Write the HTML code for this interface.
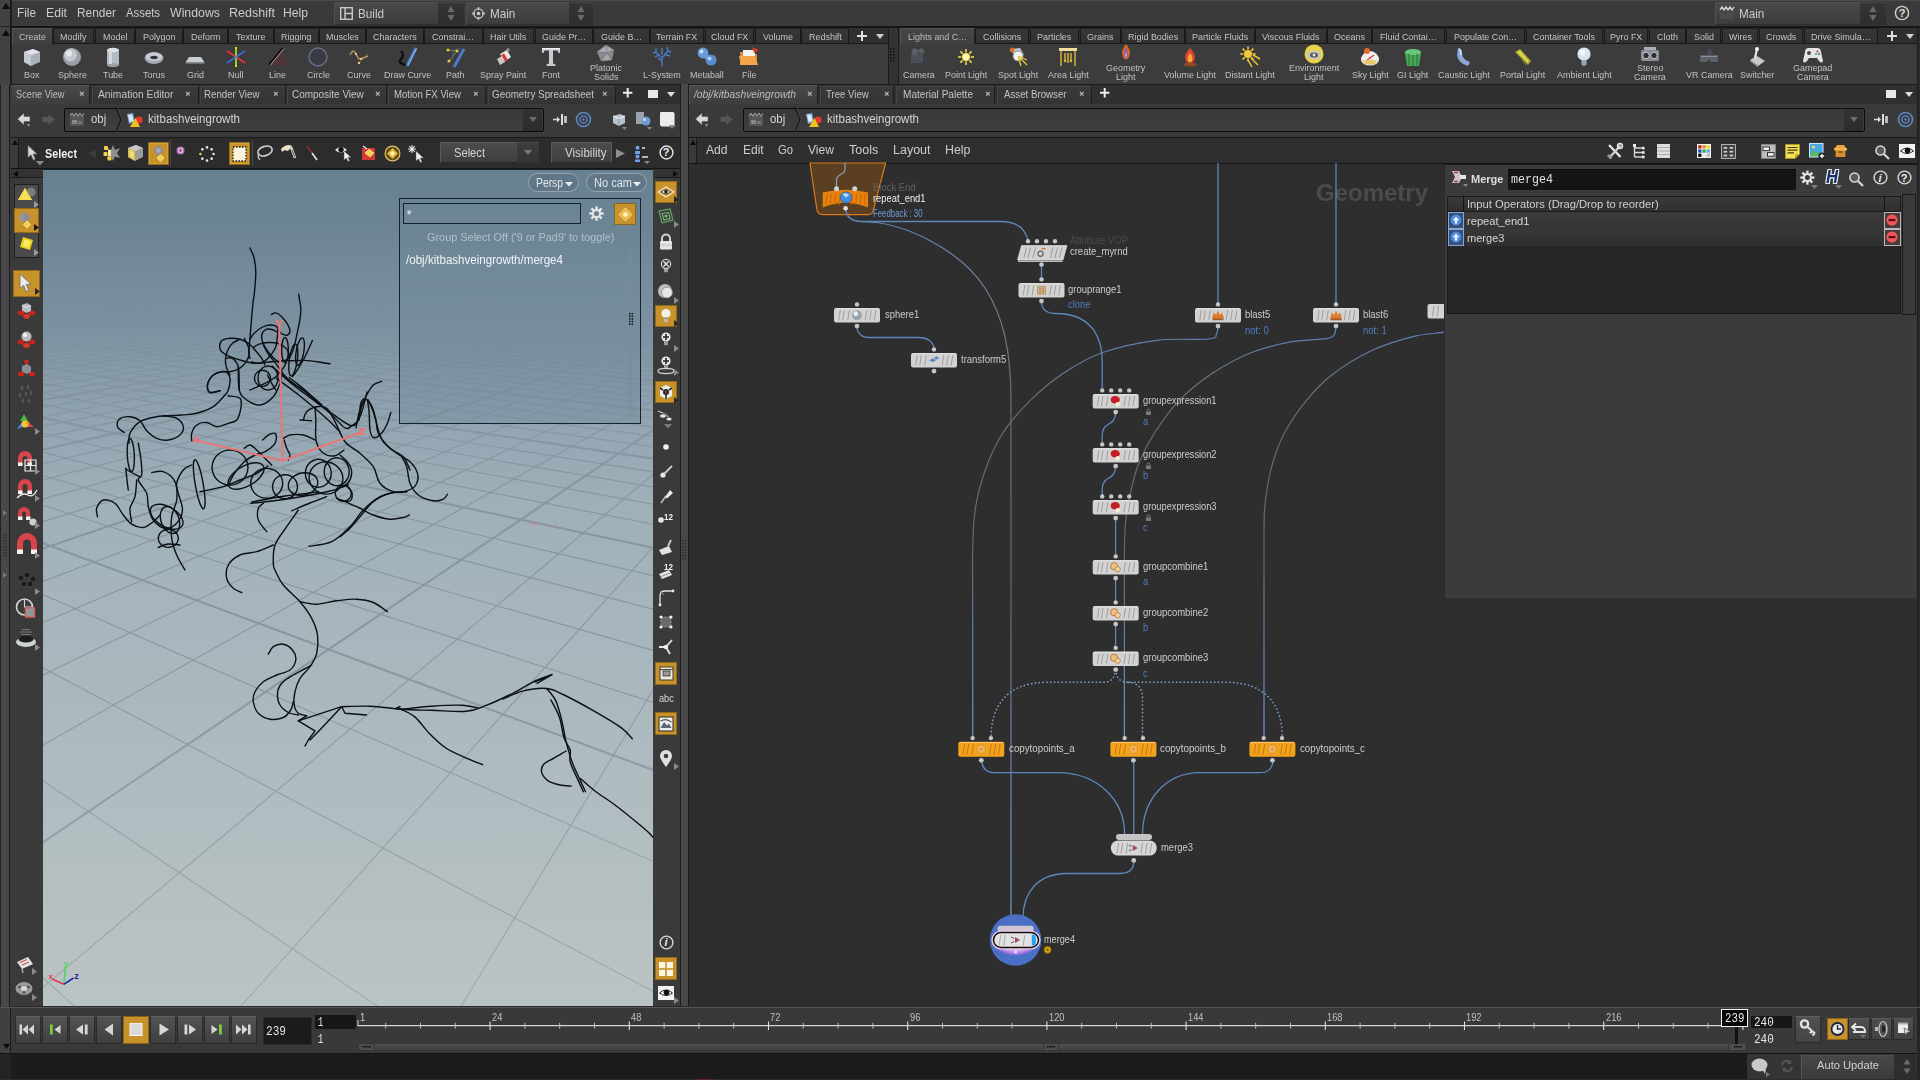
<!DOCTYPE html>
<html><head><meta charset="utf-8"><title>Houdini</title><style>
*{box-sizing:border-box;margin:0;padding:0}
html,body{width:1920px;height:1080px;overflow:hidden;background:#3a3a3a;font-family:"Liberation Sans",sans-serif;color:#ccc;font-size:12px}
.a{position:absolute}
.t{position:absolute;white-space:nowrap;line-height:1}
svg{position:absolute;overflow:visible}
</style></head><body>
<div class="a" style="left:0px;top:0px;width:1920px;height:27px;background:#3a3a3a;border-top:1px solid #4a4a4a"></div>
<div class="a" style="left:0px;top:26px;width:1920px;height:2px;background:#161616;"></div>
<div class="a" style="left:0px;top:0px;width:10px;height:1080px;background:#424242;"></div>
<div class="a" style="left:10px;top:0px;width:1.5px;height:1053px;background:#1c1c1c;"></div>
<svg class="a" style="left:2px;top:3px;" width="8" height="7" viewBox="0 0 8 7"><path d="M4 0 L8 6 L0 6Z" fill="#0c0c0c"/></svg>
<svg class="a" style="left:2px;top:30px;" width="8" height="7" viewBox="0 0 8 7"><path d="M4 0 L8 6 L0 6Z" fill="#0c0c0c"/></svg>
<div class="a" style="left:0px;top:26px;width:10px;height:1px;background:#222;"></div>
<div class="t" style="left:17.00px;top:7.36px;font-size:12.8px;color:#cbcbcb;transform:scaleX(0.9212);transform-origin:0 0;">File</div>
<div class="t" style="left:46.00px;top:7.36px;font-size:12.8px;color:#cbcbcb;transform:scaleX(0.9521);transform-origin:0 0;">Edit</div>
<div class="t" style="left:77.00px;top:7.36px;font-size:12.8px;color:#cbcbcb;transform:scaleX(0.9289);transform-origin:0 0;">Render</div>
<div class="t" style="left:126.00px;top:7.36px;font-size:12.8px;color:#cbcbcb;transform:scaleX(0.8851);transform-origin:0 0;">Assets</div>
<div class="t" style="left:170.00px;top:7.36px;font-size:12.8px;color:#cbcbcb;transform:scaleX(0.9629);transform-origin:0 0;">Windows</div>
<div class="t" style="left:229.00px;top:7.36px;font-size:12.8px;color:#cbcbcb;transform:scaleX(0.9796);transform-origin:0 0;">Redshift</div>
<div class="t" style="left:283.00px;top:7.36px;font-size:12.8px;color:#cbcbcb;transform:scaleX(0.9496);transform-origin:0 0;">Help</div>
<div class="a" style="left:334px;top:2px;width:104px;height:23px;background:linear-gradient(#4a4a4a,#3c3c3c);border:1px solid #505050;border-right:none;border-bottom-color:#2c2c2c"></div>
<div class="a" style="left:438px;top:2px;width:26px;height:23px;background:linear-gradient(#353535,#2e2e2e);border-top:1px solid #444;"></div>
<svg class="a" style="left:447px;top:6px;" width="8" height="15" viewBox="0 0 8 15"><path d="M4 0 L7.5 6 L0.5 6Z" fill="#6a6a6a"/><path d="M4 15 L7.5 9 L0.5 9 Z" fill="#6a6a6a"/></svg>
<div class="t" style="left:358.00px;top:7.30px;font-size:13px;color:#cbcbcb;transform:scaleX(0.9000);transform-origin:0 0;">Build</div>
<svg class="a" style="left:340px;top:7px;" width="13" height="13" viewBox="0 0 13 13"><rect x="0.7" y="0.7" width="11.6" height="11.6" fill="none" stroke="#c8c8c8" stroke-width="1.4"/><path d="M5 1V12M5 6.5H12" stroke="#c8c8c8" stroke-width="1.4"/></svg>
<div class="a" style="left:466px;top:2px;width:103px;height:23px;background:linear-gradient(#4a4a4a,#3c3c3c);border:1px solid #505050;border-right:none;border-bottom-color:#2c2c2c"></div>
<div class="a" style="left:569px;top:2px;width:24px;height:23px;background:linear-gradient(#353535,#2e2e2e);border-top:1px solid #444;"></div>
<svg class="a" style="left:577px;top:6px;" width="8" height="15" viewBox="0 0 8 15"><path d="M4 0 L7.5 6 L0.5 6Z" fill="#6a6a6a"/><path d="M4 15 L7.5 9 L0.5 9 Z" fill="#6a6a6a"/></svg>
<div class="t" style="left:490.00px;top:7.30px;font-size:13px;color:#cbcbcb;transform:scaleX(0.9000);transform-origin:0 0;">Main</div>
<svg class="a" style="left:472px;top:7px;" width="13" height="13" viewBox="0 0 13 13"><circle cx="6.5" cy="6.5" r="4.6" fill="none" stroke="#c8c8c8" stroke-width="1.3"/><circle cx="6.5" cy="6.5" r="1.8" fill="#c8c8c8"/><path d="M6.5 0V3M6.5 10V13M0 6.5H3M10 6.5H13" stroke="#c8c8c8" stroke-width="1.3"/></svg>
<div class="a" style="left:1715px;top:2px;width:145px;height:23px;background:linear-gradient(#4a4a4a,#3c3c3c);border:1px solid #505050;border-right:none;border-bottom-color:#2c2c2c"></div>
<div class="a" style="left:1860px;top:2px;width:26px;height:23px;background:linear-gradient(#353535,#2e2e2e);border-top:1px solid #444;"></div>
<svg class="a" style="left:1869px;top:6px;" width="8" height="15" viewBox="0 0 8 15"><path d="M4 0 L7.5 6 L0.5 6Z" fill="#6a6a6a"/><path d="M4 15 L7.5 9 L0.5 9 Z" fill="#6a6a6a"/></svg>
<div class="t" style="left:1739.00px;top:7.30px;font-size:13px;color:#cbcbcb;transform:scaleX(0.9000);transform-origin:0 0;">Main</div>
<svg class="a" style="left:1719px;top:6px;" width="16" height="14" viewBox="0 0 16 14"><path d="M1 6H15V13H1Z" fill="#4a4a4a"/><path d="M1 4L3 1L5 4L7 1L9 4L11 1L13 4L15 1" stroke="#ddd" stroke-width="1.3" fill="none"/></svg>
<svg class="a" style="left:1894px;top:5px;" width="16" height="16" viewBox="0 0 16 16"><circle cx="8" cy="8" r="6.6" fill="none" stroke="#d0d0d0" stroke-width="1.4"/></svg>
<div class="t" style="left:1898.64px;top:8.19px;font-size:11px;color:#e0e0e0;transform:scaleX(1.0000);transform-origin:0 0;font-weight:bold;">?</div>
<div class="a" style="left:12px;top:28px;width:876px;height:56px;background:#3c3c3c;"></div>
<div class="a" style="left:12px;top:28px;width:876px;height:16px;background:#2f2f2f;border-bottom:1px solid #1a1a1a"></div>
<div class="a" style="left:12px;top:28px;width:41px;height:17px;background:linear-gradient(#474747,#3e3e3e);border-left:1px solid #555;border-top:1px solid #555;border-right:1px solid #222"></div>
<div class="t" style="left:19.03px;top:31.64px;font-size:9.4px;color:#bdbdbd;transform:scaleX(0.9550);transform-origin:0 0;">Create</div>
<div class="a" style="left:53px;top:28px;width:41px;height:16px;background:linear-gradient(#373737,#303030);border:1px solid #191919;border-top:1px solid #222"></div>
<div class="t" style="left:60.28px;top:31.64px;font-size:9.4px;color:#c4c4c4;transform:scaleX(0.9550);transform-origin:0 0;">Modify</div>
<div class="a" style="left:95px;top:28px;width:40px;height:16px;background:linear-gradient(#373737,#303030);border:1px solid #191919;border-top:1px solid #222"></div>
<div class="t" style="left:102.77px;top:31.64px;font-size:9.4px;color:#c4c4c4;transform:scaleX(0.9550);transform-origin:0 0;">Model</div>
<div class="a" style="left:135px;top:28px;width:48px;height:16px;background:linear-gradient(#373737,#303030);border:1px solid #191919;border-top:1px solid #222"></div>
<div class="t" style="left:142.78px;top:31.64px;font-size:9.4px;color:#c4c4c4;transform:scaleX(0.9550);transform-origin:0 0;">Polygon</div>
<div class="a" style="left:183px;top:28px;width:45px;height:16px;background:linear-gradient(#373737,#303030);border:1px solid #191919;border-top:1px solid #222"></div>
<div class="t" style="left:190.79px;top:31.64px;font-size:9.4px;color:#c4c4c4;transform:scaleX(0.9550);transform-origin:0 0;">Deform</div>
<div class="a" style="left:228px;top:28px;width:46px;height:16px;background:linear-gradient(#373737,#303030);border:1px solid #191919;border-top:1px solid #222"></div>
<div class="t" style="left:236.28px;top:31.64px;font-size:9.4px;color:#c4c4c4;transform:scaleX(0.9550);transform-origin:0 0;">Texture</div>
<div class="a" style="left:274px;top:28px;width:45px;height:16px;background:linear-gradient(#373737,#303030);border:1px solid #191919;border-top:1px solid #222"></div>
<div class="t" style="left:281.28px;top:31.64px;font-size:9.4px;color:#c4c4c4;transform:scaleX(0.9550);transform-origin:0 0;">Rigging</div>
<div class="a" style="left:319px;top:28px;width:47px;height:16px;background:linear-gradient(#373737,#303030);border:1px solid #191919;border-top:1px solid #222"></div>
<div class="t" style="left:326.04px;top:31.64px;font-size:9.4px;color:#c4c4c4;transform:scaleX(0.9550);transform-origin:0 0;">Muscles</div>
<div class="a" style="left:366px;top:28px;width:58px;height:16px;background:linear-gradient(#373737,#303030);border:1px solid #191919;border-top:1px solid #222"></div>
<div class="t" style="left:373.05px;top:31.64px;font-size:9.4px;color:#c4c4c4;transform:scaleX(0.9550);transform-origin:0 0;">Characters</div>
<div class="a" style="left:424px;top:28px;width:59px;height:16px;background:linear-gradient(#373737,#303030);border:1px solid #191919;border-top:1px solid #222"></div>
<div class="t" style="left:432.30px;top:31.64px;font-size:9.4px;color:#c4c4c4;transform:scaleX(0.9550);transform-origin:0 0;">Constrai…</div>
<div class="a" style="left:483px;top:28px;width:51px;height:16px;background:linear-gradient(#373737,#303030);border:1px solid #191919;border-top:1px solid #222"></div>
<div class="t" style="left:490.30px;top:31.64px;font-size:9.4px;color:#c4c4c4;transform:scaleX(0.9550);transform-origin:0 0;">Hair Utils</div>
<div class="a" style="left:535px;top:28px;width:58px;height:16px;background:linear-gradient(#373737,#303030);border:1px solid #191919;border-top:1px solid #222"></div>
<div class="t" style="left:541.80px;top:31.64px;font-size:9.4px;color:#c4c4c4;transform:scaleX(0.9550);transform-origin:0 0;">Guide Pr…</div>
<div class="a" style="left:593px;top:28px;width:57px;height:16px;background:linear-gradient(#373737,#303030);border:1px solid #191919;border-top:1px solid #222"></div>
<div class="t" style="left:600.79px;top:31.64px;font-size:9.4px;color:#c4c4c4;transform:scaleX(0.9550);transform-origin:0 0;">Guide B…</div>
<div class="a" style="left:650px;top:28px;width:54px;height:16px;background:linear-gradient(#373737,#303030);border:1px solid #191919;border-top:1px solid #222"></div>
<div class="t" style="left:656.30px;top:31.64px;font-size:9.4px;color:#c4c4c4;transform:scaleX(0.9550);transform-origin:0 0;">Terrain FX</div>
<div class="a" style="left:705px;top:28px;width:49px;height:16px;background:linear-gradient(#373737,#303030);border:1px solid #191919;border-top:1px solid #222"></div>
<div class="t" style="left:710.79px;top:31.64px;font-size:9.4px;color:#c4c4c4;transform:scaleX(0.9550);transform-origin:0 0;">Cloud FX</div>
<div class="a" style="left:755px;top:28px;width:46px;height:16px;background:linear-gradient(#373737,#303030);border:1px solid #191919;border-top:1px solid #222"></div>
<div class="t" style="left:763.03px;top:31.64px;font-size:9.4px;color:#c4c4c4;transform:scaleX(0.9550);transform-origin:0 0;">Volume</div>
<div class="a" style="left:801px;top:28px;width:48px;height:16px;background:linear-gradient(#373737,#303030);border:1px solid #191919;border-top:1px solid #222"></div>
<div class="t" style="left:808.53px;top:31.64px;font-size:9.4px;color:#c4c4c4;transform:scaleX(0.9550);transform-origin:0 0;">Redshift</div>
<svg class="a" style="left:856.5px;top:31px;" width="10" height="10" viewBox="0 0 10 10"><path d="M5 0V10M0 5H10" stroke="#e0e0e0" stroke-width="2"/></svg>
<svg class="a" style="left:876px;top:34px;" width="8" height="5" viewBox="0 0 8 5"><path d="M0 0H8L4 5Z" fill="#d0d0d0"/></svg>
<div class="a" style="left:899px;top:28px;width:1018px;height:56px;background:#3c3c3c;"></div>
<div class="a" style="left:899px;top:28px;width:1018px;height:16px;background:#2f2f2f;border-bottom:1px solid #1a1a1a"></div>
<div class="a" style="left:900px;top:28px;width:75px;height:17px;background:linear-gradient(#474747,#3e3e3e);border-left:1px solid #555;border-top:1px solid #555;border-right:1px solid #222"></div>
<div class="t" style="left:907.81px;top:31.64px;font-size:9.4px;color:#bdbdbd;transform:scaleX(0.9550);transform-origin:0 0;">Lights and C…</div>
<div class="a" style="left:975px;top:28px;width:54px;height:16px;background:linear-gradient(#373737,#303030);border:1px solid #191919;border-top:1px solid #222"></div>
<div class="t" style="left:982.79px;top:31.64px;font-size:9.4px;color:#c4c4c4;transform:scaleX(0.9550);transform-origin:0 0;">Collisions</div>
<div class="a" style="left:1030px;top:28px;width:49px;height:16px;background:linear-gradient(#373737,#303030);border:1px solid #191919;border-top:1px solid #222"></div>
<div class="t" style="left:1037.29px;top:31.64px;font-size:9.4px;color:#c4c4c4;transform:scaleX(0.9550);transform-origin:0 0;">Particles</div>
<div class="a" style="left:1080px;top:28px;width:41px;height:16px;background:linear-gradient(#373737,#303030);border:1px solid #191919;border-top:1px solid #222"></div>
<div class="t" style="left:1087.28px;top:31.64px;font-size:9.4px;color:#c4c4c4;transform:scaleX(0.9550);transform-origin:0 0;">Grains</div>
<div class="a" style="left:1121px;top:28px;width:64px;height:16px;background:linear-gradient(#373737,#303030);border:1px solid #191919;border-top:1px solid #222"></div>
<div class="t" style="left:1127.80px;top:31.64px;font-size:9.4px;color:#c4c4c4;transform:scaleX(0.9550);transform-origin:0 0;">Rigid Bodies</div>
<div class="a" style="left:1185px;top:28px;width:70px;height:16px;background:linear-gradient(#373737,#303030);border:1px solid #191919;border-top:1px solid #222"></div>
<div class="t" style="left:1191.81px;top:31.64px;font-size:9.4px;color:#c4c4c4;transform:scaleX(0.9550);transform-origin:0 0;">Particle Fluids</div>
<div class="a" style="left:1255px;top:28px;width:72px;height:16px;background:linear-gradient(#373737,#303030);border:1px solid #191919;border-top:1px solid #222"></div>
<div class="t" style="left:1262.14px;top:31.64px;font-size:9.4px;color:#c4c4c4;transform:scaleX(0.9550);transform-origin:0 0;">Viscous Fluids</div>
<div class="a" style="left:1327px;top:28px;width:45px;height:16px;background:linear-gradient(#373737,#303030);border:1px solid #191919;border-top:1px solid #222"></div>
<div class="t" style="left:1334.03px;top:31.64px;font-size:9.4px;color:#c4c4c4;transform:scaleX(0.9550);transform-origin:0 0;">Oceans</div>
<div class="a" style="left:1372px;top:28px;width:73px;height:16px;background:linear-gradient(#373737,#303030);border:1px solid #191919;border-top:1px solid #222"></div>
<div class="t" style="left:1380.06px;top:31.64px;font-size:9.4px;color:#c4c4c4;transform:scaleX(0.9550);transform-origin:0 0;">Fluid Contai…</div>
<div class="a" style="left:1446px;top:28px;width:79px;height:16px;background:linear-gradient(#373737,#303030);border:1px solid #191919;border-top:1px solid #222"></div>
<div class="t" style="left:1453.81px;top:31.64px;font-size:9.4px;color:#c4c4c4;transform:scaleX(0.9550);transform-origin:0 0;">Populate Con…</div>
<div class="a" style="left:1526px;top:28px;width:77px;height:16px;background:linear-gradient(#373737,#303030);border:1px solid #191919;border-top:1px solid #222"></div>
<div class="t" style="left:1533.39px;top:31.64px;font-size:9.4px;color:#c4c4c4;transform:scaleX(0.9550);transform-origin:0 0;">Container Tools</div>
<div class="a" style="left:1604px;top:28px;width:44px;height:16px;background:linear-gradient(#373737,#303030);border:1px solid #191919;border-top:1px solid #222"></div>
<div class="t" style="left:1609.79px;top:31.64px;font-size:9.4px;color:#c4c4c4;transform:scaleX(0.9550);transform-origin:0 0;">Pyro FX</div>
<div class="a" style="left:1649px;top:28px;width:37px;height:16px;background:linear-gradient(#373737,#303030);border:1px solid #191919;border-top:1px solid #222"></div>
<div class="t" style="left:1657.02px;top:31.64px;font-size:9.4px;color:#c4c4c4;transform:scaleX(0.9550);transform-origin:0 0;">Cloth</div>
<div class="a" style="left:1686px;top:28px;width:35px;height:16px;background:linear-gradient(#373737,#303030);border:1px solid #191919;border-top:1px solid #222"></div>
<div class="t" style="left:1693.52px;top:31.64px;font-size:9.4px;color:#c4c4c4;transform:scaleX(0.9550);transform-origin:0 0;">Solid</div>
<div class="a" style="left:1722px;top:28px;width:36px;height:16px;background:linear-gradient(#373737,#303030);border:1px solid #191919;border-top:1px solid #222"></div>
<div class="t" style="left:1728.53px;top:31.64px;font-size:9.4px;color:#c4c4c4;transform:scaleX(0.9550);transform-origin:0 0;">Wires</div>
<div class="a" style="left:1759px;top:28px;width:44px;height:16px;background:linear-gradient(#373737,#303030);border:1px solid #191919;border-top:1px solid #222"></div>
<div class="t" style="left:1765.79px;top:31.64px;font-size:9.4px;color:#c4c4c4;transform:scaleX(0.9550);transform-origin:0 0;">Crowds</div>
<div class="a" style="left:1804px;top:28px;width:74px;height:16px;background:linear-gradient(#373737,#303030);border:1px solid #191919;border-top:1px solid #222"></div>
<div class="t" style="left:1811.07px;top:31.64px;font-size:9.4px;color:#c4c4c4;transform:scaleX(0.9550);transform-origin:0 0;">Drive Simula…</div>
<svg class="a" style="left:1887px;top:31px;" width="10" height="10" viewBox="0 0 10 10"><path d="M5 0V10M0 5H10" stroke="#e0e0e0" stroke-width="2"/></svg>
<svg class="a" style="left:1906px;top:34px;" width="8" height="5" viewBox="0 0 8 5"><path d="M0 0H8L4 5Z" fill="#d0d0d0"/></svg>
<div class="a" style="left:888px;top:28px;width:11px;height:56px;background:#333;border-left:1px solid #1c1c1c;border-right:1px solid #1c1c1c"></div>
<svg class="a" style="left:890px;top:48px;" width="6" height="14" viewBox="0 0 6 14"><rect x="0" y="0" width="1.6" height="1.6" fill="#111"/><rect x="0" y="3" width="1.6" height="1.6" fill="#111"/><rect x="0" y="6" width="1.6" height="1.6" fill="#111"/><rect x="0" y="9" width="1.6" height="1.6" fill="#111"/><rect x="0" y="12" width="1.6" height="1.6" fill="#111"/><rect x="3" y="0" width="1.6" height="1.6" fill="#111"/><rect x="3" y="3" width="1.6" height="1.6" fill="#111"/><rect x="3" y="6" width="1.6" height="1.6" fill="#111"/><rect x="3" y="9" width="1.6" height="1.6" fill="#111"/><rect x="3" y="12" width="1.6" height="1.6" fill="#111"/></svg>
<div class="a" style="left:1917px;top:28px;width:3px;height:56px;background:#2a2a2a;border-left:1px solid #1c1c1c"></div>
<div class="a" style="left:12px;top:83.5px;width:1908px;height:1.5px;background:#1b1b1b;"></div>
<svg class="a" style="left:21px;top:46px;" width="22" height="22" viewBox="0 0 22 22"><path d="M3 6L12 3L19 6L19 16L10 20L3 16Z" fill="#a9b0b8"/><path d="M3 6L10 9L19 6L12 3Z" fill="#dfe3e8"/><path d="M3 6L10 9L10 20L3 16Z" fill="#c4cad2"/></svg>
<div class="t" style="left:24.26px;top:69.84px;font-size:9.4px;color:#c2c2c2;transform:scaleX(0.9550);transform-origin:0 0;">Box</div>
<svg class="a" style="left:61px;top:46px;" width="22" height="22" viewBox="0 0 22 22"><circle cx="11" cy="11" r="9" fill="#9aa0a8"/><circle cx="9.5" cy="9" r="6.5" fill="#c2c7ce"/><circle cx="8" cy="7.5" r="3" fill="#e4e7eb"/></svg>
<div class="t" style="left:57.52px;top:69.84px;font-size:9.4px;color:#c2c2c2;transform:scaleX(0.9550);transform-origin:0 0;">Sphere</div>
<svg class="a" style="left:102px;top:46px;" width="22" height="22" viewBox="0 0 22 22"><rect x="5" y="4" width="12" height="15" fill="#b4bac2"/><ellipse cx="11" cy="19" rx="6" ry="2" fill="#9aa0a8"/><ellipse cx="11" cy="4" rx="6" ry="2.2" fill="#e0e4e8"/><rect x="7" y="5" width="3" height="13" fill="#d4d9de"/></svg>
<div class="t" style="left:102.93px;top:69.84px;font-size:9.4px;color:#c2c2c2;transform:scaleX(0.9550);transform-origin:0 0;">Tube</div>
<svg class="a" style="left:143px;top:46px;" width="22" height="22" viewBox="0 0 22 22"><ellipse cx="11" cy="12" rx="9.5" ry="6" fill="#a4aab4"/><ellipse cx="11" cy="10.8" rx="8" ry="4.2" fill="#c8cdd4"/><ellipse cx="11" cy="11.5" rx="3.8" ry="1.7" fill="#2e3238"/></svg>
<div class="t" style="left:143.02px;top:69.84px;font-size:9.4px;color:#c2c2c2;transform:scaleX(0.9550);transform-origin:0 0;">Torus</div>
<svg class="a" style="left:184px;top:46px;" width="22" height="22" viewBox="0 0 22 22"><path d="M5 11H17L20.5 16.5H1.5Z" fill="#c8ccd2"/><path d="M1.5 16.5H20.5V17.6H1.5Z" fill="#8a9098"/></svg>
<div class="t" style="left:186.52px;top:69.84px;font-size:9.4px;color:#c2c2c2;transform:scaleX(0.9550);transform-origin:0 0;">Grid</div>
<svg class="a" style="left:225px;top:46px;" width="22" height="22" viewBox="0 0 22 22"><path d="M11 1V21" stroke="#e8d21c" stroke-width="2"/><path d="M2 5L20 17" stroke="#e0303a" stroke-width="2"/><path d="M20 5L2 17" stroke="#3a6ad8" stroke-width="2"/><path d="M11 3V19" stroke="#3ac83a" stroke-width="1" /></svg>
<div class="t" style="left:228.27px;top:69.84px;font-size:9.4px;color:#c2c2c2;transform:scaleX(0.9550);transform-origin:0 0;">Null</div>
<svg class="a" style="left:266px;top:46px;" width="22" height="22" viewBox="0 0 22 22"><path d="M3 19L17 2L20 19Z" fill="#5a3038" opacity=".7"/><path d="M3 19L17 2" stroke="#101010" stroke-width="2.2"/><path d="M4 19.5L18 2.5" stroke="#c8c8c8" stroke-width=".8"/></svg>
<div class="t" style="left:268.51px;top:69.84px;font-size:9.4px;color:#c2c2c2;transform:scaleX(0.9550);transform-origin:0 0;">Line</div>
<svg class="a" style="left:307px;top:46px;" width="22" height="22" viewBox="0 0 22 22"><circle cx="11" cy="11" r="9" fill="#3a3c44" stroke="#6a7088" stroke-width="1.4"/></svg>
<div class="t" style="left:306.53px;top:69.84px;font-size:9.4px;color:#c2c2c2;transform:scaleX(0.9550);transform-origin:0 0;">Circle</div>
<svg class="a" style="left:348px;top:46px;" width="22" height="22" viewBox="0 0 22 22"><path d="M2 9Q5 2 8 8T13 13T20 10" fill="none" stroke="#b89a6a" stroke-width="1.4"/><path d="M4 4L8 8L11 17L16 12L20 7" fill="none" stroke="#8a7a4a" stroke-width=".7" stroke-dasharray="1.5 1.2"/><circle cx="8" cy="8" r="1.2" fill="#e8c86a"/><circle cx="13" cy="13" r="1.2" fill="#e8c86a"/><circle cx="11" cy="17" r="1.2" fill="#e8c86a"/></svg>
<div class="t" style="left:347.03px;top:69.84px;font-size:9.4px;color:#c2c2c2;transform:scaleX(0.9550);transform-origin:0 0;">Curve</div>
<svg class="a" style="left:397px;top:46px;" width="22" height="22" viewBox="0 0 22 22"><path d="M4 5Q8 9 4 13T9 19" fill="none" stroke="#101014" stroke-width="2.4"/><path d="M10 20L19 2" stroke="#4a7ac8" stroke-width="3.2"/><path d="M11 19L19.5 2.5" stroke="#9ac0f0" stroke-width="1"/></svg>
<div class="t" style="left:384.31px;top:69.84px;font-size:9.4px;color:#c2c2c2;transform:scaleX(0.9550);transform-origin:0 0;">Draw Curve</div>
<svg class="a" style="left:444px;top:46px;" width="22" height="22" viewBox="0 0 22 22"><path d="M3 17Q10 14 9 8T17 3" fill="none" stroke="#3a5a9a" stroke-width="1"/><path d="M10 21L20 3" stroke="#4a7ac8" stroke-width="3"/><circle cx="4" cy="4" r="1.5" fill="#e8c83a"/><circle cx="13" cy="5" r="1.5" fill="#e8c83a"/><circle cx="5" cy="15" r="1.5" fill="#e8c83a"/><path d="M4 4L13 5L5 15" fill="none" stroke="#e8c83a" stroke-width=".8" stroke-dasharray="1.5 1.2"/></svg>
<div class="t" style="left:445.76px;top:69.84px;font-size:9.4px;color:#c2c2c2;transform:scaleX(0.9550);transform-origin:0 0;">Path</div>
<svg class="a" style="left:492px;top:46px;" width="22" height="22" viewBox="0 0 22 22"><path d="M8 8L15 4L19 11L12 16Z" fill="#e8e8e8"/><path d="M9 9L12 7.5L16 14L13 15.5Z" fill="#d83a3a"/><path d="M5 13L10 10L13 16L8 19Z" fill="#c8c8c8"/><circle cx="16" cy="4" r="1.8" fill="#9a9a9a"/></svg>
<div class="t" style="left:479.79px;top:69.84px;font-size:9.4px;color:#c2c2c2;transform:scaleX(0.9550);transform-origin:0 0;">Spray Paint</div>
<svg class="a" style="left:540px;top:46px;" width="22" height="22" viewBox="0 0 22 22"><path d="M2 2H20V7H18.5L17.5 4.5H13V17.5L15.5 18.5V20H6.5V18.5L9 17.5V4.5H4.5L3.5 7H2Z" fill="#c8ccd0"/><path d="M2 2H20V3.4H2Z" fill="#eef0f2"/></svg>
<div class="t" style="left:542.02px;top:69.84px;font-size:9.4px;color:#c2c2c2;transform:scaleX(0.9550);transform-origin:0 0;">Font</div>
<svg class="a" style="left:595px;top:43px;" width="22" height="22" viewBox="0 0 22 22"><path d="M11 2L19 7L17 17L6 18L2 9Z" fill="#8a8a90"/><path d="M11 2L12 10L19 7ZM12 10L17 17L6 18ZM12 10L2 9L11 2" fill="#a8a8ae" stroke="#6a6a70" stroke-width=".6"/></svg>
<div class="t" style="left:590.03px;top:62.84px;font-size:9.4px;color:#c2c2c2;transform:scaleX(0.9550);transform-origin:0 0;">Platonic</div>
<div class="t" style="left:593.77px;top:71.84px;font-size:9.4px;color:#c2c2c2;transform:scaleX(0.9550);transform-origin:0 0;">Solids</div>
<svg class="a" style="left:651px;top:46px;" width="22" height="22" viewBox="0 0 22 22"><path d="M11 21V12M11 12L5 6M11 12L17 5M11 15L7 12M11 9V2M5 6L2 7M5 6L5 2M17 5L20 6M17 5L16 1M8 9L4 11M14 8.5L19 10" stroke="#4a7ac8" stroke-width="1.4" fill="none"/></svg>
<div class="t" style="left:643.04px;top:69.84px;font-size:9.4px;color:#c2c2c2;transform:scaleX(0.9550);transform-origin:0 0;">L-System</div>
<svg class="a" style="left:696px;top:46px;" width="22" height="22" viewBox="0 0 22 22"><circle cx="7" cy="7" r="5.4" fill="#6a9ad8"/><circle cx="15" cy="14" r="5.6" fill="#5a8ad0"/><path d="M9 10L12 11" stroke="#6a9ad8" stroke-width="5"/><circle cx="5.5" cy="5.5" r="2" fill="#c8e0f8"/><circle cx="13.5" cy="12.5" r="2" fill="#b8d4f4"/></svg>
<div class="t" style="left:690.03px;top:69.84px;font-size:9.4px;color:#c2c2c2;transform:scaleX(0.9550);transform-origin:0 0;">Metaball</div>
<svg class="a" style="left:738px;top:46px;" width="22" height="22" viewBox="0 0 22 22"><path d="M2 6H8L10 8H19V19H2Z" fill="#e8862a"/><path d="M5 4H17V14H5Z" fill="#f4f4f4"/><path d="M1 10H17L20 19H3Z" fill="#f4a44a"/><path d="M14 1L21 4L16 7Z" fill="#d83a2a"/></svg>
<div class="t" style="left:741.77px;top:69.84px;font-size:9.4px;color:#c2c2c2;transform:scaleX(0.9550);transform-origin:0 0;">File</div>
<svg class="a" style="left:908px;top:46px;" width="22" height="22" viewBox="0 0 22 22"><path d="M3 8H15V17H3Z" fill="#4a4e56"/><circle cx="7" cy="6" r="3.4" fill="#5a5e66"/><circle cx="13.5" cy="5" r="2.8" fill="#5a5e66"/><path d="M15 11L20 8V17L15 14Z" fill="#3a3e46"/><path d="M5 17L3 21M12 17L14 21" stroke="#3a3e46" stroke-width="1.4"/></svg>
<div class="t" style="left:903.04px;top:69.84px;font-size:9.4px;color:#c2c2c2;transform:scaleX(0.9550);transform-origin:0 0;">Camera</div>
<svg class="a" style="left:955px;top:46px;" width="22" height="22" viewBox="0 0 22 22"><line x1="15.8" y1="11.0" x2="19.0" y2="11.0" stroke="#f0d84a" stroke-width="1.6"/><line x1="14.4" y1="14.4" x2="16.6" y2="16.6" stroke="#f0d84a" stroke-width="1.6"/><line x1="11.0" y1="15.8" x2="11.0" y2="19.0" stroke="#f0d84a" stroke-width="1.6"/><line x1="7.6" y1="14.4" x2="5.4" y2="16.6" stroke="#f0d84a" stroke-width="1.6"/><line x1="6.2" y1="11.0" x2="3.0" y2="11.0" stroke="#f0d84a" stroke-width="1.6"/><line x1="7.6" y1="7.6" x2="5.4" y2="5.4" stroke="#f0d84a" stroke-width="1.6"/><line x1="11.0" y1="6.2" x2="11.0" y2="3.0" stroke="#f0d84a" stroke-width="1.6"/><line x1="14.4" y1="7.6" x2="16.6" y2="5.4" stroke="#f0d84a" stroke-width="1.6"/><circle cx="11" cy="11" r="4.2" fill="#f0d84a"/><circle cx="11" cy="11" r="3" fill="#fff6c0"/></svg>
<div class="t" style="left:944.79px;top:69.84px;font-size:9.4px;color:#c2c2c2;transform:scaleX(0.9550);transform-origin:0 0;">Point Light</div>
<svg class="a" style="left:1007px;top:46px;" width="22" height="22" viewBox="0 0 22 22"><path d="M4 3L13 2L17 9L8 12Z" fill="#c8c8c8"/><circle cx="11" cy="10" r="5" fill="#f4f4f4" stroke="#8a8a8a"/><path d="M11 10L20 19M11 10L14 20M11 10L20 14" stroke="#e8c83a" stroke-width="1.3"/><circle cx="5" cy="4" r="2.4" fill="#d86a2a"/></svg>
<div class="t" style="left:997.78px;top:69.84px;font-size:9.4px;color:#c2c2c2;transform:scaleX(0.9550);transform-origin:0 0;">Spot Light</div>
<svg class="a" style="left:1057px;top:46px;" width="22" height="22" viewBox="0 0 22 22"><path d="M2 2H20V5H2Z" fill="#f0e09a"/><path d="M4 5V20M18 5V20" stroke="#c8a83a" stroke-width="1.6"/><path d="M8 7V15M11 7V17M14 7V15" stroke="#e8c83a" stroke-width="1.3"/><path d="M6.5 14L8 17L9.5 14M12.5 14L14 17L15.5 14" fill="#e8c83a"/></svg>
<div class="t" style="left:1047.54px;top:69.84px;font-size:9.4px;color:#c2c2c2;transform:scaleX(0.9550);transform-origin:0 0;">Area Light</div>
<svg class="a" style="left:1115px;top:43px;" width="22" height="22" viewBox="0 0 22 22"><path d="M11 1Q17 8 14 14Q11 19 8 14Q5 8 11 1Z" fill="#d8642a"/><path d="M11 5Q14 10 12.5 14Q11 16 9.5 14Q8 10 11 5Z" fill="#8a5ac8"/><path d="M11 9Q12.5 12 11 15Q9.5 12 11 9Z" fill="#f4d84a"/></svg>
<div class="t" style="left:1106.29px;top:62.84px;font-size:9.4px;color:#c2c2c2;transform:scaleX(0.9550);transform-origin:0 0;">Geometry</div>
<div class="t" style="left:1116.27px;top:71.84px;font-size:9.4px;color:#c2c2c2;transform:scaleX(0.9550);transform-origin:0 0;">Light</div>
<svg class="a" style="left:1179px;top:46px;" width="22" height="22" viewBox="0 0 22 22"><path d="M11 2Q18 9 15 15Q11 20 7 15Q4 9 11 2Z" fill="#e0442a"/><path d="M11 7Q14.5 11 13 15Q11 17.5 9 15Q7.5 11 11 7Z" fill="#f4a83a"/><ellipse cx="11" cy="18.5" rx="7" ry="2" fill="#8a4a2a"/></svg>
<div class="t" style="left:1164.05px;top:69.84px;font-size:9.4px;color:#c2c2c2;transform:scaleX(0.9550);transform-origin:0 0;">Volume Light</div>
<svg class="a" style="left:1239px;top:46px;" width="22" height="22" viewBox="0 0 22 22"><line x1="13.6" y1="8.0" x2="16.6" y2="8.0" stroke="#f0c83a" stroke-width="1.6"/><line x1="12.3" y1="11.3" x2="14.4" y2="13.4" stroke="#f0c83a" stroke-width="1.6"/><line x1="9.0" y1="12.6" x2="9.0" y2="15.6" stroke="#f0c83a" stroke-width="1.6"/><line x1="5.7" y1="11.3" x2="3.6" y2="13.4" stroke="#f0c83a" stroke-width="1.6"/><line x1="4.4" y1="8.0" x2="1.4" y2="8.0" stroke="#f0c83a" stroke-width="1.6"/><line x1="5.7" y1="4.7" x2="3.6" y2="2.6" stroke="#f0c83a" stroke-width="1.6"/><line x1="9.0" y1="3.4" x2="9.0" y2="0.4" stroke="#f0c83a" stroke-width="1.6"/><line x1="12.3" y1="4.7" x2="14.4" y2="2.6" stroke="#f0c83a" stroke-width="1.6"/><circle cx="9" cy="8" r="4" fill="#f0c83a"/><path d="M12 12L19 19M9 14L13 21M14 9L21 13" stroke="#e8c83a" stroke-width="1.5"/></svg>
<div class="t" style="left:1225.05px;top:69.84px;font-size:9.4px;color:#c2c2c2;transform:scaleX(0.9550);transform-origin:0 0;">Distant Light</div>
<svg class="a" style="left:1303px;top:43px;" width="22" height="22" viewBox="0 0 22 22"><circle cx="11" cy="11" r="9.5" fill="#e8d44a"/><ellipse cx="11" cy="12" rx="7.5" ry="4.6" fill="#c8c8b8"/><ellipse cx="11" cy="12" rx="4" ry="2.6" fill="#5a5a5a"/><circle cx="11" cy="12" r="1.4" fill="#e8e8e8"/></svg>
<div class="t" style="left:1288.80px;top:62.84px;font-size:9.4px;color:#c2c2c2;transform:scaleX(0.9550);transform-origin:0 0;">Environment</div>
<div class="t" style="left:1304.27px;top:71.84px;font-size:9.4px;color:#c2c2c2;transform:scaleX(0.9550);transform-origin:0 0;">Light</div>
<svg class="a" style="left:1359px;top:46px;" width="22" height="22" viewBox="0 0 22 22"><ellipse cx="11" cy="14" rx="9" ry="5.6" fill="#e8dcc0"/><path d="M2 14A9 9 0 0 1 20 14Z" fill="#f0f0f0"/><circle cx="8" cy="5" r="3" fill="#e86a2a"/><path d="M8 14L15 9" stroke="#d83a3a" stroke-width="1.4"/><ellipse cx="11" cy="16" rx="6" ry="2.4" fill="#e8c86a"/></svg>
<div class="t" style="left:1351.54px;top:69.84px;font-size:9.4px;color:#c2c2c2;transform:scaleX(0.9550);transform-origin:0 0;">Sky Light</div>
<svg class="a" style="left:1402px;top:46px;" width="22" height="22" viewBox="0 0 22 22"><path d="M3 7Q11 3 19 7L17 20H5Z" fill="#4aa85a"/><ellipse cx="11" cy="6" rx="8" ry="3" fill="#6ac87a"/><path d="M7 8V19M11 9V20M15 8V19" stroke="#2a7a3a" stroke-width="1.2"/></svg>
<div class="t" style="left:1397.28px;top:69.84px;font-size:9.4px;color:#c2c2c2;transform:scaleX(0.9550);transform-origin:0 0;">GI Light</div>
<svg class="a" style="left:1453px;top:46px;" width="22" height="22" viewBox="0 0 22 22"><path d="M5 2Q9 2 9 8Q10 14 17 16L15 20Q5 17 4 9Z" fill="#8aa8d8"/><path d="M6 3Q8 4 8 9" stroke="#d8e6f8" stroke-width="1.6" fill="none"/></svg>
<div class="t" style="left:1438.05px;top:69.84px;font-size:9.4px;color:#c2c2c2;transform:scaleX(0.9550);transform-origin:0 0;">Caustic Light</div>
<svg class="a" style="left:1512px;top:46px;" width="22" height="22" viewBox="0 0 22 22"><path d="M3 6L8 3L19 15L16 19Z" fill="#a8a83a"/><path d="M5 6L8 4.5L17 15L15.5 17Z" fill="#d8d84a"/><path d="M9 12L14 19" stroke="#6a7a2a" stroke-width="1.4"/></svg>
<div class="t" style="left:1500.29px;top:69.84px;font-size:9.4px;color:#c2c2c2;transform:scaleX(0.9550);transform-origin:0 0;">Portal Light</div>
<svg class="a" style="left:1573px;top:46px;" width="22" height="22" viewBox="0 0 22 22"><circle cx="11" cy="8" r="6.6" fill="#d8e4ea"/><circle cx="9.5" cy="6.5" r="3" fill="#f4f8fa"/><rect x="8.5" y="14" width="5" height="5" fill="#9aa8b0"/><rect x="9.5" y="19" width="3" height="1.6" fill="#6a7880"/></svg>
<div class="t" style="left:1556.55px;top:69.84px;font-size:9.4px;color:#c2c2c2;transform:scaleX(0.9550);transform-origin:0 0;">Ambient Light</div>
<svg class="a" style="left:1639px;top:43px;" width="22" height="22" viewBox="0 0 22 22"><rect x="2" y="7" width="18" height="11" rx="1.5" fill="#8a8e96"/><circle cx="7" cy="12.5" r="3.2" fill="#2a2e36" stroke="#c8c8c8"/><circle cx="15" cy="12.5" r="3.2" fill="#2a2e36" stroke="#c8c8c8"/><rect x="5" y="4" width="12" height="3" fill="#a8acb4"/></svg>
<div class="t" style="left:1636.77px;top:62.84px;font-size:9.4px;color:#c2c2c2;transform:scaleX(0.9550);transform-origin:0 0;">Stereo</div>
<div class="t" style="left:1634.04px;top:71.84px;font-size:9.4px;color:#c2c2c2;transform:scaleX(0.9550);transform-origin:0 0;">Camera</div>
<svg class="a" style="left:1698px;top:46px;" width="22" height="22" viewBox="0 0 22 22"><path d="M2 9H20V16H13L11 13.5L9 16H2Z" fill="#5a6068"/><path d="M11 2L15 7L13 9H9Z" fill="#4a5058"/><path d="M3 10.5H19" stroke="#8a9098" stroke-width="1"/></svg>
<div class="t" style="left:1685.55px;top:69.84px;font-size:9.4px;color:#c2c2c2;transform:scaleX(0.9550);transform-origin:0 0;">VR Camera</div>
<svg class="a" style="left:1746px;top:46px;" width="22" height="22" viewBox="0 0 22 22"><path d="M4 14L11 10L19 15L12 20Z" fill="#c8c8c8"/><path d="M9 12L11 3" stroke="#e8e8e8" stroke-width="2.2"/><circle cx="11" cy="3" r="2" fill="#f4f4f4"/><path d="M4 14L12 20V21.6L4 15.6Z" fill="#8a8a8a"/></svg>
<div class="t" style="left:1739.79px;top:69.84px;font-size:9.4px;color:#c2c2c2;transform:scaleX(0.9550);transform-origin:0 0;">Switcher</div>
<svg class="a" style="left:1802px;top:43px;" width="22" height="22" viewBox="0 0 22 22"><path d="M3 9Q3 5 7 5H15Q19 5 19 9L21 18Q20 21 17 18L15 15H7L5 18Q2 21 1 18Z" fill="#e4e4e4"/><circle cx="7" cy="10" r="2" fill="#4a4a4a"/><circle cx="15.5" cy="8.6" r="1.1" fill="#d83a3a"/><circle cx="17" cy="11" r="1.1" fill="#3a6ad8"/><circle cx="14" cy="11" r="1.1" fill="#3ac83a"/></svg>
<div class="t" style="left:1793.29px;top:62.84px;font-size:9.4px;color:#c2c2c2;transform:scaleX(0.9550);transform-origin:0 0;">Gamepad</div>
<div class="t" style="left:1797.04px;top:71.84px;font-size:9.4px;color:#c2c2c2;transform:scaleX(0.9550);transform-origin:0 0;">Camera</div>
<div class="a" style="left:11px;top:85px;width:669px;height:19px;background:#303030;"></div>
<div class="a" style="left:11px;top:85px;width:79px;height:20px;background:linear-gradient(#484848,#3d3d3d);border-left:1px solid #555;border-top:1px solid #565656;border-right:1px solid #222"></div>
<div class="t" style="left:15.60px;top:88.91px;font-size:10.5px;color:#bcbcbc;transform:scaleX(0.8777);transform-origin:0 0;">Scene View</div>
<svg class="a" style="left:80.2px;top:92.2px;" width="3.6" height="3.6" viewBox="0 0 3.6 3.6"><path d="M0 0L3.6 3.6M3.6 0L0 3.6" stroke="#b8b8b8" stroke-width="1.1"/></svg>
<div class="a" style="left:92px;top:86px;width:107px;height:18px;background:linear-gradient(#3a3a3a,#343434);border-left:1px solid #444;border-right:1px solid #1e1e1e;border-top:1px solid #444"></div>
<div class="t" style="left:97.70px;top:88.91px;font-size:10.5px;color:#c4c4c4;transform:scaleX(0.9800);transform-origin:0 0;">Animation Editor</div>
<svg class="a" style="left:186px;top:92.2px;" width="3.6" height="3.6" viewBox="0 0 3.6 3.6"><path d="M0 0L3.6 3.6M3.6 0L0 3.6" stroke="#b8b8b8" stroke-width="1.1"/></svg>
<div class="a" style="left:200px;top:86px;width:86px;height:18px;background:linear-gradient(#3a3a3a,#343434);border-left:1px solid #444;border-right:1px solid #1e1e1e;border-top:1px solid #444"></div>
<div class="t" style="left:204.00px;top:88.91px;font-size:10.5px;color:#c4c4c4;transform:scaleX(0.9245);transform-origin:0 0;">Render View</div>
<svg class="a" style="left:274.2px;top:92.2px;" width="3.6" height="3.6" viewBox="0 0 3.6 3.6"><path d="M0 0L3.6 3.6M3.6 0L0 3.6" stroke="#b8b8b8" stroke-width="1.1"/></svg>
<div class="a" style="left:287px;top:86px;width:100px;height:18px;background:linear-gradient(#3a3a3a,#343434);border-left:1px solid #444;border-right:1px solid #1e1e1e;border-top:1px solid #444"></div>
<div class="t" style="left:291.60px;top:88.91px;font-size:10.5px;color:#c4c4c4;transform:scaleX(0.9488);transform-origin:0 0;">Composite View</div>
<svg class="a" style="left:376.2px;top:92.2px;" width="3.6" height="3.6" viewBox="0 0 3.6 3.6"><path d="M0 0L3.6 3.6M3.6 0L0 3.6" stroke="#b8b8b8" stroke-width="1.1"/></svg>
<div class="a" style="left:388px;top:86px;width:98px;height:18px;background:linear-gradient(#3a3a3a,#343434);border-left:1px solid #444;border-right:1px solid #1e1e1e;border-top:1px solid #444"></div>
<div class="t" style="left:394.00px;top:88.91px;font-size:10.5px;color:#c4c4c4;transform:scaleX(0.9136);transform-origin:0 0;">Motion FX View</div>
<svg class="a" style="left:474px;top:92.2px;" width="3.6" height="3.6" viewBox="0 0 3.6 3.6"><path d="M0 0L3.6 3.6M3.6 0L0 3.6" stroke="#b8b8b8" stroke-width="1.1"/></svg>
<div class="a" style="left:488px;top:86px;width:128px;height:18px;background:linear-gradient(#3a3a3a,#343434);border-left:1px solid #444;border-right:1px solid #1e1e1e;border-top:1px solid #444"></div>
<div class="t" style="left:492.00px;top:88.91px;font-size:10.5px;color:#c4c4c4;transform:scaleX(0.9396);transform-origin:0 0;">Geometry Spreadsheet</div>
<svg class="a" style="left:603.2px;top:92.2px;" width="3.6" height="3.6" viewBox="0 0 3.6 3.6"><path d="M0 0L3.6 3.6M3.6 0L0 3.6" stroke="#b8b8b8" stroke-width="1.1"/></svg>
<svg class="a" style="left:623.2px;top:88.3px;" width="9.4" height="9.4" viewBox="0 0 9.4 9.4"><path d="M4.7 0V9.4M0 4.7H9.4" stroke="#eee" stroke-width="2"/></svg>
<div class="a" style="left:648px;top:90px;width:10px;height:8px;background:#e8e8e8;"></div>
<svg class="a" style="left:667px;top:92px;" width="8" height="5" viewBox="0 0 8 5"><path d="M0 0H8L4 5Z" fill="#ddd"/></svg>
<div class="a" style="left:688.5px;top:85px;width:1228.5px;height:19px;background:#303030;"></div>
<div class="a" style="left:688.5px;top:85px;width:129.5px;height:20px;background:linear-gradient(#484848,#3d3d3d);border-left:1px solid #555;border-top:1px solid #565656;border-right:1px solid #222"></div>
<div class="t" style="left:694.00px;top:88.91px;font-size:10.5px;color:#bcbcbc;transform:scaleX(0.9818);transform-origin:0 0;font-style:italic;">/obj/kitbashveingrowth</div>
<svg class="a" style="left:808px;top:92.2px;" width="3.6" height="3.6" viewBox="0 0 3.6 3.6"><path d="M0 0L3.6 3.6M3.6 0L0 3.6" stroke="#b8b8b8" stroke-width="1.1"/></svg>
<div class="a" style="left:820px;top:86px;width:74px;height:18px;background:linear-gradient(#3a3a3a,#343434);border-left:1px solid #444;border-right:1px solid #1e1e1e;border-top:1px solid #444"></div>
<div class="t" style="left:826.00px;top:88.91px;font-size:10.5px;color:#c4c4c4;transform:scaleX(0.9146);transform-origin:0 0;">Tree View</div>
<svg class="a" style="left:885.2px;top:92.2px;" width="3.6" height="3.6" viewBox="0 0 3.6 3.6"><path d="M0 0L3.6 3.6M3.6 0L0 3.6" stroke="#b8b8b8" stroke-width="1.1"/></svg>
<div class="a" style="left:896px;top:86px;width:99px;height:18px;background:linear-gradient(#3a3a3a,#343434);border-left:1px solid #444;border-right:1px solid #1e1e1e;border-top:1px solid #444"></div>
<div class="t" style="left:903.00px;top:88.91px;font-size:10.5px;color:#c4c4c4;transform:scaleX(0.9595);transform-origin:0 0;">Material Palette</div>
<svg class="a" style="left:986px;top:92.2px;" width="3.6" height="3.6" viewBox="0 0 3.6 3.6"><path d="M0 0L3.6 3.6M3.6 0L0 3.6" stroke="#b8b8b8" stroke-width="1.1"/></svg>
<div class="a" style="left:997px;top:86px;width:95px;height:18px;background:linear-gradient(#3a3a3a,#343434);border-left:1px solid #444;border-right:1px solid #1e1e1e;border-top:1px solid #444"></div>
<div class="t" style="left:1003.80px;top:88.91px;font-size:10.5px;color:#c4c4c4;transform:scaleX(0.9248);transform-origin:0 0;">Asset Browser</div>
<svg class="a" style="left:1080.2px;top:92.2px;" width="3.6" height="3.6" viewBox="0 0 3.6 3.6"><path d="M0 0L3.6 3.6M3.6 0L0 3.6" stroke="#b8b8b8" stroke-width="1.1"/></svg>
<svg class="a" style="left:1099.8px;top:88.3px;" width="9.4" height="9.4" viewBox="0 0 9.4 9.4"><path d="M4.7 0V9.4M0 4.7H9.4" stroke="#eee" stroke-width="2"/></svg>
<div class="a" style="left:1886px;top:90px;width:10px;height:8px;background:#e8e8e8;"></div>
<svg class="a" style="left:1905px;top:92px;" width="8" height="5" viewBox="0 0 8 5"><path d="M0 0H8L4 5Z" fill="#ddd"/></svg>
<div class="a" style="left:680px;top:84px;width:8.5px;height:926px;background:#484848;border-left:1.5px solid #1a1a1a;border-right:1.5px solid #1a1a1a"></div>
<svg class="a" style="left:682px;top:540px;" width="5" height="20" viewBox="0 0 5 20"><rect x="0" y="0" width="1.4" height="1.4" fill="#2c2c2c"/><rect x="0" y="3" width="1.4" height="1.4" fill="#2c2c2c"/><rect x="0" y="6" width="1.4" height="1.4" fill="#2c2c2c"/><rect x="0" y="9" width="1.4" height="1.4" fill="#2c2c2c"/><rect x="0" y="12" width="1.4" height="1.4" fill="#2c2c2c"/><rect x="0" y="15" width="1.4" height="1.4" fill="#2c2c2c"/><rect x="0" y="18" width="1.4" height="1.4" fill="#2c2c2c"/><rect x="2.4" y="0" width="1.4" height="1.4" fill="#2c2c2c"/><rect x="2.4" y="3" width="1.4" height="1.4" fill="#2c2c2c"/><rect x="2.4" y="6" width="1.4" height="1.4" fill="#2c2c2c"/><rect x="2.4" y="9" width="1.4" height="1.4" fill="#2c2c2c"/><rect x="2.4" y="12" width="1.4" height="1.4" fill="#2c2c2c"/><rect x="2.4" y="15" width="1.4" height="1.4" fill="#2c2c2c"/><rect x="2.4" y="18" width="1.4" height="1.4" fill="#2c2c2c"/></svg>
<div class="a" style="left:9.5px;top:85px;width:2.5px;height:922px;background:#3a3a3a;"></div>
<div class="a" style="left:0px;top:85px;width:9.5px;height:922px;background:#484848;border-right:1.5px solid #1a1a1a;border-left:1px solid #222"></div>
<svg class="a" style="left:2.5px;top:534px;" width="5" height="22" viewBox="0 0 5 22"><rect x="0" y="0" width="1.4" height="1.4" fill="#2c2c2c"/><rect x="0" y="3" width="1.4" height="1.4" fill="#2c2c2c"/><rect x="0" y="6" width="1.4" height="1.4" fill="#2c2c2c"/><rect x="0" y="9" width="1.4" height="1.4" fill="#2c2c2c"/><rect x="0" y="12" width="1.4" height="1.4" fill="#2c2c2c"/><rect x="0" y="15" width="1.4" height="1.4" fill="#2c2c2c"/><rect x="0" y="18" width="1.4" height="1.4" fill="#2c2c2c"/><rect x="0" y="21" width="1.4" height="1.4" fill="#2c2c2c"/><rect x="2.4" y="0" width="1.4" height="1.4" fill="#2c2c2c"/><rect x="2.4" y="3" width="1.4" height="1.4" fill="#2c2c2c"/><rect x="2.4" y="6" width="1.4" height="1.4" fill="#2c2c2c"/><rect x="2.4" y="9" width="1.4" height="1.4" fill="#2c2c2c"/><rect x="2.4" y="12" width="1.4" height="1.4" fill="#2c2c2c"/><rect x="2.4" y="15" width="1.4" height="1.4" fill="#2c2c2c"/><rect x="2.4" y="18" width="1.4" height="1.4" fill="#2c2c2c"/><rect x="2.4" y="21" width="1.4" height="1.4" fill="#2c2c2c"/></svg>
<svg class="a" style="left:2.5px;top:510px;" width="4" height="6" viewBox="0 0 4 6"><path d="M0 0L4 3L0 6Z" fill="#777"/></svg>
<svg class="a" style="left:2.5px;top:572px;" width="4" height="6" viewBox="0 0 4 6"><path d="M0 0L4 3L0 6Z" fill="#777"/></svg>
<div class="a" style="left:1917px;top:84px;width:3px;height:926px;background:#2a2a2a;border-left:1px solid #1c1c1c"></div>
<div class="a" style="left:11px;top:104px;width:669px;height:32px;background:#3a3a3a;"></div>
<div class="a" style="left:63.5px;top:107.5px;width:480px;height:24.5px;background:linear-gradient(#383838,#3e3e3e);border:1.5px solid #0c0c0c;border-radius:2px"></div>
<svg class="a" style="left:17px;top:112px;" width="18" height="16" viewBox="0 0 18 16"><path d="M0.5 7L7 1V4.5H13V9.5H7V13Z" fill="#d8d8d8" stroke="#555" stroke-width=".6"/><path d="M10 12H13L11.5 15Z" fill="#999"/></svg>
<svg class="a" style="left:41px;top:113px;" width="14" height="13" viewBox="0 0 14 13"><path d="M13.5 6.5L7.5 1V4H1.5V9H7.5V12Z" fill="#565656"/></svg>
<svg class="a" style="left:69px;top:112px;" width="16" height="15" viewBox="0 0 16 15"><path d="M1 4H15V14H1Z" fill="#555"/><path d="M1 4L3 1.5L5 4L7 1.5L9 4L11 1.5L13 4L15 1.5" stroke="#999" stroke-width="1.2" fill="none"/><rect x="3" y="8" width="5" height="4" fill="#888"/><rect x="9" y="9" width="4" height="3" fill="#777"/></svg>
<div class="t" style="left:91.00px;top:113.04px;font-size:12px;color:#d4d4d4;transform:scaleX(0.9492);transform-origin:0 0;">obj</div>
<svg class="a" style="left:115px;top:107px;" width="8" height="25" viewBox="0 0 8 25"><path d="M1 0L6 12.5L1 25" stroke="#161616" stroke-width="1.3" fill="none"/><path d="M2.2 0L7.2 12.5L2.2 25" stroke="#484848" stroke-width="0.8" fill="none"/></svg>
<svg class="a" style="left:126px;top:112px;" width="18" height="16" viewBox="0 0 18 16"><path d="M1 2L7 1L9 10L3 12Z" fill="#7aa7d8"/><path d="M2 3L6 2.4L7.5 9L3.6 10Z" fill="#dfe9f5"/><circle cx="13" cy="8" r="3.6" fill="#e43a2e"/><path d="M4 15L9.5 6L14 15Z" fill="#f2c21c"/></svg>
<div class="t" style="left:148.00px;top:113.04px;font-size:12px;color:#d4d4d4;transform:scaleX(0.9578);transform-origin:0 0;">kitbashveingrowth</div>
<div class="a" style="left:523px;top:109px;width:19px;height:22px;background:linear-gradient(#333,#2c2c2c);"></div>
<svg class="a" style="left:529px;top:117px;" width="8" height="5" viewBox="0 0 8 5"><path d="M0 0H8L4 5Z" fill="#6c6c6c"/></svg>
<div class="a" style="left:688.5px;top:104px;width:1228.5px;height:32px;background:#3a3a3a;"></div>
<div class="a" style="left:742.5px;top:107.5px;width:1122px;height:24.5px;background:linear-gradient(#383838,#3e3e3e);border:1.5px solid #0c0c0c;border-radius:2px"></div>
<svg class="a" style="left:694.5px;top:112px;" width="18" height="16" viewBox="0 0 18 16"><path d="M0.5 7L7 1V4.5H13V9.5H7V13Z" fill="#d8d8d8" stroke="#555" stroke-width=".6"/><path d="M10 12H13L11.5 15Z" fill="#999"/></svg>
<svg class="a" style="left:718.5px;top:113px;" width="14" height="13" viewBox="0 0 14 13"><path d="M13.5 6.5L7.5 1V4H1.5V9H7.5V12Z" fill="#565656"/></svg>
<svg class="a" style="left:748px;top:112px;" width="16" height="15" viewBox="0 0 16 15"><path d="M1 4H15V14H1Z" fill="#555"/><path d="M1 4L3 1.5L5 4L7 1.5L9 4L11 1.5L13 4L15 1.5" stroke="#999" stroke-width="1.2" fill="none"/><rect x="3" y="8" width="5" height="4" fill="#888"/><rect x="9" y="9" width="4" height="3" fill="#777"/></svg>
<div class="t" style="left:770.00px;top:113.04px;font-size:12px;color:#d4d4d4;transform:scaleX(0.9492);transform-origin:0 0;">obj</div>
<svg class="a" style="left:794px;top:107px;" width="8" height="25" viewBox="0 0 8 25"><path d="M1 0L6 12.5L1 25" stroke="#161616" stroke-width="1.3" fill="none"/><path d="M2.2 0L7.2 12.5L2.2 25" stroke="#484848" stroke-width="0.8" fill="none"/></svg>
<svg class="a" style="left:805px;top:112px;" width="18" height="16" viewBox="0 0 18 16"><path d="M1 2L7 1L9 10L3 12Z" fill="#7aa7d8"/><path d="M2 3L6 2.4L7.5 9L3.6 10Z" fill="#dfe9f5"/><circle cx="13" cy="8" r="3.6" fill="#e43a2e"/><path d="M4 15L9.5 6L14 15Z" fill="#f2c21c"/></svg>
<div class="t" style="left:827.00px;top:113.04px;font-size:12px;color:#d4d4d4;transform:scaleX(0.9578);transform-origin:0 0;">kitbashveingrowth</div>
<div class="a" style="left:1844px;top:109px;width:19px;height:22px;background:linear-gradient(#333,#2c2c2c);"></div>
<svg class="a" style="left:1850px;top:117px;" width="8" height="5" viewBox="0 0 8 5"><path d="M0 0H8L4 5Z" fill="#6c6c6c"/></svg>
<svg class="a" style="left:553px;top:113px;" width="15" height="13" viewBox="0 0 15 13"><path d="M0 6.5H6" stroke="#ddd" stroke-width="1.5"/><path d="M4 3.5L7 6.5L4 9.5Z" fill="#ddd"/><rect x="8" y="1" width="2" height="11" fill="#ddd"/><rect x="11" y="3" width="3" height="7" fill="#bbb"/></svg>
<svg class="a" style="left:575px;top:111px;" width="17" height="17" viewBox="0 0 17 17"><circle cx="8.5" cy="8.5" r="7" fill="none" stroke="#5d86c4" stroke-width="1.6"/><circle cx="8.5" cy="8.5" r="3.6" fill="none" stroke="#5d86c4" stroke-width="1.4"/><circle cx="8.5" cy="8.5" r="1.2" fill="#5d86c4"/></svg>
<svg class="a" style="left:1874px;top:113px;" width="15" height="13" viewBox="0 0 15 13"><path d="M0 6.5H6" stroke="#ddd" stroke-width="1.5"/><path d="M4 3.5L7 6.5L4 9.5Z" fill="#ddd"/><rect x="8" y="1" width="2" height="11" fill="#ddd"/><rect x="11" y="3" width="3" height="7" fill="#bbb"/></svg>
<svg class="a" style="left:1897px;top:111px;" width="17" height="17" viewBox="0 0 17 17"><circle cx="8.5" cy="8.5" r="7" fill="none" stroke="#5d86c4" stroke-width="1.6"/><circle cx="8.5" cy="8.5" r="3.6" fill="none" stroke="#5d86c4" stroke-width="1.4"/><circle cx="8.5" cy="8.5" r="1.2" fill="#5d86c4"/></svg>
<svg class="a" style="left:611px;top:112px;" width="17" height="17" viewBox="0 0 17 17"><path d="M2 4L9 2L14 4L14 11L8 14L2 11Z" fill="#b9c3cc"/><path d="M2 4L8 6.5L14 4" stroke="#f4f4f4" fill="none"/><path d="M8 6.5V14" stroke="#8a949c"/><path d="M11 15H16L13.5 18Z" fill="#888"/></svg>
<svg class="a" style="left:634px;top:111px;" width="19" height="19" viewBox="0 0 19 19"><rect x="2" y="1" width="8" height="12" fill="#9aa4ae"/><circle cx="12" cy="10" r="4.5" fill="#6d9ad8"/><circle cx="10.5" cy="8.5" r="1.5" fill="#cfe0f5"/><path d="M13 16H18L15.5 19Z" fill="#888"/></svg>
<div class="a" style="left:660px;top:112px;width:14px;height:14px;background:#ececec;border-radius:1px;box-shadow:1px 1px 0 #999"></div>
<svg class="a" style="left:669px;top:125px;" width="6" height="4" viewBox="0 0 6 4"><path d="M0 0H6L3 4Z" fill="#888"/></svg>
<div class="a" style="left:11px;top:137px;width:669px;height:32px;background:#2c2c2c;border-top:1px solid #1a1a1a;border-bottom:1px solid #141414"></div>
<div class="a" style="left:11px;top:138px;width:8px;height:30px;background:#3a3a3a;border-right:1px solid #1a1a1a"></div>
<svg class="a" style="left:11.5px;top:140px;" width="6" height="6" viewBox="0 0 6 6"><path d="M3 0L6 5H0Z" fill="#0a0a0a"/></svg>
<svg class="a" style="left:27px;top:145px;" width="12" height="17" viewBox="0 0 12 17"><path d="M1 0.5L1 12.5L4 9.8L6.3 15L8.3 14L6 9L10 9Z" fill="#d8d8d8" stroke="#6a6a6a" stroke-width=".7"/></svg>
<svg class="a" style="left:35.5px;top:160.5px;" width="8" height="5" viewBox="0 0 8 5"><path d="M0 0H8L4 4.5Z" fill="#8a8a8a"/></svg>
<div class="t" style="left:45.40px;top:148.04px;font-size:12px;color:#f0f0f0;transform:scaleX(0.9051);transform-origin:0 0;font-weight:bold;">Select</div>
<svg class="a" style="left:88px;top:149px;" width="8" height="9" viewBox="0 0 8 9"><path d="M8 0V9L0 4.5Z" fill="#3c3c3c"/></svg>
<svg class="a" style="left:101px;top:143px;" width="20" height="20" viewBox="0 0 20 20"><path d="M12 2L14 7L19 5L16 10L19 15L14 13.5L12 18L10 13.5L6 15L8 10L6 5L10 7Z" fill="#8e8e8e"/><rect x="3" y="3" width="4" height="4" rx="1" fill="#f3d24a"/><rect x="2.5" y="9" width="4" height="4" rx="1" fill="#f3d24a"/><rect x="6.5" y="13.5" width="4" height="4" rx="1" fill="#f3d24a"/><rect x="7" y="7" width="3" height="6" fill="#f8e89a"/></svg>
<svg class="a" style="left:125px;top:143px;" width="20" height="20" viewBox="0 0 20 20"><path d="M3 5L11 2L18 5L18 14L10 18L3 14Z" fill="#9a9a9a"/><path d="M3 5L10 8L10 18L3 14Z" fill="#d8c24a"/><path d="M3 5L11 2L18 5L10 8Z" fill="#c8c8c8"/><path d="M5 7.5L8.5 9V15.5L5 13.5Z" fill="#f0e08a"/></svg>
<div class="a" style="left:148px;top:142px;width:21px;height:23px;background:#c8922a;border:1px solid #93691a;box-shadow:inset 0 0 0 1px #d4a23a"></div>
<svg class="a" style="left:149px;top:143px;" width="19" height="21" viewBox="0 0 19 21"><path d="M9.5 2L15 7.5L9.5 13L4 7.5Z" fill="#8e8e92"/><path d="M9.5 4.5L12.5 7.5L9.5 10.5L6.5 7.5Z" fill="#a8a8b0"/><path d="M11.5 11.5L15 15L11.5 18.5L8 15Z" fill="#f3cf4a" stroke="#f8eaa8" stroke-width=".8"/></svg>
<div class="a" style="left:170px;top:140px;width:1px;height:26px;background:#484848;"></div>
<svg class="a" style="left:176px;top:146px;" width="9" height="9" viewBox="0 0 9 9"><circle cx="4.5" cy="4.5" r="3.4" fill="#e6b0e0" stroke="#b070b0" stroke-width="1.2"/><circle cx="4.5" cy="4.5" r="1.2" fill="#7a3a7a"/></svg>
<svg class="a" style="left:196.6px;top:143.5px;" width="20" height="20" viewBox="0 0 20 20"><circle cx="10" cy="10" r="6.6" fill="none" stroke="#2a2a2a" stroke-width="2.6"/><circle cx="16.60" cy="10.00" r="1.3" fill="#e8e8e8"/><circle cx="14.67" cy="14.67" r="1.3" fill="#e8e8e8"/><circle cx="10.00" cy="16.60" r="1.3" fill="#e8e8e8"/><circle cx="5.33" cy="14.67" r="1.3" fill="#e8e8e8"/><circle cx="3.40" cy="10.00" r="1.3" fill="#f3d24a"/><circle cx="5.33" cy="5.33" r="1.3" fill="#e8e8e8"/><circle cx="10.00" cy="3.40" r="1.3" fill="#e8e8e8"/><circle cx="14.67" cy="5.33" r="1.3" fill="#e8e8e8"/></svg>
<div class="a" style="left:229px;top:142px;width:21px;height:23px;background:#c8922a;border:1px solid #93691a;box-shadow:inset 0 0 0 1px #d4a23a"></div>
<svg class="a" style="left:232px;top:145.5px;" width="15" height="16" viewBox="0 0 15 16"><rect x="1" y="1" width="13" height="14" fill="#f7f3dc" stroke="#222" stroke-width="1.3" stroke-dasharray="1.6 1.4"/></svg>
<div class="a" style="left:251.5px;top:140px;width:1px;height:26px;background:#484848;"></div>
<svg class="a" style="left:255px;top:144px;" width="18" height="18" viewBox="0 0 18 18"><ellipse cx="10" cy="7" rx="7.4" ry="4.6" fill="none" stroke="#cfcfcf" stroke-width="1.6" transform="rotate(-18 10 7)"/><path d="M4 9Q2 13 5 16" fill="none" stroke="#bdbdbd" stroke-width="1.4"/></svg>
<svg class="a" style="left:279px;top:143px;" width="18" height="20" viewBox="0 0 18 20"><path d="M2 6Q8 0 13 3L9 8Q5 6 3 9Z" fill="#ece4c8"/><path d="M12 4L16 15" stroke="#cfcfcf" stroke-width="2.6"/><path d="M13.2 7L15.6 14" stroke="#555" stroke-width="1"/></svg>
<svg class="a" style="left:305px;top:145px;" width="14" height="16" viewBox="0 0 14 16"><path d="M2 1L7 8" stroke="#8a2828" stroke-width="1.6"/><path d="M7 8L12 15" stroke="#e8e8e8" stroke-width="1.6"/></svg>
<svg class="a" style="left:334px;top:144px;" width="20" height="18" viewBox="0 0 20 18"><path d="M1 6Q7 0 13 6Q7 11 1 6Z" fill="#e8e8e8"/><circle cx="7" cy="5.6" r="2.7" fill="#111"/><path d="M10 7L10 16L12.3 14L14 17.5L15.6 16.8L14 13.4L17 13.2Z" fill="#f2f2f2" stroke="#555" stroke-width=".5"/></svg>
<svg class="a" style="left:360px;top:144px;" width="18" height="18" viewBox="0 0 18 18"><rect x="2" y="4" width="13" height="12" fill="#d03a34"/><path d="M5 9L9 5L14 9L10 13Z" fill="#f3cf4a" stroke="#f8eaa8" stroke-width=".7"/><path d="M3 2L7 5" stroke="#e8e8e8" stroke-width="1.2"/></svg>
<svg class="a" style="left:384px;top:145px;" width="17" height="17" viewBox="0 0 17 17"><circle cx="8.5" cy="8.5" r="7.4" fill="#5a4a1a" stroke="#e0c46a" stroke-width="1.2"/><path d="M8.5 3L14 8.5L8.5 14L3 8.5Z" fill="#e9b93a"/><path d="M8.5 6L11 8.5L8.5 11L6 8.5Z" fill="#fff3c8"/></svg>
<svg class="a" style="left:407px;top:144px;" width="19" height="19" viewBox="0 0 19 19"><path d="M5 1V9M1 5H9M2.2 2.2L7.8 7.8M7.8 2.2L2.2 7.8" stroke="#e8e8e8" stroke-width="1.1"/><path d="M9 7L9 17L11.5 14.8L13.3 18.5L15 17.7L13.2 14.2L16.5 14Z" fill="#f2f2f2" stroke="#555" stroke-width=".5"/></svg>
<div class="a" style="left:440px;top:142px;width:77px;height:20.5px;background:linear-gradient(#4c4c4c,#3e3e3e);border:1px solid #5a5a5a;border-bottom-color:#2a2a2a;border-right:none"></div>
<div class="a" style="left:517px;top:142px;width:22px;height:20.5px;background:linear-gradient(#3c3c3c,#333);border-top:1px solid #4a4a4a"></div>
<svg class="a" style="left:524px;top:150px;" width="8" height="5" viewBox="0 0 8 5"><path d="M0 0H8L4 5Z" fill="#7a7a7a"/></svg>
<div class="t" style="left:453.70px;top:147.34px;font-size:12px;color:#d4d4d4;transform:scaleX(0.9295);transform-origin:0 0;">Select</div>
<div class="a" style="left:550.5px;top:142px;width:61px;height:20.5px;background:linear-gradient(#4c4c4c,#3e3e3e);border:1px solid #5a5a5a;border-bottom-color:#2a2a2a"></div>
<div class="t" style="left:564.50px;top:147.34px;font-size:12px;color:#d4d4d4;transform:scaleX(0.9623);transform-origin:0 0;">Visibility</div>
<svg class="a" style="left:616px;top:148.5px;" width="9" height="9" viewBox="0 0 9 9"><path d="M0 0L9 4.5L0 9Z" fill="#8e8e8e"/></svg>
<svg class="a" style="left:634px;top:145px;" width="16" height="18" viewBox="0 0 16 18"><circle cx="3.5" cy="2.8" r="2" fill="#6fa0e8"/><path d="M1 6H6V9H1Z" fill="#6fa0e8"/><circle cx="3.5" cy="11.5" r="2" fill="#6fa0e8"/><path d="M1 14.5H6V17H1Z" fill="#6fa0e8"/><path d="M8 3H11M8 12H14" stroke="#e8e8e8" stroke-width="1.4"/><path d="M10 16H16L13 19Z" fill="#8a8a8a"/></svg>
<svg class="a" style="left:658.5px;top:144.5px;" width="15" height="15" viewBox="0 0 15 15"><circle cx="7.5" cy="7.5" r="6.4" fill="none" stroke="#e0e0e0" stroke-width="1.5"/></svg>
<div class="t" style="left:662.64px;top:146.79px;font-size:11px;color:#f0f0f0;transform:scaleX(1.0000);transform-origin:0 0;font-weight:bold;">?</div>
<div class="a" style="left:11px;top:169px;width:32px;height:837px;background:#3a3a3a;"></div>
<div class="a" style="left:11px;top:169px;width:32px;height:9px;background:#333;border-bottom:1px solid #1a1a1a"></div>
<svg class="a" style="left:13px;top:171px;" width="6" height="6" viewBox="0 0 6 6"><path d="M0 3L5 0V6Z" fill="#0a0a0a"/></svg>
<div class="a" style="left:14px;top:184px;width:24.5px;height:73.5px;background:#4a4a4a;border:1px solid #1e1e1e"></div>
<svg class="a" style="left:15px;top:185px;" width="23" height="23" viewBox="0 0 23 23"><path d="M10 3L17 15H3Z" fill="#f3de4a"/><path d="M10 6.5L14 14H6Z" fill="#fbf3a0"/><circle cx="16" cy="7" r="4.6" fill="#8a8a8a" opacity=".8"/><path d="M10 3L17 15H3Z" fill="#f3de4a" opacity=".85"/></svg>
<svg class="a" style="left:33.5px;top:201px;" width="5" height="7" viewBox="0 0 5 7"><path d="M0 0L5 3.5L0 7Z" fill="#9a9a9a"/></svg>
<div class="a" style="left:14px;top:208px;width:24.5px;height:24.5px;background:#c8922a;border:1px solid #93691a"></div>
<svg class="a" style="left:15px;top:208.5px;" width="23" height="23" viewBox="0 0 23 23"><path d="M10 2.5L16 8.5L10 14.5L4 8.5Z" fill="#8e8e92"/><path d="M6.5 5L10 8.5L6.5 12L3 8.5Z" fill="#9a9aa2" opacity=".8"/><path d="M12 12L15.5 15.5L12 19L8.5 15.5Z" fill="#f3cf4a" stroke="#f8eaa8" stroke-width=".8"/></svg>
<svg class="a" style="left:33.5px;top:224px;" width="5" height="7" viewBox="0 0 5 7"><path d="M0 0L5 3.5L0 7Z" fill="#1a1a1a"/></svg>
<svg class="a" style="left:15px;top:233px;" width="23" height="23" viewBox="0 0 23 23"><path d="M8 4L18 7L15 17L5 14Z" fill="#e8d21c"/><path d="M9.5 6.5L15.5 8.3L13.6 14.5L7.6 12.7Z" fill="#f6ec6a"/></svg>
<svg class="a" style="left:33.5px;top:249px;" width="5" height="7" viewBox="0 0 5 7"><path d="M0 0L5 3.5L0 7Z" fill="#9a9a9a"/></svg>
<div class="a" style="left:12.5px;top:269.5px;width:27px;height:27px;background:#c8922a;border:1px solid #93691a"></div>
<svg class="a" style="left:18px;top:273px;" width="16" height="21" viewBox="0 0 16 21"><path d="M2 1L2 15.5L5.6 12.3L8.2 18.6L10.8 17.4L8.2 11.4L13 11.2Z" fill="#ececec" stroke="#6a6a6a" stroke-width=".8"/></svg>
<svg class="a" style="left:35px;top:287.5px;" width="5" height="7" viewBox="0 0 5 7"><path d="M0 0L5 3.5L0 7Z" fill="#2a2a2a"/></svg>
<svg class="a" style="left:15.5px;top:300px;" width="21" height="21" viewBox="0 0 21 21"><ellipse cx="5" cy="13" rx="3.4" ry="2.4" fill="#c8241c"/><ellipse cx="16" cy="13" rx="3.4" ry="2.4" fill="#c8241c"/><ellipse cx="10.5" cy="16.5" rx="3.4" ry="2.4" fill="#d83a2a"/><path d="M6 5L11 3L15 5.5L15 11L10.5 13L6 10.5Z" fill="#b8bcc4"/><path d="M6 5L10.5 7.5L15 5.5" stroke="#eee" fill="none" stroke-width=".8"/></svg>
<svg class="a" style="left:15.5px;top:329px;" width="21" height="21" viewBox="0 0 21 21"><ellipse cx="5" cy="13" rx="3.4" ry="2.4" fill="#c8241c"/><ellipse cx="16" cy="13" rx="3.4" ry="2.4" fill="#c8241c"/><ellipse cx="10.5" cy="16.5" rx="3.4" ry="2.4" fill="#d83a2a"/><circle cx="10.5" cy="7.5" r="5" fill="#b8bcc4"/><circle cx="9" cy="6" r="2" fill="#f0f2f6"/></svg>
<svg class="a" style="left:15.5px;top:358px;" width="21" height="21" viewBox="0 0 21 21"><ellipse cx="5" cy="16" rx="3.2" ry="2.2" fill="#c8241c"/><ellipse cx="16" cy="16" rx="3.2" ry="2.2" fill="#c8241c"/><circle cx="10.5" cy="4" r="2.4" fill="#c8241c"/><path d="M6 8L11 6L15 8.5L15 14L10.5 16L6 13.5Z" fill="#8a8e96"/></svg>
<svg class="a" style="left:17px;top:384px;" width="18" height="22" viewBox="0 0 18 22"><ellipse cx="5" cy="4" rx="1.3" ry="2.4" fill="#565656" transform="rotate(20 5 4)"/><ellipse cx="11" cy="3" rx="1.3" ry="2.4" fill="#565656" transform="rotate(-10 11 3)"/><ellipse cx="3" cy="11" rx="1.3" ry="2.4" fill="#565656" transform="rotate(-20 3 11)"/><ellipse cx="9" cy="10" rx="1.3" ry="2.4" fill="#565656" transform="rotate(15 9 10)"/><ellipse cx="14" cy="9" rx="1.3" ry="2.4" fill="#565656" transform="rotate(-15 14 9)"/><ellipse cx="6" cy="17" rx="1.3" ry="2.4" fill="#565656" transform="rotate(10 6 17)"/><ellipse cx="12" cy="17" rx="1.3" ry="2.4" fill="#565656" transform="rotate(-20 12 17)"/></svg>
<svg class="a" style="left:15px;top:412px;" width="22" height="22" viewBox="0 0 22 22"><path d="M9 2L13 9H5Z" fill="#4ab83a"/><path d="M2 17L7 10L10 14Z" fill="#5a8ae0"/><path d="M19 15L12 10L11 15Z" fill="#e04a5a"/><circle cx="10" cy="12" r="3.4" fill="#f0c83a"/><circle cx="13" cy="11" r="1.6" fill="#f08a2a"/></svg>
<svg class="a" style="left:35px;top:428px;" width="5" height="7" viewBox="0 0 5 7"><path d="M0 0L5 3.5L0 7Z" fill="#8a8a8a"/></svg>
<svg class="a" style="left:15px;top:450px;" width="24" height="24" viewBox="0 0 24 24"><path d="M3 15V8A7 7 0 0 1 17 8V15H12.5V8.5A2.5 2.5 0 0 0 7.5 8.5V15Z" fill="#d8444c"/><rect x="3" y="12.5" width="4.5" height="3.5" fill="#f2f2f2"/><rect x="12.5" y="12.5" width="4.5" height="3.5" fill="#f2f2f2"/><path d="M10 10H21V21H10Z M15.5 10V21M10 15.5H21" fill="none" stroke="#e8e8e8" stroke-width="1.2"/></svg>
<svg class="a" style="left:35px;top:468px;" width="5" height="7" viewBox="0 0 5 7"><path d="M0 0L5 3.5L0 7Z" fill="#8a8a8a"/></svg>
<svg class="a" style="left:15px;top:478px;" width="24" height="24" viewBox="0 0 24 24"><path d="M3 15V8A7 7 0 0 1 17 8V15H12.5V8.5A2.5 2.5 0 0 0 7.5 8.5V15Z" fill="#d8444c"/><rect x="3" y="12.5" width="4.5" height="3.5" fill="#f2f2f2"/><rect x="12.5" y="12.5" width="4.5" height="3.5" fill="#f2f2f2"/><path d="M2 20Q8 14 13 17T22 12" fill="none" stroke="#e8e8e8" stroke-width="1.4"/></svg>
<svg class="a" style="left:35px;top:495px;" width="5" height="7" viewBox="0 0 5 7"><path d="M0 0L5 3.5L0 7Z" fill="#8a8a8a"/></svg>
<svg class="a" style="left:15px;top:505px;" width="24" height="22" viewBox="0 0 24 22"><path d="M3 14V8A6 6 0 0 1 15 8V14H11V8.5A2 2 0 0 0 7 8.5V14Z" fill="#d8444c"/><rect x="3" y="11.5" width="4.5" height="3.5" fill="#f2f2f2"/><rect x="11" y="11.5" width="4.5" height="3.5" fill="#f2f2f2"/><circle cx="18" cy="17" r="3.6" fill="#cfcfcf"/></svg>
<svg class="a" style="left:35px;top:522px;" width="5" height="7" viewBox="0 0 5 7"><path d="M0 0L5 3.5L0 7Z" fill="#8a8a8a"/></svg>
<svg class="a" style="left:13.5px;top:533px;" width="26" height="26" viewBox="0 0 26 26"><path d="M3 20V10A10 10 0 0 1 23 10V20H17V10.5A4 4 0 0 0 9 10.5V20Z" fill="#d8444c"/><rect x="3" y="16.5" width="6" height="4.5" fill="#f2f2f2"/><rect x="17" y="16.5" width="6" height="4.5" fill="#f2f2f2"/></svg>
<svg class="a" style="left:35px;top:552px;" width="5" height="7" viewBox="0 0 5 7"><path d="M0 0L5 3.5L0 7Z" fill="#8a8a8a"/></svg>
<svg class="a" style="left:15px;top:570px;" width="24" height="20" viewBox="0 0 24 20"><circle cx="6" cy="8" r="3.2" fill="#1c1c1c" stroke="#4a4a4a" stroke-width="1"/><circle cx="12" cy="5" r="3.2" fill="#1c1c1c" stroke="#4a4a4a" stroke-width="1"/><circle cx="18" cy="9" r="3.2" fill="#1c1c1c" stroke="#4a4a4a" stroke-width="1"/><circle cx="9" cy="14" r="3.2" fill="#1c1c1c" stroke="#4a4a4a" stroke-width="1"/><circle cx="15" cy="14" r="3.2" fill="#1c1c1c" stroke="#4a4a4a" stroke-width="1"/></svg>
<svg class="a" style="left:35px;top:588px;" width="5" height="7" viewBox="0 0 5 7"><path d="M0 0L5 3.5L0 7Z" fill="#8a8a8a"/></svg>
<svg class="a" style="left:15px;top:597px;" width="24" height="24" viewBox="0 0 24 24"><circle cx="9.5" cy="10" r="8" fill="none" stroke="#d4d4d4" stroke-width="1.6"/><path d="M9.5 2V10H17" stroke="#d4d4d4" stroke-width="1.1" fill="none"/><rect x="10.5" y="11" width="9" height="9" fill="#8a9a9a" stroke="#e05a5a" stroke-width="1.4"/></svg>
<svg class="a" style="left:14px;top:626px;" width="26" height="24" viewBox="0 0 26 24"><ellipse cx="12" cy="16" rx="10" ry="5" fill="#cfd4d4"/><ellipse cx="12" cy="13" rx="7.5" ry="3.6" fill="#1c1c1c"/><path d="M6 6H18M7 8.5H17M8 3.5H16" stroke="#7a7a7a" stroke-width="1"/></svg>
<svg class="a" style="left:35px;top:644px;" width="5" height="7" viewBox="0 0 5 7"><path d="M0 0L5 3.5L0 7Z" fill="#8a8a8a"/></svg>
<svg class="a" style="left:14px;top:954px;" width="22" height="20" viewBox="0 0 22 20"><path d="M3 8L14 3L19 10L8 15Z" fill="#e4e4e4"/><path d="M6 8.5L13 5.5M8 11L15 8" stroke="#c03a3a" stroke-width="1"/><path d="M8 15L9 19" stroke="#aaa" stroke-width="1.4"/></svg>
<svg class="a" style="left:32px;top:968px;" width="5" height="7" viewBox="0 0 5 7"><path d="M0 0L5 3.5L0 7Z" fill="#8a8a8a"/></svg>
<svg class="a" style="left:14px;top:980px;" width="22" height="20" viewBox="0 0 22 20"><ellipse cx="10" cy="8.5" rx="8.5" ry="6.4" fill="#9a9a9a"/><ellipse cx="10" cy="8.5" rx="3" ry="2.2" fill="#d8d8d8"/><circle cx="5.5" cy="7" r="1.5" fill="#555"/><circle cx="14.5" cy="7" r="1.5" fill="#555"/><circle cx="10" cy="12.5" r="1.5" fill="#555"/></svg>
<svg class="a" style="left:32px;top:994px;" width="5" height="7" viewBox="0 0 5 7"><path d="M0 0L5 3.5L0 7Z" fill="#8a8a8a"/></svg>
<div class="a" style="left:653px;top:169px;width:27px;height:837px;background:#3a3a3a;"></div>
<div class="a" style="left:654px;top:169px;width:26px;height:9px;background:#333;border-bottom:1px solid #1a1a1a"></div>
<svg class="a" style="left:672px;top:171px;" width="6" height="6" viewBox="0 0 6 6"><path d="M6 3L1 0V6Z" fill="#0a0a0a"/></svg>
<div class="a" style="left:654.5px;top:181px;width:22.5px;height:21.5px;background:#c8922a;border:1px solid #93691a"></div>
<svg class="a" style="left:657px;top:184px;" width="18" height="15" viewBox="0 0 18 15"><path d="M1 8L9 3L17 8L9 13Z" fill="none" stroke="#f0e8d0" stroke-width="1.2"/><path d="M4 8Q9 4 14 8Q9 11.5 4 8Z" fill="#f4f4f4" stroke="#333" stroke-width=".8"/><circle cx="9" cy="7.8" r="1.8" fill="#222"/></svg>
<svg class="a" style="left:674px;top:196px;" width="5" height="7" viewBox="0 0 5 7"><path d="M0 0L5 3.5L0 7Z" fill="#2a2a2a"/></svg>
<svg class="a" style="left:657px;top:208px;" width="18" height="18" viewBox="0 0 18 18"><path d="M2 3L13 1L16 12L5 15Z" fill="none" stroke="#5a9a5a" stroke-width="1.4"/><path d="M5 5.5L11.5 4.5L13 10.5L7 12Z" fill="none" stroke="#7aba7a" stroke-width="1.1"/><circle cx="9" cy="8" r="1.6" fill="#7aba7a"/></svg>
<svg class="a" style="left:674px;top:221px;" width="5" height="7" viewBox="0 0 5 7"><path d="M0 0L5 3.5L0 7Z" fill="#8a8a8a"/></svg>
<svg class="a" style="left:658px;top:233px;" width="16" height="18" viewBox="0 0 16 18"><path d="M4 8V5.5A4 4 0 0 1 12 5.5V8" fill="none" stroke="#cfcfcf" stroke-width="2"/><rect x="2" y="8" width="12" height="8.5" rx="1" fill="#e4e4e4"/><path d="M2 12H14" stroke="#bdbdbd"/></svg>
<svg class="a" style="left:657px;top:257px;" width="18" height="20" viewBox="0 0 18 20"><circle cx="9" cy="7" r="4.6" fill="#3a3a3a"/><rect x="7" y="10.8" width="4" height="4.4" fill="#9a9a9a"/><circle cx="9" cy="7" r="4.6" fill="none" stroke="#cfcfcf" stroke-width="1.2"/><path d="M6.5 4.5L11.5 9.5M11.5 4.5L6.5 9.5" stroke="#e8e8e8" stroke-width="1.4"/></svg>
<svg class="a" style="left:656px;top:282px;" width="20" height="20" viewBox="0 0 20 20"><circle cx="9" cy="9" r="7" fill="#bdbdbd"/><circle cx="11" cy="10.5" r="5.4" fill="#e8e8e8" stroke="#8a8a8a" stroke-width=".8"/></svg>
<svg class="a" style="left:674px;top:297px;" width="5" height="7" viewBox="0 0 5 7"><path d="M0 0L5 3.5L0 7Z" fill="#8a8a8a"/></svg>
<div class="a" style="left:654.5px;top:304.5px;width:22.5px;height:22px;background:#c8922a;border:1px solid #93691a"></div>
<svg class="a" style="left:657px;top:306px;" width="18" height="20" viewBox="0 0 18 20"><circle cx="9" cy="7.5" r="4.6" fill="#f4f0e0"/><rect x="7" y="11.3" width="4" height="4.4" fill="#9a9a9a"/><path d="M7 13H11V16H7Z" fill="#bdb8a8"/></svg>
<svg class="a" style="left:674px;top:320px;" width="5" height="7" viewBox="0 0 5 7"><path d="M0 0L5 3.5L0 7Z" fill="#2a2a2a"/></svg>
<svg class="a" style="left:657px;top:330px;" width="18" height="20" viewBox="0 0 18 20"><circle cx="9" cy="7" r="4.6" fill="#e8e8e8"/><rect x="7" y="10.8" width="4" height="4.4" fill="#9a9a9a"/><path d="M9 4V10M6 7H12" stroke="#222" stroke-width="1.6"/></svg>
<svg class="a" style="left:674px;top:345px;" width="5" height="7" viewBox="0 0 5 7"><path d="M0 0L5 3.5L0 7Z" fill="#8a8a8a"/></svg>
<svg class="a" style="left:656px;top:354px;" width="20" height="22" viewBox="0 0 20 22"><circle cx="10" cy="7" r="4.6" fill="#e8e8e8"/><rect x="8" y="10.8" width="4" height="4.4" fill="#9a9a9a"/><path d="M10 4V10M7 7H13" stroke="#222" stroke-width="1.6"/><ellipse cx="10" cy="17" rx="8" ry="2.6" fill="none" stroke="#cfcfcf" stroke-width="1.3"/></svg>
<svg class="a" style="left:674px;top:369px;" width="5" height="7" viewBox="0 0 5 7"><path d="M0 0L5 3.5L0 7Z" fill="#8a8a8a"/></svg>
<div class="a" style="left:654.5px;top:381px;width:22.5px;height:22px;background:#c8922a;border:1px solid #93691a"></div>
<svg class="a" style="left:657px;top:383px;" width="18" height="18" viewBox="0 0 18 18"><path d="M3 5L9 2L15 5L15 13L9 16L3 13Z" fill="#ececec"/><circle cx="9" cy="9" r="3" fill="#2a2a2a"/><path d="M3 5L6 7M15 5L12 7M9 16V12" stroke="#2a2a2a" stroke-width="1.6"/><circle cx="9" cy="9" r="1.1" fill="#b03a3a"/></svg>
<svg class="a" style="left:674px;top:397px;" width="5" height="7" viewBox="0 0 5 7"><path d="M0 0L5 3.5L0 7Z" fill="#2a2a2a"/></svg>
<svg class="a" style="left:656px;top:408px;" width="20" height="16" viewBox="0 0 20 16"><path d="M2 3L9 6L16 12" stroke="#cfcfcf" stroke-width="1.3" fill="none"/><ellipse cx="7" cy="8" rx="3.4" ry="2.2" fill="#e8e8e8" stroke="#222" stroke-width=".8"/><ellipse cx="13" cy="11" rx="3" ry="2" fill="#e8e8e8" stroke="#222" stroke-width=".8"/></svg>
<svg class="a" style="left:664px;top:424px;" width="8" height="5" viewBox="0 0 8 5"><path d="M0 0H8L4 4.5Z" fill="#7a7a7a"/></svg>
<svg class="a" style="left:661.5px;top:443px;" width="8" height="8" viewBox="0 0 8 8"><circle cx="4" cy="4" r="2.8" fill="#f0f0f0"/></svg>
<svg class="a" style="left:658px;top:464px;" width="16" height="16" viewBox="0 0 16 16"><circle cx="5" cy="11" r="2.6" fill="#e8e8e8"/><path d="M6 10L14 2" stroke="#cfcfcf" stroke-width="1.8"/></svg>
<svg class="a" style="left:658px;top:489px;" width="16" height="16" viewBox="0 0 16 16"><path d="M3 14L8 7" stroke="#bdbdbd" stroke-width="1.6"/><path d="M7 8L12 1L15 4L9 9.5Z" fill="#e8e8e8"/></svg>
<svg class="a" style="left:657px;top:516px;" width="8" height="8" viewBox="0 0 8 8"><circle cx="4" cy="4" r="2.8" fill="#e8e8e8"/></svg>
<div class="t" style="left:664.00px;top:513.38px;font-size:9px;color:#f0f0f0;transform:scaleX(0.9000);transform-origin:0 0;font-weight:bold;">12</div>
<svg class="a" style="left:657px;top:538px;" width="18" height="18" viewBox="0 0 18 18"><path d="M2 12L12 8L15 14L5 17Z" fill="#e4e4e4"/><path d="M11 8L14 2" stroke="#cfcfcf" stroke-width="1.8"/></svg>
<svg class="a" style="left:657px;top:564px;" width="18" height="16" viewBox="0 0 18 16"><path d="M2 10L12 6L15 11L5 15Z" fill="#e4e4e4"/><path d="M3 13L13 9" stroke="#777" stroke-width=".8"/></svg>
<div class="t" style="left:664.00px;top:563.38px;font-size:9px;color:#f0f0f0;transform:scaleX(0.9000);transform-origin:0 0;font-weight:bold;">12</div>
<svg class="a" style="left:658px;top:589px;" width="17" height="17" viewBox="0 0 17 17"><path d="M2 16V7Q2 2 7 2H15" fill="none" stroke="#e0e0e0" stroke-width="1.3"/><circle cx="2" cy="16" r="1.4" fill="#e8e8e8"/><circle cx="15" cy="2" r="1.4" fill="#e8e8e8"/><path d="M2 2L6 6" stroke="#9a9a9a" stroke-width=".8"/></svg>
<svg class="a" style="left:658px;top:614px;" width="16" height="16" viewBox="0 0 16 16"><rect x="3" y="3" width="10" height="10" fill="#6a6a6a"/><path d="M3 3H13V13H3Z" fill="none" stroke="#9a9a9a" stroke-dasharray="2 1.5"/><circle cx="3" cy="3" r="1.6" fill="#f0f0f0"/><circle cx="3" cy="13" r="1.6" fill="#f0f0f0"/><circle cx="13" cy="3" r="1.6" fill="#f0f0f0"/><circle cx="13" cy="13" r="1.6" fill="#f0f0f0"/></svg>
<svg class="a" style="left:657px;top:638px;" width="18" height="18" viewBox="0 0 18 18"><path d="M9 9L15 2M9 9L2 9M9 9L13 16" stroke="#e4e4e4" stroke-width="1.8" fill="none"/><circle cx="9" cy="9" r="2.2" fill="#f0f0f0"/></svg>
<div class="a" style="left:654.5px;top:662px;width:22.5px;height:23px;background:#c8922a;border:1px solid #93691a"></div>
<svg class="a" style="left:658.5px;top:666px;" width="15" height="15" viewBox="0 0 15 15"><rect x="1" y="1" width="13" height="13" fill="#f0ead8" stroke="#3a3a3a" stroke-width="1"/><rect x="4" y="5" width="7" height="5" fill="#9a9a9a" stroke="#222" stroke-width=".7"/><path d="M1 3.6H14" stroke="#3a3a3a"/></svg>
<div class="t" style="left:658.58px;top:693.53px;font-size:10px;color:#d8d8d8;transform:scaleX(0.9200);transform-origin:0 0;">abc</div>
<div class="a" style="left:654.5px;top:712px;width:22.5px;height:23px;background:#c8922a;border:1px solid #93691a"></div>
<svg class="a" style="left:658px;top:715.5px;" width="16" height="16" viewBox="0 0 16 16"><rect x="1" y="1" width="14" height="14" fill="#ececec" stroke="#2a2a2a" stroke-width="1"/><path d="M2.5 12L6 6L9 9.5L11 7.5L13.5 12Z" fill="#5a6a7a"/><path d="M2.5 5Q8 2 13.5 6" stroke="#2a2a2a" fill="none"/></svg>
<svg class="a" style="left:659px;top:750px;" width="14" height="18" viewBox="0 0 14 18"><path d="M7 17Q1 9 1 6A6 6 0 0 1 13 6Q13 9 7 17Z" fill="#e0e0e0"/><circle cx="7" cy="6" r="2.3" fill="#3a3a3a"/></svg>
<svg class="a" style="left:674px;top:763px;" width="5" height="7" viewBox="0 0 5 7"><path d="M0 0L5 3.5L0 7Z" fill="#8a8a8a"/></svg>
<svg class="a" style="left:658.5px;top:934.5px;" width="15" height="15" viewBox="0 0 15 15"><circle cx="7.5" cy="7.5" r="6.4" fill="none" stroke="#d8d8d8" stroke-width="1.4"/></svg>
<div class="t" style="left:664.47px;top:936.99px;font-size:11px;color:#e8e8e8;transform:scaleX(1.0000);transform-origin:0 0;font-weight:bold;font-style:italic;">i</div>
<div class="a" style="left:654.5px;top:957px;width:22.5px;height:23px;background:#c8922a;border:1px solid #93691a"></div>
<svg class="a" style="left:659px;top:961.5px;" width="14" height="14" viewBox="0 0 14 14"><rect x="0" y="0" width="6.2" height="6.2" fill="#fbf6e6"/><rect x="7.8" y="0" width="6.2" height="6.2" fill="#fbf6e6"/><rect x="0" y="7.8" width="6.2" height="6.2" fill="#fbf6e6"/><rect x="7.8" y="7.8" width="6.2" height="6.2" fill="#fbf6e6"/></svg>
<svg class="a" style="left:658px;top:986px;" width="16" height="14" viewBox="0 0 16 14"><rect x="0" y="0" width="16" height="14" fill="#f2f2f2"/><path d="M1.5 7Q8 1 14.5 7Q8 12 1.5 7Z" fill="#fff" stroke="#222" stroke-width="1"/><circle cx="8.5" cy="6.6" r="2.8" fill="#111"/></svg>
<svg class="a" style="left:674px;top:997px;" width="5" height="7" viewBox="0 0 5 7"><path d="M0 0L5 3.5L0 7Z" fill="#8a8a8a"/></svg>
<div class="a" style="left:43px;top:169px;width:610px;height:837px;overflow:hidden;background:linear-gradient(#68818f 0%,#6d8594 8%,#7990a0 16%,#879ba9 24%,#95a7b3 32%,#9fb0b9 40%,#a5b4bc 50%,#aab8be 62%,#b0bcc0 75%,#b6c0c2 88%,#bbc4c4 100%)">
<svg class="a" style="left:0;top:0" width="610" height="837" viewBox="0 0 610 837"><defs><linearGradient id="gfade" gradientUnits="userSpaceOnUse" x1="0" y1="116" x2="0" y2="836"><stop offset="0" stop-color="#fff" stop-opacity="0"/><stop offset="0.0625" stop-color="#fff" stop-opacity="0.12"/><stop offset="0.16" stop-color="#fff" stop-opacity="0.3"/><stop offset="0.3" stop-color="#fff" stop-opacity="0.5"/><stop offset="0.5" stop-color="#fff" stop-opacity="0.55"/><stop offset="0.72" stop-color="#fff" stop-opacity="0.45"/><stop offset="1" stop-color="#fff" stop-opacity="0.36"/></linearGradient><mask id="gmask" maskUnits="userSpaceOnUse" x="0" y="0" width="610" height="837"><rect x="0" y="0" width="610" height="837" fill="url(#gfade)"/></mask></defs><g mask="url(#gmask)"><line x1="877.0" y1="81.0" x2="-15776.8" y2="987.0" stroke="#6f7c85" stroke-width="1.1"/><line x1="877.0" y1="81.0" x2="-15512.8" y2="987.0" stroke="#6f7c85" stroke-width="1.1"/><line x1="877.0" y1="81.0" x2="-15248.8" y2="987.0" stroke="#6f7c85" stroke-width="1.1"/><line x1="877.0" y1="81.0" x2="-14984.8" y2="987.0" stroke="#6f7c85" stroke-width="2.1"/><line x1="877.0" y1="81.0" x2="-14720.8" y2="987.0" stroke="#6f7c85" stroke-width="1.1"/><line x1="877.0" y1="81.0" x2="-14456.8" y2="987.0" stroke="#6f7c85" stroke-width="1.1"/><line x1="877.0" y1="81.0" x2="-14192.8" y2="987.0" stroke="#6f7c85" stroke-width="1.1"/><line x1="877.0" y1="81.0" x2="-13928.8" y2="987.0" stroke="#6f7c85" stroke-width="1.1"/><line x1="877.0" y1="81.0" x2="-13664.8" y2="987.0" stroke="#6f7c85" stroke-width="2.1"/><line x1="877.0" y1="81.0" x2="-13400.8" y2="987.0" stroke="#6f7c85" stroke-width="1.1"/><line x1="877.0" y1="81.0" x2="-13136.8" y2="987.0" stroke="#6f7c85" stroke-width="1.1"/><line x1="877.0" y1="81.0" x2="-12872.8" y2="987.0" stroke="#6f7c85" stroke-width="1.1"/><line x1="877.0" y1="81.0" x2="-12608.8" y2="987.0" stroke="#6f7c85" stroke-width="1.1"/><line x1="877.0" y1="81.0" x2="-12344.8" y2="987.0" stroke="#6f7c85" stroke-width="2.1"/><line x1="877.0" y1="81.0" x2="-12080.8" y2="987.0" stroke="#6f7c85" stroke-width="1.1"/><line x1="877.0" y1="81.0" x2="-11816.8" y2="987.0" stroke="#6f7c85" stroke-width="1.1"/><line x1="877.0" y1="81.0" x2="-11552.8" y2="987.0" stroke="#6f7c85" stroke-width="1.1"/><line x1="877.0" y1="81.0" x2="-11288.8" y2="987.0" stroke="#6f7c85" stroke-width="1.1"/><line x1="877.0" y1="81.0" x2="-11024.8" y2="987.0" stroke="#6f7c85" stroke-width="2.1"/><line x1="877.0" y1="81.0" x2="-10760.8" y2="987.0" stroke="#6f7c85" stroke-width="1.1"/><line x1="877.0" y1="81.0" x2="-10496.8" y2="987.0" stroke="#6f7c85" stroke-width="1.1"/><line x1="877.0" y1="81.0" x2="-10232.8" y2="987.0" stroke="#6f7c85" stroke-width="1.1"/><line x1="877.0" y1="81.0" x2="-9968.8" y2="987.0" stroke="#6f7c85" stroke-width="1.1"/><line x1="877.0" y1="81.0" x2="-9704.8" y2="987.0" stroke="#6f7c85" stroke-width="2.1"/><line x1="877.0" y1="81.0" x2="-9440.8" y2="987.0" stroke="#6f7c85" stroke-width="1.1"/><line x1="877.0" y1="81.0" x2="-9176.8" y2="987.0" stroke="#6f7c85" stroke-width="1.1"/><line x1="877.0" y1="81.0" x2="-8912.8" y2="987.0" stroke="#6f7c85" stroke-width="1.1"/><line x1="877.0" y1="81.0" x2="-8648.8" y2="987.0" stroke="#6f7c85" stroke-width="1.1"/><line x1="877.0" y1="81.0" x2="-8384.8" y2="987.0" stroke="#6f7c85" stroke-width="2.1"/><line x1="877.0" y1="81.0" x2="-8120.8" y2="987.0" stroke="#6f7c85" stroke-width="1.1"/><line x1="877.0" y1="81.0" x2="-7856.8" y2="987.0" stroke="#6f7c85" stroke-width="1.1"/><line x1="877.0" y1="81.0" x2="-7592.8" y2="987.0" stroke="#6f7c85" stroke-width="1.1"/><line x1="877.0" y1="81.0" x2="-7328.8" y2="987.0" stroke="#6f7c85" stroke-width="1.1"/><line x1="877.0" y1="81.0" x2="-7064.8" y2="987.0" stroke="#6f7c85" stroke-width="2.1"/><line x1="877.0" y1="81.0" x2="-6800.8" y2="987.0" stroke="#6f7c85" stroke-width="1.1"/><line x1="877.0" y1="81.0" x2="-6536.8" y2="987.0" stroke="#6f7c85" stroke-width="1.1"/><line x1="877.0" y1="81.0" x2="-6272.8" y2="987.0" stroke="#6f7c85" stroke-width="1.1"/><line x1="877.0" y1="81.0" x2="-6008.8" y2="987.0" stroke="#6f7c85" stroke-width="1.1"/><line x1="877.0" y1="81.0" x2="-5744.8" y2="987.0" stroke="#6f7c85" stroke-width="2.1"/><line x1="877.0" y1="81.0" x2="-5480.8" y2="987.0" stroke="#6f7c85" stroke-width="1.1"/><line x1="877.0" y1="81.0" x2="-5216.8" y2="987.0" stroke="#6f7c85" stroke-width="1.1"/><line x1="877.0" y1="81.0" x2="-4952.8" y2="987.0" stroke="#6f7c85" stroke-width="1.1"/><line x1="877.0" y1="81.0" x2="-4688.8" y2="987.0" stroke="#6f7c85" stroke-width="1.1"/><line x1="877.0" y1="81.0" x2="-4424.8" y2="987.0" stroke="#6f7c85" stroke-width="2.1"/><line x1="877.0" y1="81.0" x2="-4160.8" y2="987.0" stroke="#6f7c85" stroke-width="1.1"/><line x1="877.0" y1="81.0" x2="-3896.8" y2="987.0" stroke="#6f7c85" stroke-width="1.1"/><line x1="877.0" y1="81.0" x2="-3632.8" y2="987.0" stroke="#6f7c85" stroke-width="1.1"/><line x1="877.0" y1="81.0" x2="-3368.8" y2="987.0" stroke="#6f7c85" stroke-width="1.1"/><line x1="877.0" y1="81.0" x2="-3104.8" y2="987.0" stroke="#6f7c85" stroke-width="2.1"/><line x1="877.0" y1="81.0" x2="-2840.8" y2="987.0" stroke="#6f7c85" stroke-width="1.1"/><line x1="877.0" y1="81.0" x2="-2576.8" y2="987.0" stroke="#6f7c85" stroke-width="1.1"/><line x1="877.0" y1="81.0" x2="-2312.8" y2="987.0" stroke="#6f7c85" stroke-width="1.1"/><line x1="877.0" y1="81.0" x2="-2048.8" y2="987.0" stroke="#6f7c85" stroke-width="1.1"/><line x1="877.0" y1="81.0" x2="-1784.8" y2="987.0" stroke="#6f7c85" stroke-width="2.1"/><line x1="877.0" y1="81.0" x2="-1520.8" y2="987.0" stroke="#6f7c85" stroke-width="1.1"/><line x1="877.0" y1="81.0" x2="-1256.8" y2="987.0" stroke="#6f7c85" stroke-width="1.1"/><line x1="877.0" y1="81.0" x2="-992.8" y2="987.0" stroke="#6f7c85" stroke-width="1.1"/><line x1="877.0" y1="81.0" x2="-728.8" y2="987.0" stroke="#6f7c85" stroke-width="1.1"/><line x1="877.0" y1="81.0" x2="-464.8" y2="987.0" stroke="#6f7c85" stroke-width="2.1"/><line x1="877.0" y1="81.0" x2="-200.8" y2="987.0" stroke="#6f7c85" stroke-width="1.1"/><line x1="877.0" y1="81.0" x2="63.2" y2="987.0" stroke="#6f7c85" stroke-width="1.1"/><line x1="877.0" y1="81.0" x2="327.2" y2="987.0" stroke="#6f7c85" stroke-width="1.1"/><line x1="877.0" y1="81.0" x2="591.2" y2="987.0" stroke="#6f7c85" stroke-width="1.1"/><line x1="877.0" y1="81.0" x2="855.2" y2="987.0" stroke="#6f7c85" stroke-width="2.1"/><line x1="-788.0" y1="81.0" x2="-897.4" y2="987.0" stroke="#6f7c85" stroke-width="1.1"/><line x1="-788.0" y1="81.0" x2="-533.8" y2="987.0" stroke="#6f7c85" stroke-width="1.1"/><line x1="-788.0" y1="81.0" x2="-170.2" y2="987.0" stroke="#6f7c85" stroke-width="2.1"/><line x1="-788.0" y1="81.0" x2="193.4" y2="987.0" stroke="#6f7c85" stroke-width="1.1"/><line x1="-788.0" y1="81.0" x2="557.0" y2="987.0" stroke="#6f7c85" stroke-width="1.1"/><line x1="-788.0" y1="81.0" x2="920.6" y2="987.0" stroke="#6f7c85" stroke-width="1.1"/><line x1="-788.0" y1="81.0" x2="1284.2" y2="987.0" stroke="#6f7c85" stroke-width="1.1"/><line x1="-788.0" y1="81.0" x2="1647.8" y2="987.0" stroke="#6f7c85" stroke-width="2.1"/><line x1="-788.0" y1="81.0" x2="2011.4" y2="987.0" stroke="#6f7c85" stroke-width="1.1"/><line x1="-788.0" y1="81.0" x2="2375.0" y2="987.0" stroke="#6f7c85" stroke-width="1.1"/><line x1="-788.0" y1="81.0" x2="2738.6" y2="987.0" stroke="#6f7c85" stroke-width="1.1"/><line x1="-788.0" y1="81.0" x2="3102.2" y2="987.0" stroke="#6f7c85" stroke-width="1.1"/><line x1="-788.0" y1="81.0" x2="3465.8" y2="987.0" stroke="#6f7c85" stroke-width="2.1"/><line x1="-788.0" y1="81.0" x2="3829.4" y2="987.0" stroke="#6f7c85" stroke-width="1.1"/><line x1="-788.0" y1="81.0" x2="4193.0" y2="987.0" stroke="#6f7c85" stroke-width="1.1"/><line x1="-788.0" y1="81.0" x2="4556.6" y2="987.0" stroke="#6f7c85" stroke-width="1.1"/><line x1="-788.0" y1="81.0" x2="4920.2" y2="987.0" stroke="#6f7c85" stroke-width="1.1"/><line x1="-788.0" y1="81.0" x2="5283.8" y2="987.0" stroke="#6f7c85" stroke-width="2.1"/><line x1="-788.0" y1="81.0" x2="5647.4" y2="987.0" stroke="#6f7c85" stroke-width="1.1"/><line x1="-788.0" y1="81.0" x2="6011.0" y2="987.0" stroke="#6f7c85" stroke-width="1.1"/><line x1="-788.0" y1="81.0" x2="6374.6" y2="987.0" stroke="#6f7c85" stroke-width="1.1"/><line x1="-788.0" y1="81.0" x2="6738.2" y2="987.0" stroke="#6f7c85" stroke-width="1.1"/><line x1="-788.0" y1="81.0" x2="7101.8" y2="987.0" stroke="#6f7c85" stroke-width="2.1"/><line x1="-788.0" y1="81.0" x2="7465.4" y2="987.0" stroke="#6f7c85" stroke-width="1.1"/><line x1="-788.0" y1="81.0" x2="7829.0" y2="987.0" stroke="#6f7c85" stroke-width="1.1"/><line x1="-788.0" y1="81.0" x2="8192.6" y2="987.0" stroke="#6f7c85" stroke-width="1.1"/><line x1="-788.0" y1="81.0" x2="8556.2" y2="987.0" stroke="#6f7c85" stroke-width="1.1"/><line x1="-788.0" y1="81.0" x2="8919.8" y2="987.0" stroke="#6f7c85" stroke-width="2.1"/><line x1="-788.0" y1="81.0" x2="9283.4" y2="987.0" stroke="#6f7c85" stroke-width="1.1"/><line x1="-788.0" y1="81.0" x2="9647.0" y2="987.0" stroke="#6f7c85" stroke-width="1.1"/><line x1="-788.0" y1="81.0" x2="10010.6" y2="987.0" stroke="#6f7c85" stroke-width="1.1"/><line x1="-788.0" y1="81.0" x2="10374.2" y2="987.0" stroke="#6f7c85" stroke-width="1.1"/><line x1="-788.0" y1="81.0" x2="10737.8" y2="987.0" stroke="#6f7c85" stroke-width="2.1"/><line x1="-788.0" y1="81.0" x2="11101.4" y2="987.0" stroke="#6f7c85" stroke-width="1.1"/><line x1="-788.0" y1="81.0" x2="11465.0" y2="987.0" stroke="#6f7c85" stroke-width="1.1"/><line x1="-788.0" y1="81.0" x2="11828.6" y2="987.0" stroke="#6f7c85" stroke-width="1.1"/><line x1="-788.0" y1="81.0" x2="12192.2" y2="987.0" stroke="#6f7c85" stroke-width="1.1"/><line x1="-788.0" y1="81.0" x2="12555.8" y2="987.0" stroke="#6f7c85" stroke-width="2.1"/><line x1="-788.0" y1="81.0" x2="12919.4" y2="987.0" stroke="#6f7c85" stroke-width="1.1"/><line x1="-788.0" y1="81.0" x2="13283.0" y2="987.0" stroke="#6f7c85" stroke-width="1.1"/><line x1="-788.0" y1="81.0" x2="13646.6" y2="987.0" stroke="#6f7c85" stroke-width="1.1"/><line x1="-788.0" y1="81.0" x2="14010.2" y2="987.0" stroke="#6f7c85" stroke-width="1.1"/><line x1="-788.0" y1="81.0" x2="14373.8" y2="987.0" stroke="#6f7c85" stroke-width="2.1"/><line x1="-788.0" y1="81.0" x2="14737.4" y2="987.0" stroke="#6f7c85" stroke-width="1.1"/><line x1="-788.0" y1="81.0" x2="15101.0" y2="987.0" stroke="#6f7c85" stroke-width="1.1"/><line x1="-788.0" y1="81.0" x2="15464.6" y2="987.0" stroke="#6f7c85" stroke-width="1.1"/><line x1="-788.0" y1="81.0" x2="15828.2" y2="987.0" stroke="#6f7c85" stroke-width="1.1"/><line x1="-788.0" y1="81.0" x2="16191.8" y2="987.0" stroke="#6f7c85" stroke-width="2.1"/><line x1="-788.0" y1="81.0" x2="16555.4" y2="987.0" stroke="#6f7c85" stroke-width="1.1"/><line x1="-788.0" y1="81.0" x2="16919.0" y2="987.0" stroke="#6f7c85" stroke-width="1.1"/><line x1="-788.0" y1="81.0" x2="17282.6" y2="987.0" stroke="#6f7c85" stroke-width="1.1"/><line x1="-788.0" y1="81.0" x2="17646.2" y2="987.0" stroke="#6f7c85" stroke-width="1.1"/><line x1="-788.0" y1="81.0" x2="18009.8" y2="987.0" stroke="#6f7c85" stroke-width="2.1"/><line x1="-788.0" y1="81.0" x2="18373.4" y2="987.0" stroke="#6f7c85" stroke-width="1.1"/><line x1="-788.0" y1="81.0" x2="18737.0" y2="987.0" stroke="#6f7c85" stroke-width="1.1"/><line x1="-788.0" y1="81.0" x2="19100.6" y2="987.0" stroke="#6f7c85" stroke-width="1.1"/><line x1="-788.0" y1="81.0" x2="19464.2" y2="987.0" stroke="#6f7c85" stroke-width="1.1"/><line x1="-788.0" y1="81.0" x2="19827.8" y2="987.0" stroke="#6f7c85" stroke-width="2.1"/><line x1="-788.0" y1="81.0" x2="20191.4" y2="987.0" stroke="#6f7c85" stroke-width="1.1"/><line x1="-788.0" y1="81.0" x2="20555.0" y2="987.0" stroke="#6f7c85" stroke-width="1.1"/><line x1="-788.0" y1="81.0" x2="20918.6" y2="987.0" stroke="#6f7c85" stroke-width="1.1"/><line x1="-788.0" y1="81.0" x2="21282.2" y2="987.0" stroke="#6f7c85" stroke-width="1.1"/><line x1="-788.0" y1="81.0" x2="21645.8" y2="987.0" stroke="#6f7c85" stroke-width="2.1"/><line x1="-788.0" y1="81.0" x2="22009.4" y2="987.0" stroke="#6f7c85" stroke-width="1.1"/></g><g transform="translate(-43 -169)"><g fill="none" stroke="#0b1014" stroke-width="1.4" stroke-linecap="round" stroke-linejoin="round"><path d="M250.0 248.0C250.7 249.7 253.2 254.1 254.2 258.3C255.2 262.5 255.8 267.2 255.8 273.3C255.8 279.4 254.6 290.6 254.2 295.0C253.8 299.4 253.7 296.4 253.3 300.0C252.9 303.6 252.2 311.1 251.7 316.7C251.2 322.2 250.8 328.3 250.4 333.3C250.0 338.3 249.5 343.4 249.2 346.7C248.9 350.0 248.7 351.4 248.8 353.3C248.9 355.2 249.8 357.5 250.0 358.3"/><path d="M298.7 294.2C298.9 295.2 299.2 297.6 299.6 300.0C300.0 302.4 300.7 305.1 300.8 308.3C300.9 311.5 300.6 315.3 300.0 319.2C299.4 323.1 298.3 327.7 297.5 331.7C296.7 335.7 295.8 340.0 295.0 343.3C294.2 346.6 293.5 349.2 292.5 351.7C291.5 354.2 289.8 357.2 289.2 358.3"/><path d="M271.3 314.6C272.1 314.3 274.1 312.5 275.8 312.9C277.5 313.2 279.8 314.8 281.7 316.7C283.6 318.6 286.1 321.8 287.5 324.2C288.9 326.6 290.0 329.0 290.0 330.8C290.0 332.6 288.8 334.4 287.5 335.0C286.2 335.6 284.2 335.0 282.5 334.2C280.8 333.4 278.3 330.7 277.5 330.0"/><path d="M250.0 339.2C250.7 338.2 252.2 335.2 254.2 333.3C256.1 331.4 259.1 328.9 261.7 327.5C264.3 326.1 267.4 325.0 270.0 325.0C272.6 325.0 276.2 325.8 277.5 327.5C278.8 329.2 277.8 331.8 277.5 335.0C277.2 338.2 276.9 343.4 275.8 346.7C274.7 350.0 272.6 352.6 270.8 355.0C269.0 357.4 267.1 359.4 265.0 360.8C262.9 362.2 260.5 363.2 258.3 363.3C256.1 363.4 252.8 362.0 251.7 361.7"/><path d="M276.7 331.7C275.7 331.3 272.8 329.5 270.8 329.2C268.9 328.9 266.5 329.0 265.0 330.0C263.5 331.0 262.1 333.1 261.7 335.0C261.3 336.9 261.8 339.5 262.5 341.7C263.2 343.9 264.4 346.1 265.8 348.3C267.2 350.5 269.1 353.1 270.8 355.0C272.5 356.9 274.3 358.6 275.8 360.0C277.3 361.4 279.3 362.8 280.0 363.3"/><path d="M265.0 365.0C264.4 363.9 263.4 360.8 261.7 358.3C260.0 355.8 257.2 352.5 255.0 350.0C252.8 347.5 250.8 345.1 248.3 343.3C245.8 341.5 243.1 340.0 240.0 339.2C236.9 338.4 233.1 338.0 230.0 338.3C226.9 338.6 223.4 339.4 221.7 340.8C220.0 342.2 219.6 344.9 219.6 346.7C219.6 348.5 220.0 350.0 221.7 351.7C223.4 353.4 226.5 355.2 230.0 356.7C233.5 358.2 238.3 359.7 242.5 360.8C246.7 361.9 250.1 363.2 255.0 363.3C259.9 363.4 266.8 362.1 271.7 361.7C276.6 361.3 281.4 361.4 284.2 360.8C287.0 360.2 287.6 359.8 288.3 358.3C289.0 356.8 289.0 353.6 288.3 351.7C287.6 349.8 286.0 348.1 284.2 346.7C282.4 345.3 280.1 344.0 277.5 343.3C274.9 342.6 271.4 342.4 268.3 342.5C265.2 342.6 261.7 343.4 259.2 344.2C256.7 345.0 254.3 346.9 253.3 347.5"/><path d="M240.0 339.2C238.8 339.9 234.6 341.4 232.5 343.3C230.4 345.2 228.7 348.0 227.5 350.8C226.3 353.6 225.5 357.1 225.4 360.0C225.3 362.9 225.9 365.8 226.7 368.3C227.5 370.8 229.4 373.9 230.0 375.0"/><path d="M244.2 338.3C244.9 339.7 247.5 343.9 248.3 346.7C249.1 349.5 249.8 352.2 249.2 355.0C248.6 357.8 246.8 360.9 245.0 363.3C243.2 365.7 240.8 367.8 238.3 369.2C235.8 370.6 232.8 371.3 230.0 371.7C227.2 372.1 224.5 371.1 221.7 371.7C218.9 372.2 215.5 373.3 213.3 375.0C211.1 376.7 209.3 379.5 208.3 381.7C207.3 383.9 207.2 386.2 207.5 388.0C207.8 389.8 207.9 392.0 210.0 392.5C212.1 393.0 218.3 391.1 220.0 390.8"/><path d="M225.8 358.3C226.9 358.3 230.4 356.9 232.5 358.3C234.6 359.7 237.2 362.5 238.3 366.7C239.4 370.9 239.0 379.4 239.2 383.3C239.3 387.2 239.2 388.9 239.2 390.0"/><path d="M288.3 360.8C291.1 360.7 299.4 360.1 305.0 360.4C310.6 360.7 317.5 361.9 321.7 362.5C325.9 363.1 328.6 363.6 330.0 363.8"/><path d="M312.5 340.4C311.2 343.1 307.6 351.6 305.0 356.7C302.4 361.8 298.8 367.5 296.7 370.8C294.6 374.1 293.2 375.7 292.5 376.7"/><path d="M250.0 390.0C252.2 389.0 259.0 386.4 263.3 384.2C267.6 382.0 272.3 379.6 275.8 376.7C279.3 373.8 282.0 370.4 284.2 366.7C286.4 362.9 288.4 356.3 289.2 354.2"/><path d="M263.3 345.0C264.1 346.5 266.2 351.1 268.3 354.2C270.4 357.2 273.2 359.8 275.8 363.3C278.4 366.8 281.4 371.7 284.2 375.0C287.0 378.3 289.3 380.8 292.5 383.3C295.7 385.8 298.7 386.6 303.3 390.0C307.9 393.4 317.2 401.7 320.0 404.0"/><path d="M267.5 375.0C268.2 376.4 270.3 380.8 271.7 383.3C273.1 385.8 275.1 388.9 275.8 390.0"/><path d="M289.2 377.5C290.4 378.5 294.1 381.2 296.7 383.3C299.3 385.4 300.8 386.4 305.0 390.0C309.2 393.6 319.2 402.5 322.0 405.0"/><path d="M220.0 390.8C218.3 391.1 212.1 393.5 210.0 392.5C207.9 391.5 206.9 387.9 207.5 385.0C208.1 382.1 210.4 377.2 213.3 375.0C216.2 372.8 222.2 371.1 225.0 371.7C227.8 372.2 229.4 375.2 230.0 378.3C230.6 381.4 229.1 387.2 228.3 390.0C227.5 392.8 227.5 392.2 225.0 395.0C222.5 397.8 218.0 403.6 213.3 406.7C208.6 409.8 202.0 411.9 196.7 413.3C191.4 414.7 188.4 414.4 181.7 415.0C175.0 415.6 163.6 415.6 156.7 416.7C149.8 417.8 144.4 418.9 140.0 421.7C135.6 424.5 131.8 429.7 130.0 433.3C128.2 436.9 129.3 441.6 129.2 443.3"/><path d="M238.3 366.7C238.5 370.6 237.8 384.4 239.2 390.0C240.6 395.6 243.2 397.5 246.7 400.0C250.2 402.5 255.6 405.6 260.0 405.0C264.4 404.4 270.0 400.3 273.3 396.7C276.6 393.1 278.6 387.4 280.0 383.3C281.4 379.2 281.7 373.9 282.0 372.0"/><path d="M228.3 395.8C230.2 396.2 237.9 396.2 240.0 398.3C242.1 400.4 241.4 404.7 240.8 408.3C240.2 411.9 238.8 417.5 236.7 420.0C234.6 422.5 231.6 422.2 228.3 423.3C225.0 424.4 220.3 426.8 216.7 426.7C213.1 426.6 210.0 422.8 206.7 422.5C203.4 422.2 199.2 423.2 196.7 425.0C194.2 426.8 192.5 430.7 191.7 433.3C190.9 435.9 191.7 439.6 191.7 440.8"/><path d="M280.0 373.3C284.2 376.4 296.7 385.3 305.0 392.0C313.3 398.7 323.3 407.3 330.0 413.3C336.7 419.3 341.4 425.9 345.0 428.0C348.6 430.1 349.5 427.1 351.7 425.8C353.9 424.5 356.6 423.5 358.3 420.0C360.0 416.5 360.6 408.3 361.7 405.0C362.8 401.7 364.4 400.8 365.0 400.0"/><path d="M276.0 378.0C280.0 381.0 291.7 389.3 300.0 396.0C308.3 402.7 319.3 412.0 326.0 418.0C332.7 424.0 337.7 429.7 340.0 432.0"/><path d="M272.0 366.0C275.3 369.0 285.1 378.3 292.0 384.0C298.9 389.7 306.7 395.1 313.3 400.0C319.9 404.9 325.3 409.0 331.7 413.3C338.1 417.6 347.0 425.2 351.7 425.8C356.4 426.4 357.8 421.0 360.0 416.7C362.2 412.4 363.8 404.1 365.0 400.0C366.2 395.9 366.7 393.3 367.0 392.0"/><path d="M381.7 381.3C380.3 381.9 375.8 382.7 373.3 385.0C370.8 387.3 368.9 390.8 366.7 395.0C364.5 399.2 361.5 405.8 360.0 410.0C358.5 414.2 358.2 417.0 357.5 420.0C356.8 423.0 356.2 426.7 356.0 428.0"/><path d="M359.0 420.0C359.3 417.2 359.8 406.8 360.8 403.3C361.8 399.8 363.5 398.9 365.0 399.0C366.5 399.1 368.2 400.5 370.0 404.0C371.8 407.5 374.4 415.1 375.8 420.0C377.2 424.9 375.9 428.6 378.3 433.3C380.7 438.0 385.8 444.4 390.0 448.3C394.2 452.2 400.0 453.1 403.3 456.7C406.6 460.3 408.9 467.8 410.0 470.0"/><path d="M390.8 412.5C390.1 414.6 388.5 421.2 386.7 425.0C384.9 428.8 382.2 432.9 380.0 435.0C377.8 437.1 375.0 438.3 373.3 437.5C371.6 436.7 370.7 434.0 370.0 430.0C369.3 426.0 369.6 418.3 369.2 413.3C368.8 408.3 367.8 402.2 367.5 400.0"/><path d="M303.3 420.0C303.9 418.6 304.5 413.9 306.7 411.7C308.9 409.5 313.4 407.3 316.7 406.7C320.0 406.1 323.6 405.8 326.7 408.3C329.8 410.8 331.9 416.1 335.0 421.7C338.1 427.3 340.8 436.4 345.0 441.7C349.2 447.0 355.3 449.1 360.0 453.3C364.7 457.5 370.0 461.7 373.3 466.7C376.6 471.7 376.7 479.1 380.0 483.3C383.3 487.5 388.9 490.4 393.3 491.7C397.8 492.9 402.9 491.9 406.7 490.8C410.4 489.7 414.0 487.9 415.8 485.0C417.6 482.1 418.5 477.2 417.5 473.3C416.5 469.4 413.5 465.0 410.0 461.7C406.5 458.4 401.1 456.6 396.7 453.3C392.2 450.0 386.4 445.6 383.3 441.7C380.2 437.8 380.0 435.3 378.3 430.0C376.6 424.7 375.0 415.0 373.3 410.0C371.6 405.0 369.1 401.7 368.3 400.0"/><path d="M315.0 406.7C315.1 408.9 315.6 414.4 315.8 420.0C316.0 425.6 315.0 434.7 316.0 440.0C317.0 445.3 319.0 449.3 322.0 452.0C325.0 454.7 330.3 456.3 334.0 456.0C337.7 455.7 342.3 451.0 344.0 450.0"/><path d="M300.0 420.0C301.9 420.1 309.8 420.7 311.7 420.8"/><path d="M124.2 432.5C123.1 431.5 118.3 428.9 117.5 426.7C116.7 424.5 117.1 420.9 119.2 419.2C121.3 417.5 126.5 416.4 130.0 416.7C133.5 417.0 137.2 418.4 140.0 420.8C142.8 423.2 143.9 427.9 146.7 430.8C149.5 433.7 153.1 436.8 156.7 438.3C160.3 439.8 164.4 440.6 168.3 440.0C172.2 439.4 177.5 437.2 180.0 435.0C182.5 432.8 183.9 429.5 183.3 426.7C182.8 423.9 180.0 420.1 176.7 418.3C173.4 416.5 165.5 416.2 163.3 415.8"/><path d="M138.3 443.3C138.8 446.1 140.4 454.7 141.0 460.0C141.6 465.3 142.1 471.7 141.7 475.0C141.2 478.3 137.5 476.9 138.3 480.0C139.1 483.1 145.0 488.9 146.7 493.3C148.4 497.8 147.2 502.2 148.3 506.7C149.4 511.1 150.5 516.4 153.3 520.0C156.1 523.6 161.1 527.8 165.0 528.3C168.9 528.8 173.8 526.3 176.7 523.3C179.6 520.2 182.2 515.0 182.5 510.0C182.8 505.0 179.3 497.8 178.3 493.3C177.3 488.9 175.9 487.2 176.7 483.3C177.5 479.4 180.8 473.1 183.3 470.0C185.8 466.9 190.3 465.8 191.7 465.0"/><path d="M125.8 468.3C126.0 470.2 126.6 476.4 127.0 480.0C127.4 483.6 128.1 488.3 128.3 490.0"/><path d="M125.8 469.0C126.9 469.7 130.1 471.7 132.5 473.0C134.9 474.3 138.8 476.1 140.0 476.7"/><path d="M97.5 516.7C97.4 515.3 95.7 511.1 96.7 508.3C97.7 505.5 100.2 500.8 103.3 500.0C106.3 499.2 111.7 500.8 115.0 503.3C118.3 505.8 120.5 511.5 123.3 515.0C126.1 518.5 128.4 522.1 131.7 524.2C135.0 526.3 139.7 527.9 143.3 527.5C146.9 527.1 150.5 523.8 153.3 521.7C156.1 519.6 158.9 516.1 160.0 515.0"/><path d="M136.7 480.0C136.4 482.8 136.1 492.0 135.0 496.7C133.9 501.4 130.6 504.1 130.0 508.3C129.4 512.5 131.4 519.5 131.7 521.7"/><path d="M151.7 472.5C153.6 472.4 159.4 470.2 163.3 471.7C167.2 473.2 172.8 477.0 175.0 481.7C177.2 486.4 177.2 494.2 176.7 500.0C176.1 505.8 172.5 510.3 171.7 516.7C170.9 523.1 170.9 531.9 171.7 538.3C172.5 544.7 174.5 549.7 176.7 555.0C178.9 560.3 183.6 567.5 185.0 570.0"/><path d="M158.3 547.5C159.9 546.9 164.4 544.4 168.0 544.0C171.6 543.6 178.0 544.8 180.0 545.0"/><path d="M200.0 491.7C203.9 490.9 216.6 488.6 223.3 486.7C230.0 484.8 234.4 482.2 240.0 480.0C245.6 477.8 252.0 475.6 256.7 473.3C261.4 471.0 266.1 467.2 268.0 466.0"/><path d="M262.5 440.0C263.8 439.0 267.8 435.2 270.0 434.2C272.2 433.2 275.0 432.7 275.8 434.2C276.6 435.7 276.8 440.4 275.0 443.3C273.2 446.2 268.3 449.8 265.0 451.7C261.7 453.6 258.5 453.3 255.0 455.0C251.5 456.7 247.5 458.8 244.0 462.0C240.5 465.2 236.7 470.0 234.0 474.0C231.3 478.0 229.0 484.0 228.0 486.0"/><path d="M244.2 448.3C245.2 447.8 247.9 444.7 250.0 445.0C252.1 445.3 253.9 447.5 256.7 450.0C259.5 452.5 264.2 457.5 266.7 460.0C269.2 462.5 270.9 464.2 271.7 465.0"/><path d="M283.3 438.3C284.4 437.8 286.7 435.6 290.0 435.0C293.3 434.4 299.1 434.2 303.3 435.0C307.5 435.8 313.1 439.2 315.0 440.0"/><path d="M284.2 440.0C284.6 441.4 285.7 445.8 286.7 448.3C287.7 450.8 289.7 453.1 290.0 455.0C290.3 456.9 288.6 459.2 288.3 460.0"/><path d="M250.8 503.3C255.7 502.8 270.7 501.2 280.0 500.0C289.3 498.8 298.4 497.3 306.7 495.8C315.0 494.3 323.1 492.8 330.0 491.0C336.9 489.2 345.2 486.0 348.3 485.0"/><path d="M252.0 502.0C257.5 501.0 274.0 497.7 285.0 496.0C296.0 494.3 312.5 492.7 318.0 492.0"/><path d="M291.7 510.8C294.8 509.5 304.2 505.4 310.0 503.0C315.8 500.6 323.9 497.8 326.7 496.7"/><path d="M298.3 510.0C296.4 512.8 290.6 520.9 286.7 526.7C282.8 532.5 277.2 538.9 275.0 545.0C272.8 551.1 273.3 559.1 273.3 563.3C273.3 567.5 273.3 566.4 275.0 570.0C276.7 573.6 279.1 579.7 283.3 585.0C287.5 590.3 295.3 596.2 300.0 601.7C304.7 607.2 308.8 612.8 311.7 618.3C314.6 623.8 316.7 629.2 317.5 635.0C318.3 640.8 317.9 648.0 316.7 653.3C315.4 658.6 312.8 662.5 310.0 666.7C307.2 670.9 302.5 674.1 300.0 678.3C297.5 682.5 296.0 687.2 295.0 691.7C294.0 696.2 293.6 701.4 294.2 705.0C294.8 708.6 296.2 711.5 298.3 713.3C300.4 715.1 305.3 715.4 306.7 715.8"/><path d="M266.7 531.7C265.3 529.8 259.7 523.9 258.3 520.0C256.9 516.1 257.5 511.1 258.3 508.3C259.1 505.5 262.5 504.1 263.3 503.3"/><path d="M273.3 545.0C270.5 546.1 262.2 550.0 256.7 551.7C251.1 553.4 244.7 552.8 240.0 555.0C235.3 557.2 230.5 561.1 228.3 565.0C226.1 568.9 225.9 574.4 226.7 578.3C227.5 582.2 230.8 585.9 233.3 588.3C235.8 590.7 240.3 591.8 241.7 592.5"/><path d="M309.2 546.3C312.9 545.5 324.9 545.0 331.7 541.7C338.5 538.4 344.7 532.0 350.0 526.7C355.3 521.4 358.3 515.0 363.3 510.0C368.3 505.0 375.0 499.6 380.0 496.7C385.0 493.8 388.9 493.3 393.3 492.5C397.8 491.7 404.5 491.8 406.7 491.7"/><path d="M336.7 498.3C340.0 499.7 350.6 503.9 356.7 506.7C362.8 509.5 367.8 512.9 373.3 515.0C378.9 517.1 385.0 518.8 390.0 519.2C395.0 519.6 400.1 518.2 403.3 517.5C406.5 516.8 408.2 515.4 409.2 515.0"/><path d="M406.7 491.7C403.9 492.0 395.6 491.6 390.0 493.3C384.4 495.0 378.3 497.8 373.3 501.7C368.3 505.6 363.9 512.3 360.0 516.7C356.1 521.1 353.3 525.0 350.0 528.3C346.7 531.6 341.7 535.3 340.0 536.7"/><path d="M401.7 456.7C402.5 458.4 405.3 462.3 406.7 466.7C408.1 471.1 408.1 478.6 410.0 483.3C411.9 488.0 414.4 492.1 418.3 495.0C422.2 497.9 429.1 500.1 433.3 500.8C437.5 501.5 440.9 500.3 443.3 499.2C445.7 498.1 446.8 495.0 447.5 494.2"/><path d="M340.0 455.0C341.4 456.3 346.4 460.0 348.3 463.0C350.2 466.0 351.8 469.7 351.7 473.0C351.6 476.3 349.9 480.6 348.0 483.0C346.1 485.4 341.3 486.8 340.0 487.5"/><path d="M346.0 485.0C347.0 486.3 351.3 490.3 352.0 493.0C352.7 495.7 352.0 499.8 350.0 501.0C348.0 502.2 341.7 500.2 340.0 500.0"/><path d="M300.0 601.7C302.8 602.1 310.6 604.4 316.7 604.2C322.8 604.1 330.0 601.6 336.7 600.8C343.4 600.0 350.6 598.9 356.7 599.2C362.8 599.5 368.2 600.4 373.3 602.5C378.4 604.6 385.1 610.2 387.5 611.7"/><path d="M268.3 654.2C269.1 653.0 270.8 648.4 273.3 646.7C275.8 645.0 280.1 643.7 283.3 644.2C286.5 644.8 290.4 647.4 292.5 650.0C294.6 652.6 296.2 656.7 295.8 660.0C295.4 663.3 293.2 667.5 290.0 670.0C286.8 672.5 281.1 673.0 276.7 675.0C272.2 677.0 266.9 678.9 263.3 681.7C259.7 684.5 256.7 688.4 255.0 691.7C253.3 695.0 252.8 698.1 253.3 701.7C253.9 705.3 255.5 710.4 258.3 713.3C261.1 716.2 265.8 718.5 270.0 719.2C274.2 719.9 279.8 719.0 283.3 717.5C286.8 716.0 289.1 712.6 290.8 710.0C292.5 707.4 292.9 703.1 293.3 701.7"/><path d="M311.7 665.0C308.6 666.7 298.3 672.0 293.3 675.0C288.3 678.0 284.3 680.2 281.7 683.3C279.1 686.3 277.8 689.7 277.5 693.3C277.2 696.9 278.2 701.8 280.0 705.0C281.8 708.2 285.2 710.8 288.3 712.5C291.4 714.2 296.6 714.6 298.3 715.0"/><path d="M341.7 706.7C346.5 706.6 360.7 705.8 370.6 706.2C380.5 706.6 390.9 708.6 401.1 709.3C411.3 710.0 420.8 710.0 431.7 710.3C442.6 710.6 457.1 712.1 466.3 711.3C475.5 710.4 478.9 708.2 486.7 705.2C494.5 702.2 505.1 697.1 513.2 693.0C521.4 688.9 529.2 683.8 535.6 680.7C542.0 677.6 549.2 675.6 551.9 674.6"/><path d="M401.1 709.3C406.2 708.8 421.5 706.9 431.7 706.2C441.9 705.5 454.4 704.9 462.2 705.2C470.0 705.5 475.8 707.7 478.5 708.2"/><path d="M401.1 709.3C403.5 710.6 410.6 713.3 415.4 717.4C420.1 721.5 424.5 728.6 429.6 733.7C434.7 738.8 439.8 743.9 445.9 748.0C452.0 752.1 460.2 755.3 466.3 758.1C472.4 760.9 479.9 763.6 482.6 764.7"/><path d="M503.0 699.1C506.4 697.7 516.0 692.7 523.3 690.9C530.6 689.1 540.0 687.8 546.8 688.5C553.6 689.2 556.1 691.2 564.1 695.0C572.1 698.8 585.1 705.9 594.6 711.3C604.1 716.7 614.8 723.0 621.1 727.6C627.4 732.2 630.4 736.9 632.3 738.8"/><path d="M546.8 688.5C548.3 690.6 553.4 695.6 555.9 701.1C558.4 706.6 560.3 714.7 562.0 721.5C563.7 728.3 564.4 735.1 566.1 741.9C567.8 748.7 569.8 755.8 572.2 762.2C574.6 768.7 578.2 775.7 580.4 780.6C582.6 785.5 584.6 789.9 585.5 791.8"/><path d="M551.0 700.0C552.4 702.9 557.3 711.1 559.5 717.4C561.7 723.7 562.2 732.4 564.0 737.8C565.8 743.2 569.2 746.0 570.2 750.0C571.2 754.0 568.9 756.9 570.2 762.0C571.6 767.1 576.1 775.6 578.3 780.6C580.5 785.6 582.5 789.9 583.4 791.8"/><path d="M566.1 751.0C564.1 752.2 557.6 755.9 553.9 758.1C550.2 760.3 545.7 761.9 543.7 764.3C541.7 766.7 541.0 769.7 541.7 772.4C542.4 775.1 544.8 778.5 547.8 780.6C550.8 782.7 556.1 784.1 560.0 785.0C563.9 785.9 569.3 785.9 571.2 786.1"/><path d="M580.4 778.5C582.8 780.5 588.8 786.3 594.6 790.7C600.4 795.1 608.2 799.9 615.0 805.0C621.8 810.1 629.6 816.5 635.4 821.3C641.2 826.0 646.2 830.2 649.6 833.5C653.0 836.8 654.9 839.8 656.0 841.0"/><path d="M306.7 715.8L298.3 720.8L315.0 730.8L308.3 740.0L305.0 746.0"/><path d="M298.3 720.8L341.7 706.7L345.0 713.3L366.5 715.0"/><path d="M341.7 706.7L316.7 733.3L310.0 740.0"/><path d="M400.0 706.5L396.0 708.5L403.0 709.5"/><path d="M535.0 682.0L551.9 674.6L537.0 683.5"/><path d="M288.3 350.0C288.3 351.8 288.2 353.8 288.0 355.4C287.8 357.1 287.4 358.6 287.1 359.8C286.7 360.9 286.2 361.8 285.7 362.2C285.3 362.6 284.7 362.6 284.3 362.2C283.8 361.8 283.3 360.9 282.9 359.8C282.6 358.6 282.2 357.1 282.0 355.4C281.8 353.8 281.7 351.8 281.7 350.0C281.7 348.2 281.8 346.2 282.0 344.6C282.2 342.9 282.6 341.4 282.9 340.2C283.3 339.1 283.8 338.2 284.3 337.8C284.7 337.4 285.3 337.4 285.7 337.8C286.2 338.2 286.7 339.1 287.1 340.2C287.4 341.4 287.8 342.9 288.0 344.6C288.2 346.2 288.3 348.2 288.3 350.0Z"/><path d="M297.3 360.6C296.9 362.8 296.4 365.3 295.9 367.4C295.4 369.4 294.7 371.4 294.0 372.7C293.4 374.1 292.6 375.1 292.0 375.6C291.4 376.0 290.7 375.9 290.2 375.3C289.8 374.7 289.3 373.5 289.1 372.0C288.8 370.5 288.7 368.5 288.8 366.4C288.8 364.3 289.0 361.7 289.3 359.4C289.7 357.2 290.2 354.7 290.7 352.6C291.2 350.6 291.9 348.6 292.6 347.3C293.2 345.9 294.0 344.9 294.6 344.4C295.2 344.0 295.9 344.1 296.4 344.7C296.8 345.3 297.3 346.5 297.5 348.0C297.8 349.5 297.9 351.5 297.8 353.6C297.8 355.7 297.6 358.3 297.3 360.6Z"/><path d="M303.7 352.4C303.4 354.4 302.9 356.5 302.3 358.3C301.8 360.0 301.1 361.7 300.4 362.9C299.8 364.1 299.1 364.9 298.5 365.3C297.9 365.6 297.2 365.5 296.8 365.0C296.3 364.5 296.0 363.4 295.8 362.1C295.6 360.8 295.5 358.9 295.6 357.1C295.7 355.2 295.9 353.0 296.3 351.0C296.6 349.0 297.1 346.9 297.7 345.1C298.2 343.4 298.9 341.7 299.6 340.5C300.2 339.3 300.9 338.5 301.5 338.1C302.1 337.8 302.8 337.9 303.2 338.4C303.7 338.9 304.0 340.0 304.2 341.3C304.4 342.6 304.5 344.5 304.4 346.3C304.3 348.2 304.1 350.4 303.7 352.4Z"/><path d="M270.5 378.3C270.5 379.5 270.2 380.7 269.7 381.8C269.2 382.8 268.4 383.8 267.5 384.6C266.6 385.3 265.4 385.8 264.3 386.1C263.2 386.4 261.8 386.4 260.7 386.1C259.6 385.8 258.4 385.3 257.5 384.6C256.6 383.8 255.8 382.8 255.3 381.8C254.8 380.7 254.5 379.5 254.5 378.3C254.5 377.1 254.8 375.9 255.3 374.8C255.8 373.8 256.6 372.8 257.5 372.0C258.4 371.3 259.6 370.8 260.7 370.5C261.8 370.2 263.2 370.2 264.3 370.5C265.4 370.8 266.6 371.3 267.5 372.0C268.4 372.8 269.2 373.8 269.7 374.8C270.2 375.9 270.5 377.1 270.5 378.3Z"/><path d="M278.0 378.0C278.0 379.7 277.6 381.6 277.0 383.2C276.4 384.8 275.4 386.3 274.2 387.4C273.1 388.5 271.6 389.3 270.2 389.7C268.8 390.1 267.2 390.1 265.8 389.7C264.4 389.3 262.9 388.5 261.8 387.4C260.6 386.3 259.6 384.8 259.0 383.2C258.4 381.6 258.0 379.7 258.0 378.0C258.0 376.3 258.4 374.4 259.0 372.8C259.6 371.2 260.6 369.7 261.8 368.6C262.9 367.5 264.4 366.7 265.8 366.3C267.2 365.9 268.8 365.9 270.2 366.3C271.6 366.7 273.1 367.5 274.2 368.6C275.4 369.7 276.4 371.2 277.0 372.8C277.6 374.4 278.0 376.3 278.0 378.0Z"/><path d="M134.3 454.8C134.4 457.2 134.4 459.9 134.3 462.1C134.2 464.3 134.0 466.4 133.7 467.9C133.3 469.4 132.9 470.7 132.4 471.2C132.0 471.8 131.4 471.8 130.9 471.3C130.4 470.8 129.8 469.6 129.3 468.2C128.8 466.7 128.4 464.6 128.0 462.4C127.7 460.2 127.4 457.6 127.3 455.2C127.2 452.8 127.2 450.1 127.3 447.9C127.4 445.7 127.6 443.6 127.9 442.1C128.3 440.6 128.7 439.3 129.2 438.8C129.6 438.2 130.2 438.2 130.7 438.7C131.2 439.2 131.8 440.4 132.3 441.8C132.8 443.3 133.2 445.4 133.6 447.6C133.9 449.8 134.2 452.4 134.3 454.8Z"/><path d="M182.3 525.7C181.6 527.0 180.2 528.0 178.6 528.6C176.9 529.1 174.7 529.3 172.5 529.1C170.3 528.8 167.7 528.1 165.3 527.1C162.9 526.2 160.4 524.7 158.4 523.1C156.3 521.6 154.4 519.7 153.1 517.9C151.8 516.1 150.8 514.0 150.5 512.3C150.2 510.7 150.4 509.0 151.1 507.7C151.8 506.4 153.2 505.4 154.8 504.8C156.5 504.3 158.7 504.1 160.9 504.3C163.1 504.6 165.7 505.3 168.1 506.3C170.5 507.2 173.0 508.7 175.0 510.3C177.1 511.8 179.0 513.7 180.3 515.5C181.6 517.3 182.6 519.4 182.9 521.1C183.2 522.7 183.0 524.4 182.3 525.7Z"/><path d="M178.3 538.3C178.3 539.6 177.9 541.0 177.3 542.2C176.7 543.4 175.7 544.5 174.5 545.3C173.4 546.1 171.9 546.8 170.5 547.1C169.1 547.4 167.5 547.4 166.1 547.1C164.7 546.8 163.2 546.1 162.1 545.3C160.9 544.5 159.9 543.4 159.3 542.2C158.7 541.0 158.3 539.6 158.3 538.3C158.3 537.0 158.7 535.6 159.3 534.4C159.9 533.2 160.9 532.1 162.1 531.3C163.2 530.5 164.7 529.8 166.1 529.5C167.5 529.2 169.1 529.2 170.5 529.5C171.9 529.8 173.4 530.5 174.5 531.3C175.7 532.1 176.7 533.2 177.3 534.4C177.9 535.6 178.3 537.0 178.3 538.3Z"/><path d="M178.5 516.9C179.1 518.8 179.6 521.0 179.7 522.9C179.8 524.8 179.5 526.8 179.0 528.4C178.5 529.9 177.6 531.3 176.6 532.1C175.5 533.0 174.1 533.5 172.8 533.5C171.4 533.5 169.9 533.0 168.5 532.2C167.1 531.4 165.6 530.0 164.5 528.5C163.3 527.0 162.2 525.0 161.5 523.1C160.9 521.2 160.4 519.0 160.3 517.1C160.2 515.2 160.5 513.2 161.0 511.6C161.5 510.1 162.4 508.7 163.4 507.9C164.5 507.0 165.9 506.5 167.2 506.5C168.6 506.5 170.1 507.0 171.5 507.8C172.9 508.6 174.4 510.0 175.5 511.5C176.7 513.0 177.8 515.0 178.5 516.9Z"/><path d="M203.1 483.5C203.8 487.1 204.3 491.0 204.6 494.3C205.0 497.5 205.1 500.7 205.1 503.0C205.0 505.3 204.7 507.2 204.3 508.0C203.9 508.9 203.3 509.1 202.6 508.4C201.9 507.7 201.0 506.0 200.1 503.9C199.3 501.7 198.3 498.7 197.5 495.5C196.7 492.3 195.9 488.5 195.3 484.9C194.6 481.3 194.1 477.4 193.8 474.1C193.4 470.9 193.3 467.7 193.3 465.4C193.4 463.1 193.7 461.2 194.1 460.4C194.5 459.5 195.1 459.3 195.8 460.0C196.5 460.7 197.4 462.4 198.3 464.5C199.1 466.7 200.1 469.7 200.9 472.9C201.7 476.1 202.5 479.9 203.1 483.5Z"/><path d="M248.0 467.5C248.0 470.0 247.3 472.8 246.2 475.1C245.1 477.4 243.3 479.6 241.2 481.2C239.2 482.8 236.5 484.0 234.0 484.6C231.5 485.1 228.5 485.1 226.0 484.6C223.5 484.0 220.8 482.8 218.8 481.2C216.7 479.6 214.9 477.4 213.8 475.1C212.7 472.8 212.0 470.0 212.0 467.5C212.0 465.0 212.7 462.2 213.8 459.9C214.9 457.6 216.7 455.4 218.8 453.8C220.8 452.2 223.5 451.0 226.0 450.4C228.5 449.9 231.5 449.9 234.0 450.4C236.5 451.0 239.2 452.2 241.2 453.8C243.3 455.4 245.1 457.6 246.2 459.9C247.3 462.2 248.0 465.0 248.0 467.5Z"/><path d="M263.3 466.0C264.0 467.3 264.2 469.0 263.8 470.7C263.3 472.5 262.2 474.6 260.7 476.5C259.2 478.4 257.0 480.5 254.7 482.2C252.4 483.9 249.6 485.5 247.0 486.7C244.4 487.8 241.5 488.7 239.1 489.0C236.7 489.4 234.3 489.3 232.6 488.8C230.8 488.3 229.4 487.3 228.7 486.0C228.0 484.7 227.8 483.0 228.2 481.3C228.7 479.5 229.8 477.4 231.3 475.5C232.8 473.6 235.0 471.5 237.3 469.8C239.6 468.1 242.4 466.5 245.0 465.3C247.6 464.2 250.5 463.3 252.9 463.0C255.3 462.6 257.7 462.7 259.4 463.2C261.2 463.7 262.6 464.7 263.3 466.0Z"/><path d="M331.3 473.3C331.3 475.3 330.8 477.6 330.0 479.4C329.2 481.2 327.9 483.0 326.4 484.2C324.9 485.5 323.0 486.5 321.2 486.9C319.4 487.4 317.2 487.4 315.4 486.9C313.6 486.5 311.7 485.5 310.2 484.2C308.7 483.0 307.4 481.2 306.6 479.4C305.8 477.6 305.3 475.3 305.3 473.3C305.3 471.3 305.8 469.0 306.6 467.2C307.4 465.4 308.7 463.6 310.2 462.4C311.7 461.1 313.6 460.1 315.4 459.7C317.2 459.2 319.4 459.2 321.2 459.7C323.0 460.1 324.9 461.1 326.4 462.4C327.9 463.6 329.2 465.4 330.0 467.2C330.8 469.0 331.3 471.3 331.3 473.3Z"/><path d="M349.2 471.7C349.2 473.7 348.7 476.0 348.0 477.8C347.2 479.6 345.9 481.4 344.5 482.6C343.1 483.9 341.2 484.9 339.5 485.3C337.7 485.8 335.7 485.8 333.9 485.3C332.2 484.9 330.3 483.9 328.9 482.6C327.5 481.4 326.2 479.6 325.4 477.8C324.7 476.0 324.2 473.7 324.2 471.7C324.2 469.7 324.7 467.4 325.4 465.6C326.2 463.8 327.5 462.0 328.9 460.8C330.3 459.5 332.2 458.5 333.9 458.1C335.7 457.6 337.7 457.6 339.5 458.1C341.2 458.5 343.1 459.5 344.5 460.8C345.9 462.0 347.2 463.8 348.0 465.6C348.7 467.4 349.2 469.7 349.2 471.7Z"/><path d="M297.5 486.7C297.5 488.4 297.0 490.3 296.3 491.9C295.5 493.5 294.2 495.0 292.8 496.1C291.4 497.2 289.5 498.0 287.8 498.4C286.0 498.8 284.0 498.8 282.2 498.4C280.5 498.0 278.6 497.2 277.2 496.1C275.8 495.0 274.5 493.5 273.7 491.9C273.0 490.3 272.5 488.4 272.5 486.7C272.5 485.0 273.0 483.1 273.7 481.5C274.5 479.9 275.8 478.4 277.2 477.3C278.6 476.2 280.5 475.4 282.2 475.0C284.0 474.6 286.0 474.6 287.8 475.0C289.5 475.4 291.4 476.2 292.8 477.3C294.2 478.4 295.5 479.9 296.3 481.5C297.0 483.1 297.5 485.0 297.5 486.7Z"/><path d="M282.7 483.3C282.7 485.5 282.1 487.9 281.1 489.8C280.1 491.8 278.5 493.7 276.7 495.0C274.9 496.4 272.5 497.4 270.3 497.9C268.0 498.4 265.4 498.4 263.1 497.9C260.9 497.4 258.5 496.4 256.7 495.0C254.9 493.7 253.3 491.8 252.3 489.8C251.3 487.9 250.7 485.5 250.7 483.3C250.7 481.1 251.3 478.7 252.3 476.8C253.3 474.8 254.9 472.9 256.7 471.6C258.5 470.2 260.9 469.2 263.1 468.7C265.4 468.2 268.0 468.2 270.3 468.7C272.5 469.2 274.9 470.2 276.7 471.6C278.5 472.9 280.1 474.8 281.1 476.8C282.1 478.7 282.7 481.1 282.7 483.3Z"/><path d="M342.0 483.8C341.2 486.0 339.7 488.2 338.0 489.8C336.3 491.4 334.0 492.7 331.7 493.4C329.4 494.1 326.6 494.3 324.2 494.0C321.8 493.6 319.2 492.7 317.1 491.4C315.0 490.1 313.1 488.1 311.8 486.1C310.4 484.1 309.5 481.6 309.2 479.3C308.9 477.0 309.2 474.4 310.0 472.2C310.8 470.0 312.3 467.8 314.0 466.2C315.7 464.6 318.0 463.3 320.3 462.6C322.6 461.9 325.4 461.7 327.8 462.0C330.2 462.4 332.8 463.3 334.9 464.6C337.0 465.9 338.9 467.9 340.2 469.9C341.6 471.9 342.5 474.4 342.8 476.7C343.1 479.0 342.8 481.6 342.0 483.8Z"/><path d="M317.5 480.1C317.9 481.7 317.8 483.5 317.3 485.1C316.8 486.7 315.6 488.5 314.3 489.9C312.9 491.3 311.0 492.6 309.0 493.5C307.0 494.4 304.7 495.0 302.6 495.2C300.4 495.4 298.1 495.2 296.2 494.7C294.3 494.2 292.5 493.2 291.2 492.1C289.9 491.0 288.9 489.4 288.5 487.9C288.1 486.3 288.2 484.5 288.7 482.9C289.2 481.3 290.4 479.5 291.7 478.1C293.1 476.7 295.0 475.4 297.0 474.5C299.0 473.6 301.3 473.0 303.4 472.8C305.6 472.6 307.9 472.8 309.8 473.3C311.7 473.8 313.5 474.8 314.8 475.9C316.1 477.0 317.1 478.6 317.5 480.1Z"/><path d="M351.3 493.3C351.3 494.5 351.0 495.7 350.5 496.8C350.0 497.8 349.2 498.8 348.3 499.6C347.4 500.3 346.2 500.8 345.1 501.1C344.0 501.4 342.6 501.4 341.5 501.1C340.4 500.8 339.2 500.3 338.3 499.6C337.4 498.8 336.6 497.8 336.1 496.8C335.6 495.7 335.3 494.5 335.3 493.3C335.3 492.1 335.6 490.9 336.1 489.8C336.6 488.8 337.4 487.8 338.3 487.0C339.2 486.3 340.4 485.8 341.5 485.5C342.6 485.2 344.0 485.2 345.1 485.5C346.2 485.8 347.4 486.3 348.3 487.0C349.2 487.8 350.0 488.8 350.5 489.8C351.0 490.9 351.3 492.1 351.3 493.3Z"/></g><g stroke="#e87878" stroke-width="2" fill="none"><path d="M282.5 460.8L279.2 324"/><path d="M282.5 460.8L194.2 440"/><path d="M282.5 460.8L362.5 431.7"/><path d="M276.5 320L279.3 325L282.5 320M279.3 325V329"/><path d="M194 437L198 443M198 437L193 442"/><path d="M359 429H364L360 434H365"/></g><path d="M528 524L534 520.5V523H539V525H534Z" fill="#c48a96" opacity=".55"/><path d="M549 525.5H557" stroke="#c48a96" stroke-width="1.4" opacity=".45"/><g stroke-width="1.5" fill="none"><path d="M63.8 984.3L65.5 967" stroke="#4ad85a"/><path d="M63.8 984.3L52 979" stroke="#e03a4a"/><path d="M63.8 984.3L73.5 978" stroke="#2020a0"/></g><text x="63.5" y="966" font-size="8" font-weight="bold" fill="#4ad85a" font-family="Liberation Sans">y</text><text x="48.5" y="979" font-size="8" font-weight="bold" fill="#e03a4a" font-family="Liberation Sans">x</text><text x="74.5" y="978.5" font-size="8.5" font-weight="bold" fill="#1c1c9a" font-family="Liberation Sans">z</text></g></svg>
</div>
<div class="a" style="left:43px;top:168.5px;width:610px;height:1.5px;background:#16222c;"></div>
<div class="a" style="left:528px;top:173px;width:51px;height:19px;background:rgba(96,118,134,.9);border:1px solid #93a5b1;border-radius:10px"></div>
<div class="t" style="left:536.00px;top:176.84px;font-size:12px;color:#dfe6ea;transform:scaleX(0.8613);transform-origin:0 0;">Persp</div>
<svg class="a" style="left:565px;top:182px;" width="8" height="4.5" viewBox="0 0 8 4.5"><path d="M0 0H8L4 4.5Z" fill="#e8eef2"/></svg>
<div class="a" style="left:586px;top:173px;width:61px;height:19px;background:rgba(96,118,134,.9);border:1px solid #93a5b1;border-radius:10px"></div>
<div class="t" style="left:594.00px;top:176.84px;font-size:12px;color:#dfe6ea;transform:scaleX(0.9191);transform-origin:0 0;">No cam</div>
<svg class="a" style="left:633px;top:182px;" width="8" height="4.5" viewBox="0 0 8 4.5"><path d="M0 0H8L4 4.5Z" fill="#e8eef2"/></svg>
<div class="a" style="left:399px;top:198px;width:242px;height:225.5px;background:rgba(110,134,151,.35);border:1.5px solid #15212e"></div>
<div class="a" style="left:403px;top:202.5px;width:178px;height:21.5px;background:rgba(112,135,152,.25);border:1.8px solid #15212e"></div>
<div class="t" style="left:406.50px;top:208.00px;font-size:13px;color:#e8eef2;transform:scaleX(1.0000);transform-origin:0 0;">*</div>
<svg class="a" style="left:0;top:0" width="1" height="1"><line x1="599.74" y1="213.50" x2="603.70" y2="213.50" stroke="#e6e6e6" stroke-width="2.4"/><line x1="598.79" y1="215.79" x2="601.59" y2="218.59" stroke="#e6e6e6" stroke-width="2.4"/><line x1="596.50" y1="216.74" x2="596.50" y2="220.70" stroke="#e6e6e6" stroke-width="2.4"/><line x1="594.21" y1="215.79" x2="591.41" y2="218.59" stroke="#e6e6e6" stroke-width="2.4"/><line x1="593.26" y1="213.50" x2="589.30" y2="213.50" stroke="#e6e6e6" stroke-width="2.4"/><line x1="594.21" y1="211.21" x2="591.41" y2="208.41" stroke="#e6e6e6" stroke-width="2.4"/><line x1="596.50" y1="210.26" x2="596.50" y2="206.30" stroke="#e6e6e6" stroke-width="2.4"/><line x1="598.79" y1="211.21" x2="601.59" y2="208.41" stroke="#e6e6e6" stroke-width="2.4"/><circle cx="596.5" cy="213.5" r="3.60" fill="none" stroke="#e6e6e6" stroke-width="2"/></svg>
<div class="a" style="left:613.5px;top:202.5px;width:22.5px;height:22.5px;background:#c8922a;border:1px solid #8a6a20"></div>
<svg class="a" style="left:617.5px;top:206.5px;" width="15" height="15" viewBox="0 0 15 15"><path d="M7.5 1L14 7.5L7.5 14L1 7.5Z" fill="#e9b94a" stroke="#f6e2a0" stroke-width=".8"/><path d="M7.5 4.5L10.5 7.5L7.5 10.5L4.5 7.5Z" fill="#fff3c8"/></svg>
<div class="t" style="left:426.95px;top:232.27px;font-size:11.5px;color:#b3c0c9;transform:scaleX(0.9475);transform-origin:0 0;">Group Select Off ('9 or Pad9' to toggle)</div>
<div class="t" style="left:405.50px;top:253.84px;font-size:12px;color:#f2f5f7;transform:scaleX(0.9646);transform-origin:0 0;">/obj/kitbashveingrowth/merge4</div>
<div class="a" style="left:627px;top:248px;width:6px;height:172px;background:rgba(120,140,155,.35);"></div>
<svg class="a" style="left:628.5px;top:313px;" width="5" height="12" viewBox="0 0 5 12"><rect x="0" y="0" width="1.5" height="1.5" fill="#111"/><rect x="0" y="2.6" width="1.5" height="1.5" fill="#111"/><rect x="0" y="5.2" width="1.5" height="1.5" fill="#111"/><rect x="0" y="7.8" width="1.5" height="1.5" fill="#111"/><rect x="0" y="10.4" width="1.5" height="1.5" fill="#111"/><rect x="2.6" y="0" width="1.5" height="1.5" fill="#111"/><rect x="2.6" y="2.6" width="1.5" height="1.5" fill="#111"/><rect x="2.6" y="5.2" width="1.5" height="1.5" fill="#111"/><rect x="2.6" y="7.8" width="1.5" height="1.5" fill="#111"/><rect x="2.6" y="10.4" width="1.5" height="1.5" fill="#111"/></svg>
<div class="a" style="left:688.5px;top:137px;width:1228.5px;height:873px;background:#2e2e2e;"></div>
<div class="a" style="left:688.5px;top:136.5px;width:1228.5px;height:27.5px;background:#2f2f2f;border-top:1px solid #1a1a1a;border-bottom:1.5px solid #161616"></div>
<div class="a" style="left:688.5px;top:137.5px;width:8.5px;height:25px;background:#3a3a3a;border-right:1px solid #1a1a1a"></div>
<svg class="a" style="left:689.5px;top:140px;" width="6" height="6" viewBox="0 0 6 6"><path d="M3 0L6 5H0Z" fill="#0a0a0a"/></svg>
<div class="t" style="left:706.00px;top:144.39px;font-size:12.3px;color:#cdcdcd;transform:scaleX(0.9825);transform-origin:0 0;">Add</div>
<div class="t" style="left:743.00px;top:144.39px;font-size:12.3px;color:#cdcdcd;transform:scaleX(0.9767);transform-origin:0 0;">Edit</div>
<div class="t" style="left:778.00px;top:144.39px;font-size:12.3px;color:#cdcdcd;transform:scaleX(0.9142);transform-origin:0 0;">Go</div>
<div class="t" style="left:808.00px;top:144.39px;font-size:12.3px;color:#cdcdcd;transform:scaleX(0.9835);transform-origin:0 0;">View</div>
<div class="t" style="left:848.70px;top:144.39px;font-size:12.3px;color:#cdcdcd;transform:scaleX(1.0205);transform-origin:0 0;">Tools</div>
<div class="t" style="left:892.50px;top:144.39px;font-size:12.3px;color:#cdcdcd;transform:scaleX(1.0155);transform-origin:0 0;">Layout</div>
<div class="t" style="left:944.50px;top:144.39px;font-size:12.3px;color:#cdcdcd;transform:scaleX(1.0081);transform-origin:0 0;">Help</div>
<svg class="a" style="left:1607px;top:143px;" width="16" height="16" viewBox="0 0 16 16"><path d="M2 2L13.5 14" stroke="#e4e4e4" stroke-width="2.4"/><path d="M13.5 2.5L3 14" stroke="#cfcfcf" stroke-width="2.2"/><circle cx="13" cy="3" r="2.4" fill="none" stroke="#e4e4e4" stroke-width="1.6"/><path d="M1 12L4.5 15.5" stroke="#9a9a9a" stroke-width="3"/></svg>
<svg class="a" style="left:1632px;top:144px;" width="14" height="15" viewBox="0 0 14 15"><path d="M2.5 1V13M2.5 4H11M2.5 8.5H11M2.5 13H11" stroke="#d8d8d8" stroke-width="1.4" fill="none"/><rect x="1" y="0" width="3" height="3" fill="#e8e8e8"/><rect x="10" y="2.8" width="2.6" height="2.6" fill="#e8e8e8"/><rect x="10" y="7.2" width="2.6" height="2.6" fill="#e8e8e8"/><rect x="10" y="11.7" width="2.6" height="2.6" fill="#e8e8e8"/></svg>
<svg class="a" style="left:1656.5px;top:144px;" width="13" height="14" viewBox="0 0 13 14"><rect x="0" y="0" width="13" height="14" fill="#dedede"/><path d="M0 3.5H13M0 7H13M0 10.5H13" stroke="#a8a8a8" stroke-width=".9"/></svg>
<svg class="a" style="left:1696.5px;top:144px;" width="14" height="14" viewBox="0 0 14 14"><rect x="0" y="0" width="14" height="14" fill="#f4f4f4"/><rect x="1.2" y="1.2" width="3.3" height="3.3" fill="#c0261c"/><rect x="5.4" y="1.2" width="3.3" height="3.3" fill="#e88a1c"/><rect x="9.6" y="1.2" width="3.3" height="3.3" fill="#e8d82c"/><rect x="1.2" y="5.4" width="3.3" height="3.3" fill="#2a4cc0"/><rect x="5.4" y="5.4" width="3.3" height="3.3" fill="#2fae3c"/><rect x="9.6" y="5.4" width="3.3" height="3.3" fill="#66a0e8"/><rect x="1.2" y="9.6" width="3.3" height="3.3" fill="#111"/><rect x="5.4" y="9.6" width="3.3" height="3.3" fill="#e8e8e8"/><rect x="9.6" y="9.6" width="3.3" height="3.3" fill="#bcbcbc"/></svg>
<svg class="a" style="left:1720.5px;top:144px;" width="15" height="15" viewBox="0 0 15 15"><rect x=".6" y=".6" width="13.8" height="13.8" fill="#3c3c3c" stroke="#bdbdbd" stroke-width="1"/><rect x="2.6" y="3" width="3.6" height="1.8" fill="#cfcfcf"/><rect x="2.6" y="6.8" width="3.6" height="1.8" fill="#cfcfcf"/><rect x="2.6" y="10.6" width="3.6" height="1.8" fill="#cfcfcf"/><rect x="8.6" y="3" width="3.6" height="1.8" fill="#cfcfcf"/><rect x="8.6" y="6.8" width="3.6" height="1.8" fill="#cfcfcf"/><rect x="8.6" y="10.6" width="3.6" height="1.8" fill="#cfcfcf"/></svg>
<svg class="a" style="left:1761px;top:144px;" width="15" height="15" viewBox="0 0 15 15"><rect x=".6" y=".6" width="13.8" height="13.8" fill="#bdbdbd" stroke="#8a8a8a"/><rect x="2" y="3" width="6.5" height="3.6" fill="#f4f4f4" stroke="#222" stroke-width=".9"/><rect x="6.5" y="8.6" width="6.5" height="3.6" fill="#f4f4f4" stroke="#222" stroke-width=".9"/></svg>
<svg class="a" style="left:1785px;top:143.5px;" width="15" height="15" viewBox="0 0 15 15"><path d="M0.5 0.5H14.5V10L10 14.5H0.5Z" fill="#f2e05a" stroke="#b89a14" stroke-width=".8"/><path d="M2.5 3.5H12.5M2.5 6.2H12.5M2.5 8.9H9" stroke="#4a3a08" stroke-width="1.2"/><path d="M14.5 10H10V14.5Z" fill="#c8aa28"/></svg>
<svg class="a" style="left:1808.5px;top:143px;" width="17" height="17" viewBox="0 0 17 17"><rect x=".5" y=".5" width="13.5" height="13.5" fill="#4aa6e6" stroke="#cfe6f8" stroke-width="1"/><path d="M1 13L5 7L8.5 11L10.5 9L13.5 13Z" fill="#5cbf4a"/><circle cx="4.5" cy="4" r="1.6" fill="#f6e04a"/><circle cx="13" cy="13" r="3.6" fill="#222"/><path d="M13 10.8V15.2M10.8 13H15.2" stroke="#fff" stroke-width="1.3"/></svg>
<svg class="a" style="left:1832.5px;top:143.5px;" width="15" height="14" viewBox="0 0 15 14"><path d="M2 4L4 1H11L13 4V6H2Z" fill="#e8a43a"/><rect x="2.6" y="6" width="9.8" height="7" fill="#d88e2a"/><rect x="5.5" y="7.2" width="4" height="1.8" fill="#8a5612"/><path d="M1 4H14V6.4H1Z" fill="#f0b450"/></svg>
<svg class="a" style="left:1873.5px;top:143.5px;" width="16" height="16" viewBox="0 0 16 16"><circle cx="6.5" cy="6.5" r="4.5" fill="#5a5a5a" stroke="#d8d8d8" stroke-width="1.6"/><path d="M10 10L15 15" stroke="#d8d8d8" stroke-width="2.2"/></svg>
<svg class="a" style="left:1898.5px;top:144px;" width="16" height="14" viewBox="0 0 16 14"><rect x="0" y="0" width="16" height="14" fill="#f2f2f2"/><path d="M1.5 7Q8 1 14.5 7Q8 12 1.5 7Z" fill="#fff" stroke="#222" stroke-width="1"/><circle cx="8.5" cy="6.6" r="2.8" fill="#111"/></svg>
<div class="t" style="left:1316.00px;top:182.03px;font-size:23px;color:#4b4b4b;transform:scaleX(1.0431);transform-origin:0 0;font-weight:bold;">Geometry</div>
<svg class="a" style="left:0;top:0" width="1920" height="1080" viewBox="0 0 1920 1080"><defs><linearGradient id="gl1" gradientUnits="userSpaceOnUse" x1="0" y1="208" x2="0" y2="925"><stop offset="0" stop-color="#5f86bd"/><stop offset="0.08" stop-color="#6d83a3"/><stop offset="0.25" stop-color="#6e6e6e"/><stop offset="0.55" stop-color="#6a6a6a"/><stop offset="0.75" stop-color="#6c82a6"/><stop offset="1" stop-color="#7f9bc6"/></linearGradient><linearGradient id="gl2" gradientUnits="userSpaceOnUse" x1="0" y1="326" x2="0" y2="738"><stop offset="0" stop-color="#5f86bd"/><stop offset="0.04" stop-color="#5f7ea8"/><stop offset="0.2" stop-color="#6b6b6b"/><stop offset="0.55" stop-color="#686868"/><stop offset="0.75" stop-color="#5f7fae"/><stop offset="1" stop-color="#6c94cf"/></linearGradient></defs><defs><radialGradient id="gm4" cx="0.5" cy="0.5" r="0.5"><stop offset="0.6" stop-color="#d9b6f0"/><stop offset="0.85" stop-color="#a674e4"/><stop offset="1" stop-color="#6a70d8" stop-opacity="0.2"/></radialGradient></defs><path d="M810 163 L816.8 209 Q817.5 214.7 823 214.7 L868 214.7 Q872.6 214.7 873.4 210 L885.6 163 Z" fill="#5b3f22" stroke="#d9791a" stroke-width="1.2"/><path d="M845 163 V169 C845 176 836.5 173 836.5 180 V187" fill="none" stroke="#8ea2b8" stroke-width="1.2" /><path d="M845.6 208 C846 218 852 221.5 862 221.5 H1000 C1018 221.5 1026 230 1028 241" fill="none" stroke="#5f86bd" stroke-width="1.3" /><path d="M845.6 208 C846 218 852 221.5 862 221.5 C905 222 960 250 985 288 C1003 316 1011 350 1011 400 V925" fill="none" stroke="url(#gl1)" stroke-width="1.2"/><path d="M857 326 C857 334 862 337.5 870 337.5 H918 C928 337.5 934 342 934 349.5" fill="none" stroke="#5f86bd" stroke-width="1.3" /><path d="M1041.5 263 V281" fill="none" stroke="#5f86bd" stroke-width="1.3" /><path d="M1041.5 301.5 C1041.5 310 1047 313.5 1056 313.5 C1085 313.5 1102.2 330 1102.2 362 V390" fill="none" stroke="#5f86bd" stroke-width="1.3" /><path d="M1218 163 V305" fill="none" stroke="#5f86bd" stroke-width="1.3" /><path d="M1336 163 V305" fill="none" stroke="#5f86bd" stroke-width="1.3" /><path d="M1218.0 326.5C1217.8 327.8 1218.0 331.9 1216.5 334.0C1215.0 336.1 1219.0 337.9 1209.0 339.0C1199.0 340.1 1174.5 338.1 1156.7 340.3C1139.0 342.6 1118.3 346.9 1102.5 352.5C1086.7 358.1 1074.1 366.1 1061.9 374.2C1049.7 382.3 1039.3 391.4 1029.4 401.3C1019.5 411.2 1009.8 422.1 1002.3 433.8C994.8 445.5 989.2 459.1 984.7 471.7C980.2 484.3 977.2 496.5 975.2 509.6C973.2 522.7 973.1 533.1 972.7 550.2C972.3 567.3 972.7 580.7 972.7 612.0C972.7 643.3 972.7 717.0 972.7 738.0" fill="none" stroke="url(#gl2)" stroke-width="1.2"/><path d="M1336.0 326.5C1335.8 327.8 1336.0 332.0 1334.5 334.0C1333.0 336.0 1334.1 337.3 1327.0 338.6C1319.9 339.9 1304.7 339.4 1292.1 341.7C1279.5 344.0 1265.0 347.1 1251.5 352.5C1238.0 357.9 1223.1 366.1 1210.9 374.2C1198.7 382.3 1187.9 391.4 1178.4 401.3C1168.9 411.2 1160.8 423.0 1154.0 433.8C1147.2 444.6 1142.0 454.6 1137.7 466.3C1133.4 478.0 1130.4 492.5 1128.2 504.2C1126.0 515.9 1125.3 518.7 1124.7 536.7C1124.1 554.7 1124.5 578.5 1124.4 612.0C1124.4 645.5 1124.4 717.0 1124.4 738.0" fill="none" stroke="url(#gl2)" stroke-width="1.2"/><path d="M1452.0 322.0C1451.7 323.2 1451.4 327.3 1450.0 329.0C1448.6 330.7 1449.8 331.0 1443.8 332.2C1437.8 333.4 1425.7 333.4 1414.0 336.3C1402.3 339.2 1387.0 343.5 1373.4 349.8C1359.9 356.1 1344.0 365.6 1332.7 374.2C1321.4 382.8 1313.8 391.4 1305.7 401.3C1297.6 411.2 1289.7 423.0 1284.0 433.8C1278.3 444.6 1275.0 454.6 1271.8 466.3C1268.6 478.0 1266.3 492.5 1265.0 504.2C1263.7 515.9 1264.2 518.7 1264.0 536.7C1263.8 554.7 1264.0 578.5 1264.0 612.0C1264.0 645.5 1264.0 717.0 1264.0 738.0" fill="none" stroke="url(#gl2)" stroke-width="1.2"/><path d="M1115.6 412 C1115.6 428 1102.2 420 1102.2 436 V444.5" fill="none" stroke="#5f86bd" stroke-width="1.3" /><path d="M1115.6 466 C1115.6 482 1102.2 474 1102.2 490 V498.5" fill="none" stroke="#5f86bd" stroke-width="1.3" /><path d="M1115.6 518 V556" fill="none" stroke="#5f86bd" stroke-width="1.3" /><path d="M1115.6 578 V602" fill="none" stroke="#5f86bd" stroke-width="1.3" /><path d="M1115.6 624 V648" fill="none" stroke="#5f86bd" stroke-width="1.3" /><path d="M1115.6 669 C1115 678 1111 682.3 1104 682.3 H1045 C1008 683 991 705 991 738" fill="none" stroke="#7f9cc8" stroke-width="1.5" stroke-dasharray="1.6 2.2"/><path d="M1115.6 669 C1116 678 1120 682.3 1128 682.3 H1228 C1266 683 1282.3 705 1282.3 738" fill="none" stroke="#7f9cc8" stroke-width="1.5" stroke-dasharray="1.6 2.2"/><path d="M1128 682.3 C1138 683 1142.5 688 1142.5 698 V738" fill="none" stroke="#7f9cc8" stroke-width="1.5" stroke-dasharray="1.6 2.2"/><path d="M981.7 760 C982 768 986 772.7 995 772.7 H1058 C1098 773 1124.6 800 1124.6 834" fill="none" stroke="#5f86bd" stroke-width="1.3" /><path d="M1133.75 760 V834" fill="none" stroke="#5f86bd" stroke-width="1.3" /><path d="M1273 760 C1273 768 1268 772.7 1260 772.7 H1200 C1165 773 1142.6 800 1142.6 834" fill="none" stroke="#5f86bd" stroke-width="1.3" /><path d="M1134 860.6 C1134 869 1129 873.5 1120 873.5 H1066 C1038 874 1023 892 1023 918" fill="none" stroke="#5f86bd" stroke-width="1.3" /><path d="M822.7 192.5 Q845 187 868 192.5 L868 207.5 Q845 198 822.7 207.5 Z" fill="#e8820c"/><line x1="827.2" y1="193.5" x2="826.2" y2="205" stroke="#c66a06" stroke-width="1.1"/><line x1="831.2" y1="193.5" x2="830.2" y2="205" stroke="#c66a06" stroke-width="1.1"/><line x1="835.7" y1="193.5" x2="834.7" y2="205" stroke="#c66a06" stroke-width="1.1"/><line x1="840.2" y1="193.5" x2="839.2" y2="205" stroke="#c66a06" stroke-width="1.1"/><line x1="852.2" y1="193.5" x2="851.2" y2="205" stroke="#c66a06" stroke-width="1.1"/><line x1="856.7" y1="193.5" x2="855.7" y2="205" stroke="#c66a06" stroke-width="1.1"/><line x1="861.2" y1="193.5" x2="860.2" y2="205" stroke="#c66a06" stroke-width="1.1"/><line x1="865.2" y1="193.5" x2="864.2" y2="205" stroke="#c66a06" stroke-width="1.1"/><circle cx="846" cy="197.5" r="5.6" fill="#3f8fe0"/><path d="M843 194.5 A4 4 0 0 1 849 195 L846 197.5Z" fill="#bfe0ff"/><circle cx="846" cy="197.5" r="5.6" fill="none" stroke="#2a5fa8" stroke-width=".8"/><circle cx="836.5" cy="188.8" r="2.5" fill="#cfd6dc"/><circle cx="854.7" cy="188.8" r="2.5" fill="#cfd6dc"/><circle cx="845.6" cy="208.2" r="2.3" fill="#e2e2e2"/><path d="M1021.5 245.5 H1067 L1063 260 H1017.5 Z" fill="#d2d2d2" stroke="#e6e6e6" stroke-width=".6"/><path d="M1018 261.2 H1062.5" stroke="#bdbdbd" stroke-width="1.6"/><line x1="1026.6" y1="247.5" x2="1023.8" y2="258" stroke="#9a9a9a" stroke-width="1"/><line x1="1030.6" y1="247.5" x2="1027.8" y2="258" stroke="#9a9a9a" stroke-width="1"/><line x1="1035.6" y1="247.5" x2="1032.8" y2="258" stroke="#9a9a9a" stroke-width="1"/><line x1="1053.1" y1="247.5" x2="1050.3" y2="258" stroke="#9a9a9a" stroke-width="1"/><line x1="1057.6" y1="247.5" x2="1054.8" y2="258" stroke="#9a9a9a" stroke-width="1"/><line x1="1062.1" y1="247.5" x2="1059.3" y2="258" stroke="#9a9a9a" stroke-width="1"/><circle cx="1040.5" cy="253.7" r="2.6" fill="none" stroke="#666" stroke-width="1.2"/><path d="M1041.5 248.7h4" stroke="#d08030" stroke-width="1.5"/><circle cx="1028" cy="241.3" r="2.2" fill="#c6c6c6"/><circle cx="1037" cy="241.3" r="2.2" fill="#c6c6c6"/><circle cx="1046" cy="241.3" r="2.2" fill="#c6c6c6"/><circle cx="1055" cy="241.3" r="2.2" fill="#c6c6c6"/><circle cx="1041.5" cy="264.5" r="2.3" fill="#c6c6c6"/><rect x="1018.5" y="283" width="46" height="14.5" rx="2" fill="#d2d2d2"/><rect x="1019.5" y="283.3" width="44" height="1" fill="rgba(255,255,255,.35)"/><line x1="1024.8" y1="285.2" x2="1023.2" y2="295.3" stroke="#9e9e9e" stroke-width="1"/><line x1="1028.8" y1="285.2" x2="1027.2" y2="295.3" stroke="#9e9e9e" stroke-width="1"/><line x1="1033.8" y1="285.2" x2="1032.2" y2="295.3" stroke="#9e9e9e" stroke-width="1"/><line x1="1051.3" y1="285.2" x2="1049.7" y2="295.3" stroke="#9e9e9e" stroke-width="1"/><line x1="1055.8" y1="285.2" x2="1054.2" y2="295.3" stroke="#9e9e9e" stroke-width="1"/><line x1="1060.3" y1="285.2" x2="1058.7" y2="295.3" stroke="#9e9e9e" stroke-width="1"/><path d="M1037.5 286.25h8v8h-8z" fill="#d8b88a" stroke="#a8885a" stroke-width=".7"/><path d="M1040 287.25v6M1043 287.25v6" stroke="#8a6a3a" stroke-width=".8"/><circle cx="1041.5" cy="279.4" r="2.2" fill="#c6c6c6"/><circle cx="1041.5" cy="301.1" r="2.4" fill="#c6c6c6"/><rect x="834" y="308" width="46" height="14.5" rx="2" fill="#d2d2d2"/><rect x="835" y="308.3" width="44" height="1" fill="rgba(255,255,255,.35)"/><line x1="840.3" y1="310.2" x2="838.7" y2="320.3" stroke="#9e9e9e" stroke-width="1"/><line x1="844.3" y1="310.2" x2="842.7" y2="320.3" stroke="#9e9e9e" stroke-width="1"/><line x1="849.3" y1="310.2" x2="847.7" y2="320.3" stroke="#9e9e9e" stroke-width="1"/><line x1="866.8" y1="310.2" x2="865.2" y2="320.3" stroke="#9e9e9e" stroke-width="1"/><line x1="871.3" y1="310.2" x2="869.7" y2="320.3" stroke="#9e9e9e" stroke-width="1"/><line x1="875.8" y1="310.2" x2="874.2" y2="320.3" stroke="#9e9e9e" stroke-width="1"/><circle cx="857" cy="315.25" r="5" fill="#9aa3ad"/><circle cx="855.8" cy="313.75" r="2.4" fill="#e8eef5"/><circle cx="857" cy="304.4" r="2.2" fill="#c6c6c6"/><circle cx="857" cy="326.1" r="2.4" fill="#c6c6c6"/><rect x="911" y="353" width="46" height="14.5" rx="2" fill="#d2d2d2"/><rect x="912" y="353.3" width="44" height="1" fill="rgba(255,255,255,.35)"/><line x1="917.3" y1="355.2" x2="915.7" y2="365.3" stroke="#9e9e9e" stroke-width="1"/><line x1="921.3" y1="355.2" x2="919.7" y2="365.3" stroke="#9e9e9e" stroke-width="1"/><line x1="926.3" y1="355.2" x2="924.7" y2="365.3" stroke="#9e9e9e" stroke-width="1"/><line x1="943.8" y1="355.2" x2="942.2" y2="365.3" stroke="#9e9e9e" stroke-width="1"/><line x1="948.3" y1="355.2" x2="946.7" y2="365.3" stroke="#9e9e9e" stroke-width="1"/><line x1="952.8" y1="355.2" x2="951.2" y2="365.3" stroke="#9e9e9e" stroke-width="1"/><path d="M929 360.25l4 -2l3 2l-3 2z M934 357.75l3 -1.5l2 2l-3 1.5z" fill="#5a86c4"/><circle cx="934" cy="349.4" r="2.2" fill="#c6c6c6"/><circle cx="934" cy="371.1" r="2.4" fill="#c6c6c6"/><rect x="1195" y="308" width="46" height="14.5" rx="2" fill="#d2d2d2"/><rect x="1196" y="308.3" width="44" height="1" fill="rgba(255,255,255,.35)"/><line x1="1201.3" y1="310.2" x2="1199.7" y2="320.3" stroke="#9e9e9e" stroke-width="1"/><line x1="1205.3" y1="310.2" x2="1203.7" y2="320.3" stroke="#9e9e9e" stroke-width="1"/><line x1="1210.3" y1="310.2" x2="1208.7" y2="320.3" stroke="#9e9e9e" stroke-width="1"/><line x1="1227.8" y1="310.2" x2="1226.2" y2="320.3" stroke="#9e9e9e" stroke-width="1"/><line x1="1232.3" y1="310.2" x2="1230.7" y2="320.3" stroke="#9e9e9e" stroke-width="1"/><line x1="1236.8" y1="310.2" x2="1235.2" y2="320.3" stroke="#9e9e9e" stroke-width="1"/><path d="M1212 318.25l2 -6l2 3l2 -5l2 5l2 -3l2 6z" fill="#e07a28"/><rect x="1212.5" y="318.25" width="11" height="2" fill="#a85a1c"/><circle cx="1218" cy="304.4" r="2.2" fill="#c6c6c6"/><circle cx="1218" cy="326.1" r="2.4" fill="#c6c6c6"/><rect x="1313" y="308" width="46" height="14.5" rx="2" fill="#d2d2d2"/><rect x="1314" y="308.3" width="44" height="1" fill="rgba(255,255,255,.35)"/><line x1="1319.3" y1="310.2" x2="1317.7" y2="320.3" stroke="#9e9e9e" stroke-width="1"/><line x1="1323.3" y1="310.2" x2="1321.7" y2="320.3" stroke="#9e9e9e" stroke-width="1"/><line x1="1328.3" y1="310.2" x2="1326.7" y2="320.3" stroke="#9e9e9e" stroke-width="1"/><line x1="1345.8" y1="310.2" x2="1344.2" y2="320.3" stroke="#9e9e9e" stroke-width="1"/><line x1="1350.3" y1="310.2" x2="1348.7" y2="320.3" stroke="#9e9e9e" stroke-width="1"/><line x1="1354.8" y1="310.2" x2="1353.2" y2="320.3" stroke="#9e9e9e" stroke-width="1"/><path d="M1330 318.25l2 -6l2 3l2 -5l2 5l2 -3l2 6z" fill="#e07a28"/><rect x="1330.5" y="318.25" width="11" height="2" fill="#a85a1c"/><circle cx="1336" cy="304.4" r="2.2" fill="#c6c6c6"/><circle cx="1336" cy="326.1" r="2.4" fill="#c6c6c6"/><rect x="1427.5" y="304" width="20" height="14.5" rx="2" fill="#d2d2d2"/><line x1="1434" y1="306" x2="1432.5" y2="316.5" stroke="#9e9e9e"/><line x1="1438.5" y1="306" x2="1437" y2="316.5" stroke="#9e9e9e"/><rect x="1092.7" y="394" width="46" height="14.5" rx="2" fill="#d2d2d2"/><rect x="1093.7" y="394.3" width="44" height="1" fill="rgba(255,255,255,.35)"/><line x1="1099" y1="396.2" x2="1097.4" y2="406.3" stroke="#9e9e9e" stroke-width="1"/><line x1="1103" y1="396.2" x2="1101.4" y2="406.3" stroke="#9e9e9e" stroke-width="1"/><line x1="1108" y1="396.2" x2="1106.4" y2="406.3" stroke="#9e9e9e" stroke-width="1"/><line x1="1125.5" y1="396.2" x2="1123.9" y2="406.3" stroke="#9e9e9e" stroke-width="1"/><line x1="1130" y1="396.2" x2="1128.4" y2="406.3" stroke="#9e9e9e" stroke-width="1"/><line x1="1134.5" y1="396.2" x2="1132.9" y2="406.3" stroke="#9e9e9e" stroke-width="1"/><ellipse cx="1115.2" cy="399.75" rx="4.6" ry="3.8" fill="#c41e24"/><circle cx="1117.7" cy="404.25" r="2.3" fill="#f6ecd0"/><circle cx="1102.2" cy="390.4" r="2.2" fill="#c6c6c6"/><circle cx="1111.2" cy="390.4" r="2.2" fill="#c6c6c6"/><circle cx="1120.2" cy="390.4" r="2.2" fill="#c6c6c6"/><circle cx="1129.2" cy="390.4" r="2.2" fill="#c6c6c6"/><circle cx="1115.7" cy="412.1" r="2.4" fill="#c6c6c6"/><rect x="1092.7" y="448" width="46" height="14.5" rx="2" fill="#d2d2d2"/><rect x="1093.7" y="448.3" width="44" height="1" fill="rgba(255,255,255,.35)"/><line x1="1099" y1="450.2" x2="1097.4" y2="460.3" stroke="#9e9e9e" stroke-width="1"/><line x1="1103" y1="450.2" x2="1101.4" y2="460.3" stroke="#9e9e9e" stroke-width="1"/><line x1="1108" y1="450.2" x2="1106.4" y2="460.3" stroke="#9e9e9e" stroke-width="1"/><line x1="1125.5" y1="450.2" x2="1123.9" y2="460.3" stroke="#9e9e9e" stroke-width="1"/><line x1="1130" y1="450.2" x2="1128.4" y2="460.3" stroke="#9e9e9e" stroke-width="1"/><line x1="1134.5" y1="450.2" x2="1132.9" y2="460.3" stroke="#9e9e9e" stroke-width="1"/><ellipse cx="1115.2" cy="453.75" rx="4.6" ry="3.8" fill="#c41e24"/><circle cx="1117.7" cy="458.25" r="2.3" fill="#f6ecd0"/><circle cx="1102.2" cy="444.4" r="2.2" fill="#c6c6c6"/><circle cx="1111.2" cy="444.4" r="2.2" fill="#c6c6c6"/><circle cx="1120.2" cy="444.4" r="2.2" fill="#c6c6c6"/><circle cx="1129.2" cy="444.4" r="2.2" fill="#c6c6c6"/><circle cx="1115.7" cy="466.1" r="2.4" fill="#c6c6c6"/><rect x="1092.7" y="500" width="46" height="14.5" rx="2" fill="#d2d2d2"/><rect x="1093.7" y="500.3" width="44" height="1" fill="rgba(255,255,255,.35)"/><line x1="1099" y1="502.2" x2="1097.4" y2="512.3" stroke="#9e9e9e" stroke-width="1"/><line x1="1103" y1="502.2" x2="1101.4" y2="512.3" stroke="#9e9e9e" stroke-width="1"/><line x1="1108" y1="502.2" x2="1106.4" y2="512.3" stroke="#9e9e9e" stroke-width="1"/><line x1="1125.5" y1="502.2" x2="1123.9" y2="512.3" stroke="#9e9e9e" stroke-width="1"/><line x1="1130" y1="502.2" x2="1128.4" y2="512.3" stroke="#9e9e9e" stroke-width="1"/><line x1="1134.5" y1="502.2" x2="1132.9" y2="512.3" stroke="#9e9e9e" stroke-width="1"/><ellipse cx="1115.2" cy="505.75" rx="4.6" ry="3.8" fill="#c41e24"/><circle cx="1117.7" cy="510.25" r="2.3" fill="#f6ecd0"/><circle cx="1102.2" cy="496.4" r="2.2" fill="#c6c6c6"/><circle cx="1111.2" cy="496.4" r="2.2" fill="#c6c6c6"/><circle cx="1120.2" cy="496.4" r="2.2" fill="#c6c6c6"/><circle cx="1129.2" cy="496.4" r="2.2" fill="#c6c6c6"/><circle cx="1115.7" cy="518.1" r="2.4" fill="#c6c6c6"/><rect x="1092.7" y="560" width="46" height="14.5" rx="2" fill="#d2d2d2"/><rect x="1093.7" y="560.3" width="44" height="1" fill="rgba(255,255,255,.35)"/><line x1="1099" y1="562.2" x2="1097.4" y2="572.3" stroke="#9e9e9e" stroke-width="1"/><line x1="1103" y1="562.2" x2="1101.4" y2="572.3" stroke="#9e9e9e" stroke-width="1"/><line x1="1108" y1="562.2" x2="1106.4" y2="572.3" stroke="#9e9e9e" stroke-width="1"/><line x1="1125.5" y1="562.2" x2="1123.9" y2="572.3" stroke="#9e9e9e" stroke-width="1"/><line x1="1130" y1="562.2" x2="1128.4" y2="572.3" stroke="#9e9e9e" stroke-width="1"/><line x1="1134.5" y1="562.2" x2="1132.9" y2="572.3" stroke="#9e9e9e" stroke-width="1"/><circle cx="1114.2" cy="566.25" r="3.6" fill="#e8c08a" stroke="#c07830" stroke-width="1"/><circle cx="1117.7" cy="569.25" r="2.6" fill="#f1d6a6" stroke="#c07830" stroke-width=".8"/><circle cx="1115.7" cy="556.4" r="2.2" fill="#c6c6c6"/><circle cx="1115.7" cy="578.1" r="2.4" fill="#c6c6c6"/><rect x="1092.7" y="606" width="46" height="14.5" rx="2" fill="#d2d2d2"/><rect x="1093.7" y="606.3" width="44" height="1" fill="rgba(255,255,255,.35)"/><line x1="1099" y1="608.2" x2="1097.4" y2="618.3" stroke="#9e9e9e" stroke-width="1"/><line x1="1103" y1="608.2" x2="1101.4" y2="618.3" stroke="#9e9e9e" stroke-width="1"/><line x1="1108" y1="608.2" x2="1106.4" y2="618.3" stroke="#9e9e9e" stroke-width="1"/><line x1="1125.5" y1="608.2" x2="1123.9" y2="618.3" stroke="#9e9e9e" stroke-width="1"/><line x1="1130" y1="608.2" x2="1128.4" y2="618.3" stroke="#9e9e9e" stroke-width="1"/><line x1="1134.5" y1="608.2" x2="1132.9" y2="618.3" stroke="#9e9e9e" stroke-width="1"/><circle cx="1114.2" cy="612.25" r="3.6" fill="#e8c08a" stroke="#c07830" stroke-width="1"/><circle cx="1117.7" cy="615.25" r="2.6" fill="#f1d6a6" stroke="#c07830" stroke-width=".8"/><circle cx="1115.7" cy="602.4" r="2.2" fill="#c6c6c6"/><circle cx="1115.7" cy="624.1" r="2.4" fill="#c6c6c6"/><rect x="1092.7" y="651.5" width="46" height="14.5" rx="2" fill="#d2d2d2"/><rect x="1093.7" y="651.8" width="44" height="1" fill="rgba(255,255,255,.35)"/><line x1="1099" y1="653.7" x2="1097.4" y2="663.8" stroke="#9e9e9e" stroke-width="1"/><line x1="1103" y1="653.7" x2="1101.4" y2="663.8" stroke="#9e9e9e" stroke-width="1"/><line x1="1108" y1="653.7" x2="1106.4" y2="663.8" stroke="#9e9e9e" stroke-width="1"/><line x1="1125.5" y1="653.7" x2="1123.9" y2="663.8" stroke="#9e9e9e" stroke-width="1"/><line x1="1130" y1="653.7" x2="1128.4" y2="663.8" stroke="#9e9e9e" stroke-width="1"/><line x1="1134.5" y1="653.7" x2="1132.9" y2="663.8" stroke="#9e9e9e" stroke-width="1"/><circle cx="1114.2" cy="657.75" r="3.6" fill="#e8c08a" stroke="#c07830" stroke-width="1"/><circle cx="1117.7" cy="660.75" r="2.6" fill="#f1d6a6" stroke="#c07830" stroke-width=".8"/><circle cx="1115.7" cy="647.9" r="2.2" fill="#c6c6c6"/><circle cx="1115.7" cy="669.6" r="2.4" fill="#c6c6c6"/><rect x="958.3" y="741.7" width="46" height="15" rx="2" fill="#f3a21d"/><rect x="959.3" y="742" width="44" height="1" fill="rgba(255,255,255,.35)"/><line x1="964.6" y1="743.9" x2="963" y2="754.5" stroke="#c47a08" stroke-width="1"/><line x1="968.6" y1="743.9" x2="967" y2="754.5" stroke="#c47a08" stroke-width="1"/><line x1="973.6" y1="743.9" x2="972" y2="754.5" stroke="#c47a08" stroke-width="1"/><line x1="991.1" y1="743.9" x2="989.5" y2="754.5" stroke="#c47a08" stroke-width="1"/><line x1="995.6" y1="743.9" x2="994" y2="754.5" stroke="#c47a08" stroke-width="1"/><line x1="1000.1" y1="743.9" x2="998.5" y2="754.5" stroke="#c47a08" stroke-width="1"/><circle cx="981.3" cy="749.2" r="4.2" fill="#f0b660" stroke="#d08a28" stroke-width=".8"/><circle cx="981.3" cy="749.2" r="1.6" fill="#e59a3a"/><circle cx="972.6" cy="738.1" r="2.2" fill="#c6c6c6"/><circle cx="990.9" cy="738.1" r="2.2" fill="#c6c6c6"/><circle cx="981.3" cy="760.3" r="2.4" fill="#c6c6c6"/><rect x="1110.4" y="741.7" width="46" height="15" rx="2" fill="#f3a21d"/><rect x="1111.4" y="742" width="44" height="1" fill="rgba(255,255,255,.35)"/><line x1="1116.7" y1="743.9" x2="1115.1" y2="754.5" stroke="#c47a08" stroke-width="1"/><line x1="1120.7" y1="743.9" x2="1119.1" y2="754.5" stroke="#c47a08" stroke-width="1"/><line x1="1125.7" y1="743.9" x2="1124.1" y2="754.5" stroke="#c47a08" stroke-width="1"/><line x1="1143.2" y1="743.9" x2="1141.6" y2="754.5" stroke="#c47a08" stroke-width="1"/><line x1="1147.7" y1="743.9" x2="1146.1" y2="754.5" stroke="#c47a08" stroke-width="1"/><line x1="1152.2" y1="743.9" x2="1150.6" y2="754.5" stroke="#c47a08" stroke-width="1"/><circle cx="1133.4" cy="749.2" r="4.2" fill="#f0b660" stroke="#d08a28" stroke-width=".8"/><circle cx="1133.4" cy="749.2" r="1.6" fill="#e59a3a"/><circle cx="1124.7" cy="738.1" r="2.2" fill="#c6c6c6"/><circle cx="1143" cy="738.1" r="2.2" fill="#c6c6c6"/><circle cx="1133.4" cy="760.3" r="2.4" fill="#c6c6c6"/><rect x="1249.4" y="741.7" width="46" height="15" rx="2" fill="#f3a21d"/><rect x="1250.4" y="742" width="44" height="1" fill="rgba(255,255,255,.35)"/><line x1="1255.7" y1="743.9" x2="1254.1" y2="754.5" stroke="#c47a08" stroke-width="1"/><line x1="1259.7" y1="743.9" x2="1258.1" y2="754.5" stroke="#c47a08" stroke-width="1"/><line x1="1264.7" y1="743.9" x2="1263.1" y2="754.5" stroke="#c47a08" stroke-width="1"/><line x1="1282.2" y1="743.9" x2="1280.6" y2="754.5" stroke="#c47a08" stroke-width="1"/><line x1="1286.7" y1="743.9" x2="1285.1" y2="754.5" stroke="#c47a08" stroke-width="1"/><line x1="1291.2" y1="743.9" x2="1289.6" y2="754.5" stroke="#c47a08" stroke-width="1"/><circle cx="1272.4" cy="749.2" r="4.2" fill="#f0b660" stroke="#d08a28" stroke-width=".8"/><circle cx="1272.4" cy="749.2" r="1.6" fill="#e59a3a"/><circle cx="1263.7" cy="738.1" r="2.2" fill="#c6c6c6"/><circle cx="1282" cy="738.1" r="2.2" fill="#c6c6c6"/><circle cx="1272.4" cy="760.3" r="2.4" fill="#c6c6c6"/><rect x="1116" y="834" width="36" height="6" rx="3" fill="#c4c4c4"/><rect x="1110.8" y="840.4" width="46" height="15.2" rx="7.5" fill="#d6d6d6"/><line x1="1118.6" y1="843" x2="1117" y2="853.5" stroke="#9e9e9e"/><line x1="1122.6" y1="843" x2="1121" y2="853.5" stroke="#9e9e9e"/><line x1="1127.6" y1="843" x2="1126" y2="853.5" stroke="#9e9e9e"/><line x1="1142.6" y1="843" x2="1141" y2="853.5" stroke="#9e9e9e"/><line x1="1147.1" y1="843" x2="1145.5" y2="853.5" stroke="#9e9e9e"/><line x1="1151.6" y1="843" x2="1150" y2="853.5" stroke="#9e9e9e"/><path d="M1132.8 845l5 3l-5 3z" fill="#a04a58"/><path d="M1128.8 845l3 1.5M1128.8 851l3 -1.5" stroke="#7a6a72" stroke-width="1.2"/><circle cx="1133.75" cy="860.4" r="2.4" fill="#c6c6c6"/><circle cx="1015.6" cy="940" r="25.8" fill="#4a6fc4"/><ellipse cx="1015.6" cy="941" rx="23.5" ry="15" fill="url(#gm4)"/><rect x="997.5" y="925.8" width="36.2" height="6" rx="3" fill="#cfc6d2"/><rect x="992.5" y="931.5" width="47" height="17" rx="8.5" fill="none" stroke="#f0cdea" stroke-width="2.2"/><rect x="993.5" y="932.5" width="45" height="15" rx="7.5" fill="#e2e2e2" stroke="#101010" stroke-width="1.5"/><line x1="1000.8" y1="935" x2="999.2" y2="945.5" stroke="#aaa"/><line x1="1005.3" y1="935" x2="1003.7" y2="945.5" stroke="#aaa"/><line x1="1024.8" y1="935" x2="1023.2" y2="945.5" stroke="#aaa"/><path d="M1031.8 934.6 H1035 Q1037 940 1035 945.4 H1031.8 Z" fill="#27a3f2"/><path d="M1015 937l5 3l-5 3z" fill="#a04a58"/><path d="M1011 937l3 1.5M1011 943l3 -1.5" stroke="#7a6a72" stroke-width="1.2"/><circle cx="1015.6" cy="952" r="1.6" fill="#e8d8ff"/><circle cx="1047.6" cy="949.8" r="3.6" fill="#d9a514" stroke="#7a5a08" stroke-width=".8"/><circle cx="1047.6" cy="949.8" r="1.2" fill="#7a5a08"/></svg>
<div class="t" style="left:872.50px;top:183.44px;font-size:10px;color:#606060;transform:scaleX(0.9450);transform-origin:0 0;">Block End</div>
<div class="t" style="left:872.50px;top:193.94px;font-size:10px;color:#f0f0f0;transform:scaleX(0.9346);transform-origin:0 0;">repeat_end1</div>
<div class="t" style="left:872.50px;top:208.53px;font-size:10px;color:#6f9ad8;transform:scaleX(0.7809);transform-origin:0 0;">Feedback : 30</div>
<div class="t" style="left:1070.00px;top:236.44px;font-size:10px;color:#4a4a4a;transform:scaleX(0.9450);transform-origin:0 0;">Attribute VOP</div>
<div class="t" style="left:1070.00px;top:246.94px;font-size:10px;color:#cdcdcd;transform:scaleX(0.9450);transform-origin:0 0;">create_myrnd</div>
<div class="t" style="left:1068.00px;top:285.24px;font-size:10px;color:#cdcdcd;transform:scaleX(0.9450);transform-origin:0 0;">grouprange1</div>
<div class="t" style="left:1068.00px;top:300.44px;font-size:10px;color:#4f7fc4;transform:scaleX(0.9450);transform-origin:0 0;">clone</div>
<div class="t" style="left:884.50px;top:309.94px;font-size:10px;color:#cdcdcd;transform:scaleX(0.9450);transform-origin:0 0;">sphere1</div>
<div class="t" style="left:961.00px;top:354.94px;font-size:10px;color:#cdcdcd;transform:scaleX(0.9450);transform-origin:0 0;">transform5</div>
<div class="t" style="left:1245.00px;top:309.94px;font-size:10px;color:#cdcdcd;transform:scaleX(0.9450);transform-origin:0 0;">blast5</div>
<div class="t" style="left:1245.00px;top:325.94px;font-size:10px;color:#4f7fc4;transform:scaleX(0.9450);transform-origin:0 0;">not: 0</div>
<div class="t" style="left:1363.00px;top:309.94px;font-size:10px;color:#cdcdcd;transform:scaleX(0.9450);transform-origin:0 0;">blast6</div>
<div class="t" style="left:1363.00px;top:325.94px;font-size:10px;color:#4f7fc4;transform:scaleX(0.9450);transform-origin:0 0;">not: 1</div>
<div class="t" style="left:1142.70px;top:395.94px;font-size:10px;color:#cdcdcd;transform:scaleX(0.9244);transform-origin:0 0;">groupexpression1</div>
<svg class="a" style="left:1145.5px;top:409px;" width="5" height="6" viewBox="0 0 5 6"><rect x="0" y="2.5" width="5" height="3.5" fill="#7a7a7a"/><path d="M1 2.5V1.5A1.5 1.5 0 0 1 4 1.5V2.5" stroke="#7a7a7a" fill="none"/></svg>
<div class="t" style="left:1142.50px;top:417.44px;font-size:10px;color:#4f7fc4;transform:scaleX(0.9450);transform-origin:0 0;">a</div>
<div class="t" style="left:1142.70px;top:449.94px;font-size:10px;color:#cdcdcd;transform:scaleX(0.9244);transform-origin:0 0;">groupexpression2</div>
<svg class="a" style="left:1145.5px;top:463px;" width="5" height="6" viewBox="0 0 5 6"><rect x="0" y="2.5" width="5" height="3.5" fill="#7a7a7a"/><path d="M1 2.5V1.5A1.5 1.5 0 0 1 4 1.5V2.5" stroke="#7a7a7a" fill="none"/></svg>
<div class="t" style="left:1142.50px;top:471.44px;font-size:10px;color:#4f7fc4;transform:scaleX(0.9450);transform-origin:0 0;">b</div>
<div class="t" style="left:1142.70px;top:501.94px;font-size:10px;color:#cdcdcd;transform:scaleX(0.9244);transform-origin:0 0;">groupexpression3</div>
<svg class="a" style="left:1145.5px;top:515px;" width="5" height="6" viewBox="0 0 5 6"><rect x="0" y="2.5" width="5" height="3.5" fill="#7a7a7a"/><path d="M1 2.5V1.5A1.5 1.5 0 0 1 4 1.5V2.5" stroke="#7a7a7a" fill="none"/></svg>
<div class="t" style="left:1142.50px;top:523.43px;font-size:10px;color:#4f7fc4;transform:scaleX(0.9450);transform-origin:0 0;">c</div>
<div class="t" style="left:1142.50px;top:561.93px;font-size:10px;color:#cdcdcd;transform:scaleX(0.9450);transform-origin:0 0;">groupcombine1</div>
<div class="t" style="left:1142.50px;top:577.43px;font-size:10px;color:#4f7fc4;transform:scaleX(0.9450);transform-origin:0 0;">a</div>
<div class="t" style="left:1142.50px;top:607.93px;font-size:10px;color:#cdcdcd;transform:scaleX(0.9450);transform-origin:0 0;">groupcombine2</div>
<div class="t" style="left:1142.50px;top:623.43px;font-size:10px;color:#4f7fc4;transform:scaleX(0.9450);transform-origin:0 0;">b</div>
<div class="t" style="left:1142.50px;top:653.23px;font-size:10px;color:#cdcdcd;transform:scaleX(0.9450);transform-origin:0 0;">groupcombine3</div>
<div class="t" style="left:1142.50px;top:668.73px;font-size:10px;color:#4f7fc4;transform:scaleX(0.9450);transform-origin:0 0;">c</div>
<div class="t" style="left:1008.80px;top:743.93px;font-size:10px;color:#cdcdcd;transform:scaleX(0.9750);transform-origin:0 0;">copytopoints_a</div>
<div class="t" style="left:1160.30px;top:743.93px;font-size:10px;color:#cdcdcd;transform:scaleX(0.9810);transform-origin:0 0;">copytopoints_b</div>
<div class="t" style="left:1300.00px;top:743.93px;font-size:10px;color:#cdcdcd;transform:scaleX(0.9742);transform-origin:0 0;">copytopoints_c</div>
<div class="t" style="left:1161.30px;top:842.93px;font-size:10px;color:#cdcdcd;transform:scaleX(0.9450);transform-origin:0 0;">merge3</div>
<div class="t" style="left:1043.50px;top:934.93px;font-size:10px;color:#cdcdcd;transform:scaleX(0.9142);transform-origin:0 0;">merge4</div>
<div class="a" style="left:1443.5px;top:164px;width:473.5px;height:434px;background:#3b3b3b;border-left:1px solid #2a2a2a"></div>
<div class="a" style="left:1443.5px;top:164px;width:473.5px;height:1.2px;background:#1a1a1a;"></div>
<svg class="a" style="left:1451px;top:169px;" width="17" height="17" viewBox="0 0 17 17"><path d="M1 2H8L11 8L8 14H1L4 8Z" fill="#c8c8c8"/><path d="M3 3.5H7M3 12.5H7" stroke="#b03a3a" stroke-width="1.6"/><path d="M9 6H15V10H9Z" fill="#e4e4e4"/><path d="M12 15H17L14.5 18Z" fill="#8a8a8a"/></svg>
<div class="t" style="left:1471.00px;top:173.67px;font-size:11.5px;color:#dedede;transform:scaleX(0.9595);transform-origin:0 0;font-weight:bold;">Merge</div>
<div class="a" style="left:1508px;top:168.6px;width:288px;height:21px;background:#141414;border-top:1px solid #0a0a0a"></div>
<div class="t" style="left:1511.00px;top:173.84px;font-size:12px;color:#e2e2e2;transform:scaleX(0.9721);transform-origin:0 0;font-family:'Liberation Mono',monospace;">merge4</div>
<svg class="a" style="left:0;top:0" width="1" height="1"><line x1="1810.55" y1="177.60" x2="1814.40" y2="177.60" stroke="#e2e2e2" stroke-width="2.4"/><line x1="1809.63" y1="179.83" x2="1812.35" y2="182.55" stroke="#e2e2e2" stroke-width="2.4"/><line x1="1807.40" y1="180.75" x2="1807.40" y2="184.60" stroke="#e2e2e2" stroke-width="2.4"/><line x1="1805.17" y1="179.83" x2="1802.45" y2="182.55" stroke="#e2e2e2" stroke-width="2.4"/><line x1="1804.25" y1="177.60" x2="1800.40" y2="177.60" stroke="#e2e2e2" stroke-width="2.4"/><line x1="1805.17" y1="175.37" x2="1802.45" y2="172.65" stroke="#e2e2e2" stroke-width="2.4"/><line x1="1807.40" y1="174.45" x2="1807.40" y2="170.60" stroke="#e2e2e2" stroke-width="2.4"/><line x1="1809.63" y1="175.37" x2="1812.35" y2="172.65" stroke="#e2e2e2" stroke-width="2.4"/><circle cx="1807.4" cy="177.6" r="3.50" fill="none" stroke="#e2e2e2" stroke-width="2"/></svg>
<svg class="a" style="left:1811px;top:184.5px;" width="7" height="4" viewBox="0 0 7 4"><path d="M0 0H7L3.5 4Z" fill="#7a7a7a"/></svg>
<div class="t" style="left:1825.50px;top:169.39px;font-size:17.5px;color:#14306a;transform:scaleX(0.9500);transform-origin:0 0;font-weight:bold;font-style:italic;text-shadow:0 0 1px #fff,1px 1px 0 #e8eef8,-1px -1px 0 #e8eef8,1px -1px 0 #e8eef8,-1px 1px 0 #e8eef8;">H</div>
<svg class="a" style="left:1835px;top:184.5px;" width="7" height="4" viewBox="0 0 7 4"><path d="M0 0H7L3.5 4Z" fill="#7a7a7a"/></svg>
<svg class="a" style="left:1848px;top:170.5px;" width="16" height="16" viewBox="0 0 16 16"><circle cx="6.5" cy="6.5" r="4.5" fill="#5a5a5a" stroke="#d8d8d8" stroke-width="1.6"/><path d="M10 10L15 15" stroke="#d8d8d8" stroke-width="2.2"/></svg>
<svg class="a" style="left:1872.5px;top:170.2px;" width="15" height="15" viewBox="0 0 15 15"><circle cx="7.5" cy="7.5" r="6.4" fill="none" stroke="#d8d8d8" stroke-width="1.4"/></svg>
<div class="t" style="left:1878.47px;top:172.69px;font-size:11px;color:#ececec;transform:scaleX(1.0000);transform-origin:0 0;font-weight:bold;font-style:italic;">i</div>
<svg class="a" style="left:1896.5px;top:170.2px;" width="15" height="15" viewBox="0 0 15 15"><circle cx="7.5" cy="7.5" r="6.4" fill="none" stroke="#d8d8d8" stroke-width="1.4"/></svg>
<div class="t" style="left:1900.64px;top:172.69px;font-size:11px;color:#ececec;transform:scaleX(1.0000);transform-origin:0 0;font-weight:bold;">?</div>
<div class="a" style="left:1447px;top:195.5px;width:454px;height:118px;background:#262626;border:1px solid #1a1a1a"></div>
<div class="a" style="left:1447px;top:195.5px;width:454px;height:16.5px;background:linear-gradient(#3a3a3a,#2f2f2f);border:1px solid #1a1a1a"></div>
<div class="a" style="left:1463px;top:195.5px;width:1px;height:16.5px;background:#161616;"></div>
<div class="a" style="left:1883.5px;top:195.5px;width:1px;height:16.5px;background:#161616;"></div>
<div class="t" style="left:1467.00px;top:199.07px;font-size:11.5px;color:#cfcfcf;transform:scaleX(0.9737);transform-origin:0 0;">Input Operators (Drag/Drop to reorder)</div>
<div class="a" style="left:1448px;top:212px;width:452px;height:17px;background:linear-gradient(#3c3c3c,#343434);"></div>
<div class="a" style="left:1447.5px;top:212px;width:16px;height:16.5px;background:#34507c;border:1px solid #8ea6c8"></div>
<svg class="a" style="left:1449.5px;top:214px;" width="12" height="12" viewBox="0 0 12 12"><circle cx="6" cy="6" r="5.4" fill="#4f8be0"/><path d="M6 2.4L9.4 6.2H7.2V9.6H4.8V6.2H2.6Z" fill="#e8f2ff"/></svg>
<div class="t" style="left:1467.00px;top:215.67px;font-size:11.5px;color:#d6d6d6;transform:scaleX(0.9676);transform-origin:0 0;">repeat_end1</div>
<div class="a" style="left:1884px;top:212px;width:16.5px;height:16.5px;background:#4a3a3a;border:1px solid #b8b8b8"></div>
<svg class="a" style="left:1886px;top:214px;" width="12" height="12" viewBox="0 0 12 12"><circle cx="6" cy="6" r="5.6" fill="#f0565a"/><rect x="2.6" y="4.9" width="6.8" height="2.3" fill="#5a0c10"/></svg>
<div class="a" style="left:1448px;top:229px;width:452px;height:17px;background:linear-gradient(#373737,#2f2f2f);"></div>
<div class="a" style="left:1447.5px;top:229px;width:16px;height:16.5px;background:#34507c;border:1px solid #8ea6c8"></div>
<svg class="a" style="left:1449.5px;top:231px;" width="12" height="12" viewBox="0 0 12 12"><circle cx="6" cy="6" r="5.4" fill="#4f8be0"/><path d="M6 2.4L9.4 6.2H7.2V9.6H4.8V6.2H2.6Z" fill="#e8f2ff"/></svg>
<div class="t" style="left:1467.00px;top:232.67px;font-size:11.5px;color:#d6d6d6;transform:scaleX(0.9616);transform-origin:0 0;">merge3</div>
<div class="a" style="left:1884px;top:229px;width:16.5px;height:16.5px;background:#4a3a3a;border:1px solid #b8b8b8"></div>
<svg class="a" style="left:1886px;top:231px;" width="12" height="12" viewBox="0 0 12 12"><circle cx="6" cy="6" r="5.6" fill="#f0565a"/><rect x="2.6" y="4.9" width="6.8" height="2.3" fill="#5a0c10"/></svg>
<div class="a" style="left:1902px;top:194px;width:14px;height:120.5px;background:#3a3a3a;border:1px solid #1c1c1c"></div>
<div class="a" style="left:11px;top:1006px;width:1909px;height:2px;background:#2a2a2a;"></div>
<div class="a" style="left:0px;top:1007.3px;width:1920px;height:1px;background:#555;"></div>
<div class="a" style="left:0px;top:1008.3px;width:1920px;height:44.7px;background:#393939;"></div>
<div class="a" style="left:0px;top:1008px;width:11px;height:45px;background:#404040;border-right:1.5px solid #1c1c1c"></div>
<svg class="a" style="left:3px;top:1044px;" width="7" height="6" viewBox="0 0 7 6"><path d="M0 0H7L3.5 5Z" fill="#0a0a0a"/></svg>
<div class="a" style="left:15px;top:1016px;width:26px;height:27.5px;background:linear-gradient(#535353,#3f3f3f);border:1px solid #2a2a2a;border-top-color:#5e5e5e"></div>
<svg class="a" style="left:15px;top:1016px;" width="26" height="27" viewBox="0 0 26 27"><rect x="4.5" y="8.5" width="2.6" height="10" fill="#d6d6d6"/><path d="M13 8.5V18.5L7.5 13.5Z M19 8.5V18.5L13.5 13.5Z" fill="#d6d6d6"/></svg>
<div class="a" style="left:42px;top:1016px;width:26px;height:27.5px;background:linear-gradient(#535353,#3f3f3f);border:1px solid #2a2a2a;border-top-color:#5e5e5e"></div>
<svg class="a" style="left:42px;top:1016px;" width="26" height="27" viewBox="0 0 26 27"><rect x="8" y="8.5" width="2.8" height="10" fill="#7ec83a"/><path d="M18.5 9V18L12.5 13.5Z" fill="#d6d6d6"/></svg>
<div class="a" style="left:69px;top:1016px;width:26px;height:27.5px;background:linear-gradient(#535353,#3f3f3f);border:1px solid #2a2a2a;border-top-color:#5e5e5e"></div>
<svg class="a" style="left:69px;top:1016px;" width="26" height="27" viewBox="0 0 26 27"><path d="M14 8.5V18.5L7 13.5Z" fill="#d6d6d6"/><rect x="15.8" y="8.5" width="2.8" height="10" fill="#d6d6d6"/></svg>
<div class="a" style="left:96px;top:1016px;width:26px;height:27.5px;background:linear-gradient(#535353,#3f3f3f);border:1px solid #2a2a2a;border-top-color:#5e5e5e"></div>
<svg class="a" style="left:96px;top:1016px;" width="26" height="27" viewBox="0 0 26 27"><path d="M17 7.5V19.5L8.5 13.5Z" fill="#d6d6d6"/></svg>
<div class="a" style="left:123px;top:1016px;width:26px;height:27.5px;background:#c8922a;border:1px solid #8a6418"></div>
<svg class="a" style="left:123px;top:1016px;" width="26" height="27" viewBox="0 0 26 27"><rect x="7" y="7.5" width="12" height="12" fill="#d9d9d9" stroke="#f4f4f4" stroke-width="1"/></svg>
<div class="a" style="left:150px;top:1016px;width:26px;height:27.5px;background:linear-gradient(#535353,#3f3f3f);border:1px solid #2a2a2a;border-top-color:#5e5e5e"></div>
<svg class="a" style="left:150px;top:1016px;" width="26" height="27" viewBox="0 0 26 27"><path d="M9.5 7.5V19.5L19 13.5Z" fill="#d6d6d6"/></svg>
<div class="a" style="left:177px;top:1016px;width:26px;height:27.5px;background:linear-gradient(#535353,#3f3f3f);border:1px solid #2a2a2a;border-top-color:#5e5e5e"></div>
<svg class="a" style="left:177px;top:1016px;" width="26" height="27" viewBox="0 0 26 27"><rect x="7.5" y="8.5" width="2.8" height="10" fill="#d6d6d6"/><path d="M12 8.5V18.5L19 13.5Z" fill="#d6d6d6"/></svg>
<div class="a" style="left:204px;top:1016px;width:26px;height:27.5px;background:linear-gradient(#535353,#3f3f3f);border:1px solid #2a2a2a;border-top-color:#5e5e5e"></div>
<svg class="a" style="left:204px;top:1016px;" width="26" height="27" viewBox="0 0 26 27"><path d="M7.5 9V18L13.5 13.5Z" fill="#d6d6d6"/><rect x="15" y="8.5" width="2.8" height="10" fill="#7ec83a"/></svg>
<div class="a" style="left:231px;top:1016px;width:26px;height:27.5px;background:linear-gradient(#535353,#3f3f3f);border:1px solid #2a2a2a;border-top-color:#5e5e5e"></div>
<svg class="a" style="left:231px;top:1016px;" width="26" height="27" viewBox="0 0 26 27"><path d="M5 8.5V18.5L10.5 13.5Z M11 8.5V18.5L16.5 13.5Z" fill="#d6d6d6"/><rect x="17" y="8.5" width="2.6" height="10" fill="#d6d6d6"/></svg>
<div class="a" style="left:263px;top:1017px;width:48.5px;height:27.5px;background:#1b1b1b;border:1px solid #2a2a2a"></div>
<div class="t" style="left:265.50px;top:1024.60px;font-size:13px;color:#e4e4e4;transform:scaleX(0.8546);transform-origin:0 0;font-family:'Liberation Mono',monospace;">239</div>
<div class="a" style="left:314.5px;top:1015px;width:41px;height:13.5px;background:#171717;"></div>
<div class="t" style="left:317.50px;top:1015.60px;font-size:13px;color:#e8e8e8;transform:scaleX(0.6666);transform-origin:0 0;font-family:'Liberation Mono',monospace;">1</div>
<div class="t" style="left:317.50px;top:1032.50px;font-size:13px;color:#e8e8e8;transform:scaleX(0.6666);transform-origin:0 0;font-family:'Liberation Mono',monospace;">1</div>
<svg class="a" style="left:0;top:0" width="1920" height="1080"><line x1="357.5" y1="1025.6" x2="1746" y2="1025.6" stroke="#d4d4d4" stroke-width="1.1"/><line x1="385.7" y1="1022.8" x2="385.7" y2="1028.6" stroke="#bdbdbd" stroke-width="1"/><line x1="420.5" y1="1022.8" x2="420.5" y2="1028.6" stroke="#bdbdbd" stroke-width="1"/><line x1="455.3" y1="1022.8" x2="455.3" y2="1028.6" stroke="#bdbdbd" stroke-width="1"/><line x1="490.1" y1="1021.5" x2="490.1" y2="1030" stroke="#e0e0e0" stroke-width="1.1"/><line x1="524.9" y1="1022.8" x2="524.9" y2="1028.6" stroke="#bdbdbd" stroke-width="1"/><line x1="559.7" y1="1022.8" x2="559.7" y2="1028.6" stroke="#bdbdbd" stroke-width="1"/><line x1="594.5" y1="1022.8" x2="594.5" y2="1028.6" stroke="#bdbdbd" stroke-width="1"/><line x1="629.3" y1="1021.5" x2="629.3" y2="1030" stroke="#e0e0e0" stroke-width="1.1"/><line x1="664.1" y1="1022.8" x2="664.1" y2="1028.6" stroke="#bdbdbd" stroke-width="1"/><line x1="698.9" y1="1022.8" x2="698.9" y2="1028.6" stroke="#bdbdbd" stroke-width="1"/><line x1="733.7" y1="1022.8" x2="733.7" y2="1028.6" stroke="#bdbdbd" stroke-width="1"/><line x1="768.5" y1="1021.5" x2="768.5" y2="1030" stroke="#e0e0e0" stroke-width="1.1"/><line x1="803.3" y1="1022.8" x2="803.3" y2="1028.6" stroke="#bdbdbd" stroke-width="1"/><line x1="838.1" y1="1022.8" x2="838.1" y2="1028.6" stroke="#bdbdbd" stroke-width="1"/><line x1="872.9" y1="1022.8" x2="872.9" y2="1028.6" stroke="#bdbdbd" stroke-width="1"/><line x1="907.7" y1="1021.5" x2="907.7" y2="1030" stroke="#e0e0e0" stroke-width="1.1"/><line x1="942.5" y1="1022.8" x2="942.5" y2="1028.6" stroke="#bdbdbd" stroke-width="1"/><line x1="977.3" y1="1022.8" x2="977.3" y2="1028.6" stroke="#bdbdbd" stroke-width="1"/><line x1="1012.1" y1="1022.8" x2="1012.1" y2="1028.6" stroke="#bdbdbd" stroke-width="1"/><line x1="1046.9" y1="1021.5" x2="1046.9" y2="1030" stroke="#e0e0e0" stroke-width="1.1"/><line x1="1081.7" y1="1022.8" x2="1081.7" y2="1028.6" stroke="#bdbdbd" stroke-width="1"/><line x1="1116.5" y1="1022.8" x2="1116.5" y2="1028.6" stroke="#bdbdbd" stroke-width="1"/><line x1="1151.3" y1="1022.8" x2="1151.3" y2="1028.6" stroke="#bdbdbd" stroke-width="1"/><line x1="1186.1" y1="1021.5" x2="1186.1" y2="1030" stroke="#e0e0e0" stroke-width="1.1"/><line x1="1220.9" y1="1022.8" x2="1220.9" y2="1028.6" stroke="#bdbdbd" stroke-width="1"/><line x1="1255.7" y1="1022.8" x2="1255.7" y2="1028.6" stroke="#bdbdbd" stroke-width="1"/><line x1="1290.5" y1="1022.8" x2="1290.5" y2="1028.6" stroke="#bdbdbd" stroke-width="1"/><line x1="1325.3" y1="1021.5" x2="1325.3" y2="1030" stroke="#e0e0e0" stroke-width="1.1"/><line x1="1360.1" y1="1022.8" x2="1360.1" y2="1028.6" stroke="#bdbdbd" stroke-width="1"/><line x1="1394.9" y1="1022.8" x2="1394.9" y2="1028.6" stroke="#bdbdbd" stroke-width="1"/><line x1="1429.7" y1="1022.8" x2="1429.7" y2="1028.6" stroke="#bdbdbd" stroke-width="1"/><line x1="1464.5" y1="1021.5" x2="1464.5" y2="1030" stroke="#e0e0e0" stroke-width="1.1"/><line x1="1499.3" y1="1022.8" x2="1499.3" y2="1028.6" stroke="#bdbdbd" stroke-width="1"/><line x1="1534.1" y1="1022.8" x2="1534.1" y2="1028.6" stroke="#bdbdbd" stroke-width="1"/><line x1="1568.9" y1="1022.8" x2="1568.9" y2="1028.6" stroke="#bdbdbd" stroke-width="1"/><line x1="1603.7" y1="1021.5" x2="1603.7" y2="1030" stroke="#e0e0e0" stroke-width="1.1"/><line x1="1638.5" y1="1022.8" x2="1638.5" y2="1028.6" stroke="#bdbdbd" stroke-width="1"/><line x1="1673.3" y1="1022.8" x2="1673.3" y2="1028.6" stroke="#bdbdbd" stroke-width="1"/><line x1="1708.1" y1="1022.8" x2="1708.1" y2="1028.6" stroke="#bdbdbd" stroke-width="1"/><line x1="1742.9" y1="1021.5" x2="1742.9" y2="1030" stroke="#e0e0e0" stroke-width="1.1"/><line x1="358" y1="1020" x2="358" y2="1026" stroke="#d4d4d4" stroke-width="1"/></svg>
<div class="t" style="left:360.00px;top:1011.61px;font-size:10.5px;color:#c8c8c8;transform:scaleX(0.9000);transform-origin:0 0;">1</div>
<div class="t" style="left:491.90px;top:1011.61px;font-size:10.5px;color:#c0c0c0;transform:scaleX(0.8800);transform-origin:0 0;">24</div>
<div class="t" style="left:631.10px;top:1011.61px;font-size:10.5px;color:#c0c0c0;transform:scaleX(0.8800);transform-origin:0 0;">48</div>
<div class="t" style="left:770.30px;top:1011.61px;font-size:10.5px;color:#c0c0c0;transform:scaleX(0.8800);transform-origin:0 0;">72</div>
<div class="t" style="left:909.50px;top:1011.61px;font-size:10.5px;color:#c0c0c0;transform:scaleX(0.8800);transform-origin:0 0;">96</div>
<div class="t" style="left:1048.70px;top:1011.61px;font-size:10.5px;color:#c0c0c0;transform:scaleX(0.8800);transform-origin:0 0;">120</div>
<div class="t" style="left:1187.90px;top:1011.61px;font-size:10.5px;color:#c0c0c0;transform:scaleX(0.8800);transform-origin:0 0;">144</div>
<div class="t" style="left:1327.10px;top:1011.61px;font-size:10.5px;color:#c0c0c0;transform:scaleX(0.8800);transform-origin:0 0;">168</div>
<div class="t" style="left:1466.30px;top:1011.61px;font-size:10.5px;color:#c0c0c0;transform:scaleX(0.8800);transform-origin:0 0;">192</div>
<div class="t" style="left:1605.50px;top:1011.61px;font-size:10.5px;color:#c0c0c0;transform:scaleX(0.8800);transform-origin:0 0;">216</div>
<div class="a" style="left:357.5px;top:1043.5px;width:1389px;height:6.5px;background:linear-gradient(#505050,#424242);border-radius:1px"></div>
<div class="a" style="left:358px;top:1043.5px;width:17px;height:6.5px;background:#4c4c4c;border-left:1px solid #333;border-right:1px solid #333"></div>
<svg class="a" style="left:362.5px;top:1046.4px;" width="8" height="2" viewBox="0 0 8 2"><rect x="0" y="0" width="1.4" height="1.5" fill="#0c0c0c"/><rect x="2.2" y="0" width="1.4" height="1.5" fill="#0c0c0c"/><rect x="4.4" y="0" width="1.4" height="1.5" fill="#0c0c0c"/><rect x="6.6" y="0" width="1.4" height="1.5" fill="#0c0c0c"/></svg>
<div class="a" style="left:1043px;top:1043.5px;width:16px;height:6.5px;background:#4c4c4c;border-left:1px solid #333;border-right:1px solid #333"></div>
<svg class="a" style="left:1047px;top:1046.4px;" width="8" height="2" viewBox="0 0 8 2"><rect x="0" y="0" width="1.4" height="1.5" fill="#0c0c0c"/><rect x="2.2" y="0" width="1.4" height="1.5" fill="#0c0c0c"/><rect x="4.4" y="0" width="1.4" height="1.5" fill="#0c0c0c"/><rect x="6.6" y="0" width="1.4" height="1.5" fill="#0c0c0c"/></svg>
<div class="a" style="left:1728px;top:1043.5px;width:19px;height:6.5px;background:#4c4c4c;border-left:1px solid #333;border-right:1px solid #333"></div>
<svg class="a" style="left:1733.5px;top:1046.4px;" width="8" height="2" viewBox="0 0 8 2"><rect x="0" y="0" width="1.4" height="1.5" fill="#0c0c0c"/><rect x="2.2" y="0" width="1.4" height="1.5" fill="#0c0c0c"/><rect x="4.4" y="0" width="1.4" height="1.5" fill="#0c0c0c"/><rect x="6.6" y="0" width="1.4" height="1.5" fill="#0c0c0c"/></svg>
<div class="a" style="left:1735.3px;top:1027px;width:2.6px;height:16.5px;background:#121212;"></div>
<div class="a" style="left:1721px;top:1009px;width:27px;height:18px;background:#050505;border:1.2px solid #f0f0f0"></div>
<div class="t" style="left:1725.00px;top:1011.57px;font-size:13.5px;color:#ededed;transform:scaleX(0.7982);transform-origin:0 0;font-family:'Liberation Mono',monospace;">239</div>
<div class="a" style="left:1751px;top:1015.6px;width:41px;height:12.8px;background:#171717;"></div>
<div class="t" style="left:1753.70px;top:1015.80px;font-size:13px;color:#e6e6e6;transform:scaleX(0.8461);transform-origin:0 0;font-family:'Liberation Mono',monospace;">240</div>
<div class="t" style="left:1753.70px;top:1032.80px;font-size:13px;color:#e6e6e6;transform:scaleX(0.8461);transform-origin:0 0;font-family:'Liberation Mono',monospace;">240</div>
<div class="a" style="left:1795px;top:1015.6px;width:26px;height:27px;background:linear-gradient(#515151,#444);border:1px solid #2c2c2c;border-top-color:#606060"></div>
<svg class="a" style="left:1798px;top:1018px;" width="22" height="22" viewBox="0 0 22 22"><circle cx="6.5" cy="6" r="3.6" fill="none" stroke="#e2e2e2" stroke-width="2.4"/><path d="M9 8.5L17 15.5M14 13L12 15.2M16.5 15.2L14.6 17.4" stroke="#dcdcdc" stroke-width="2.3" fill="none"/></svg>
<div class="a" style="left:1827px;top:1018px;width:21px;height:22px;background:#c8922a;border:1px solid #8a6418"></div>
<div class="a" style="left:1848.3px;top:1018px;width:21.5px;height:22px;background:linear-gradient(#505050,#414141);border:1px solid #2a2a2a;border-top-color:#5a5a5a"></div>
<div class="a" style="left:1870.6px;top:1018px;width:21.5px;height:22px;background:linear-gradient(#505050,#414141);border:1px solid #2a2a2a;border-top-color:#5a5a5a"></div>
<div class="a" style="left:1892.6px;top:1018px;width:21.5px;height:22px;background:linear-gradient(#505050,#414141);border:1px solid #2a2a2a;border-top-color:#5a5a5a"></div>
<svg class="a" style="left:1827px;top:1018px;" width="21" height="22" viewBox="0 0 21 22"><circle cx="10.5" cy="11" r="6" fill="#e8e8e8" stroke="#1c2440" stroke-width="1.8"/><path d="M10.5 7V11H14" stroke="#1c2440" stroke-width="1.3" fill="none"/></svg>
<svg class="a" style="left:1848.3px;top:1018px;" width="21" height="22" viewBox="0 0 21 22"><path d="M5 9H13A4 4 0 0 1 17 13V14H5" fill="none" stroke="#e6e6e6" stroke-width="1.8"/><path d="M8 5.5L4 9L8 12.5" fill="none" stroke="#e6e6e6" stroke-width="1.8"/><path d="M12 17H18L15 20Z" fill="#777"/></svg>
<svg class="a" style="left:1870.6px;top:1018px;" width="21" height="22" viewBox="0 0 21 22"><ellipse cx="12" cy="11" rx="4" ry="7.5" fill="#555" stroke="#ccc" stroke-width="1.2"/><ellipse cx="12.5" cy="11" rx="1.6" ry="3.4" fill="#222"/><path d="M4 9H7V13H4Z" fill="#bbb"/></svg>
<svg class="a" style="left:1892.6px;top:1018px;" width="21" height="22" viewBox="0 0 21 22"><rect x="5" y="6" width="10" height="9" fill="#ececec"/><rect x="5" y="4.5" width="10" height="2" fill="#aaa"/><path d="M11 10L18 13.5L14 14.5L12.5 18Z" fill="#ddd" stroke="#333" stroke-width=".6"/></svg>
<div class="a" style="left:0px;top:1052.6px;width:1920px;height:1.4px;background:#151515;"></div>
<div class="a" style="left:0px;top:1054px;width:1920px;height:26px;background:#1c1c1c;"></div>
<div class="a" style="left:0px;top:1054px;width:11px;height:26px;background:#242424;"></div>
<div class="a" style="left:1747px;top:1054px;width:173px;height:26px;background:#343434;"></div>
<div class="a" style="left:1800.6px;top:1055px;width:93px;height:23.5px;background:linear-gradient(#474747,#3a3a3a);border-left:1px solid #565656;border-top:1px solid #505050"></div>
<div class="t" style="left:1816.80px;top:1060.47px;font-size:11.5px;color:#d0d0d0;transform:scaleX(0.9697);transform-origin:0 0;">Auto Update</div>
<div class="a" style="left:1894px;top:1055px;width:22px;height:24px;background:#2e2e2e;"></div>
<svg class="a" style="left:1903px;top:1059px;" width="8" height="15" viewBox="0 0 8 15"><path d="M4 0L7.5 5.5H0.5Z M4 15L7.5 9.5H0.5Z" fill="#6a6a6a"/></svg>
<div class="a" style="left:1917px;top:1008px;width:3px;height:72px;background:#262626;"></div>
<div class="a" style="left:0px;top:1079px;width:1920px;height:1px;background:#2c2c2c;"></div>
<div class="a" style="left:696px;top:1078.5px;width:18px;height:1.5px;background:#5a2626;"></div>
<svg class="a" style="left:1750px;top:1057px;" width="22" height="20" viewBox="0 0 22 20"><ellipse cx="9.5" cy="8" rx="8" ry="6.4" fill="#c9c9c9"/><path d="M12 12L15 17L16 12Z" fill="#c9c9c9"/><path d="M16 15L20 17.5L16 20Z" fill="#777"/></svg>
<svg class="a" style="left:1779px;top:1058px;" width="16" height="16" viewBox="0 0 16 16"><path d="M3 7A5 5 0 0 1 12 5M13 9A5 5 0 0 1 4 11" fill="none" stroke="#565656" stroke-width="2"/><path d="M12 2V6H8Z M4 14V10H8Z" fill="#565656"/></svg>
</body></html>
